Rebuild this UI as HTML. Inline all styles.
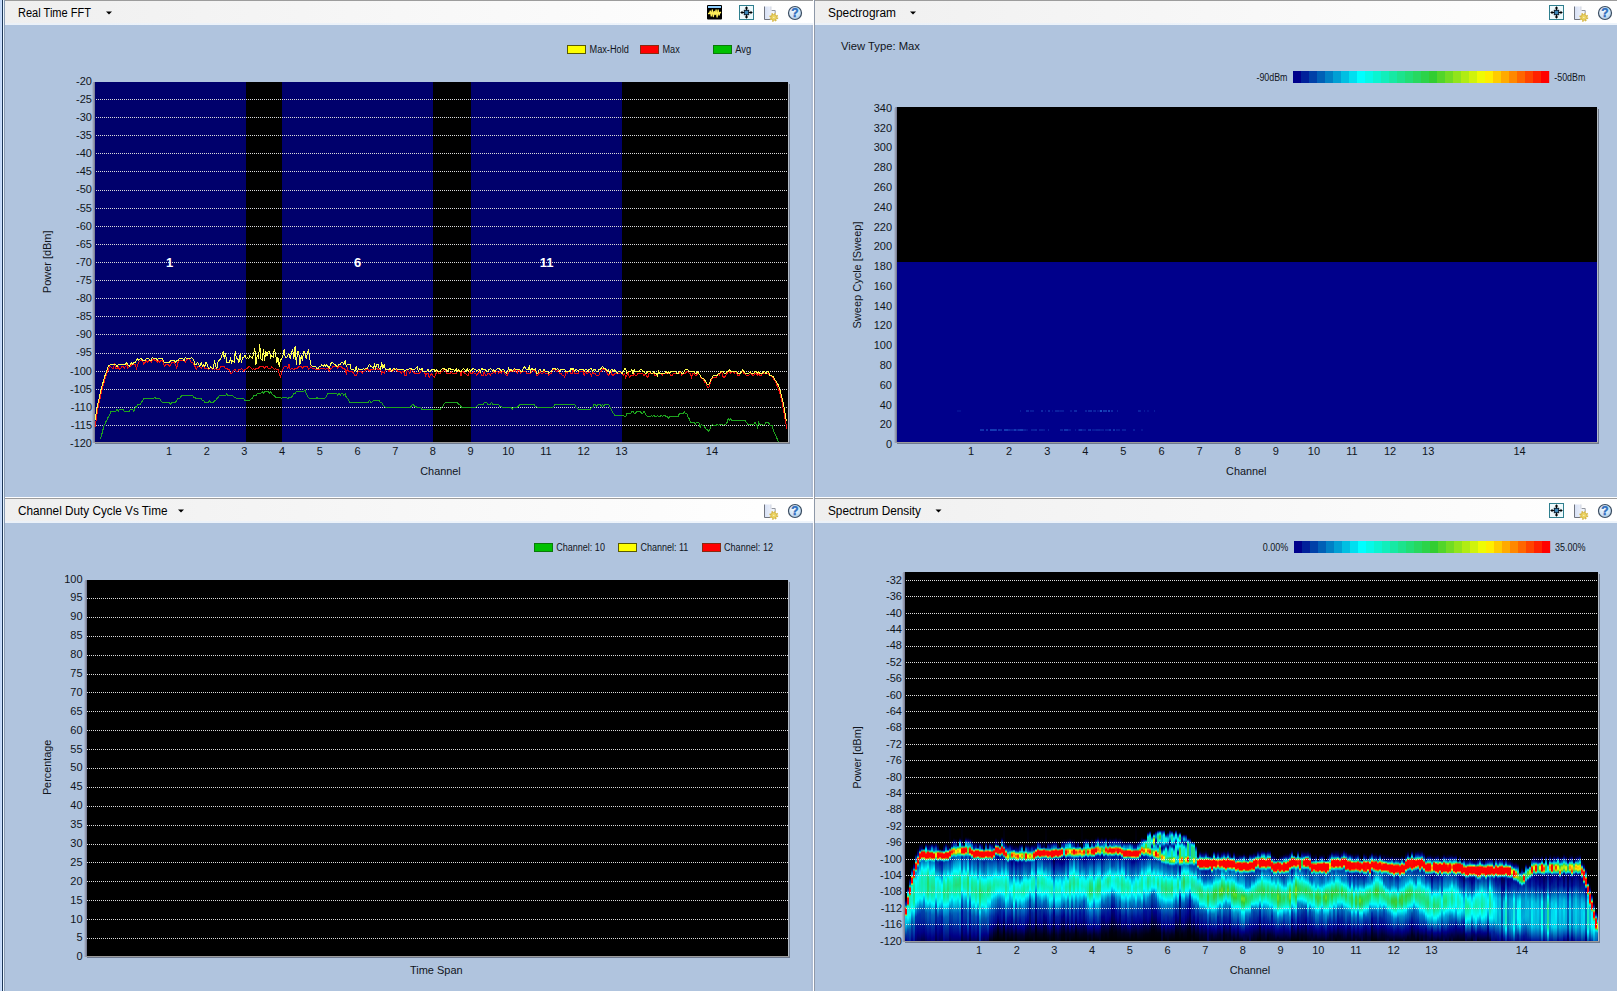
<!DOCTYPE html>
<html><head><meta charset="utf-8"><title>Spectrum</title>
<style>
html,body{margin:0;padding:0;background:#b0c4de;overflow:hidden}
body{width:1617px;height:991px;position:relative;font-family:"Liberation Sans",sans-serif}
#ov{position:absolute;left:0;top:0;z-index:5}
.pb{position:absolute;background:#000}
#dm{position:absolute;display:flex;z-index:2}
#dm i{display:block;flex:none;height:100%}
</style></head><body>
<div class="pb" style="left:95px;top:82px;width:693px;height:360px"></div><div class="pb" style="left:95px;top:82px;width:151px;height:360px;background:#00006c"></div><div class="pb" style="left:282px;top:82px;width:151px;height:360px;background:#00006c"></div><div class="pb" style="left:471px;top:82px;width:151px;height:360px;background:#00006c"></div><div class="pb" style="left:897px;top:107px;width:700px;height:335px"></div><div class="pb" style="left:897px;top:262px;width:700px;height:180px;background:#00008b"></div><div class="pb" style="left:87px;top:580px;width:701px;height:376px"></div><div class="pb" style="left:905px;top:572px;width:693px;height:369px"></div><div id="dm" style="left:905px;top:818px;width:693px;height:123px"><i style="width:2px;background:linear-gradient(#000 0px,#000 80px,#002 82px,#006 84px,#019 85px,#03a 87px,#07b 88px,#1ea 89px,#f60 90px,#f00 91px,#f00 96px,#be1 97px,#1ea 98px,#0ef 99px,#0de 100px,#0ad 108px,#039 117px,#008 123px)"></i><i style="width:2px;background:linear-gradient(#000 0px,#000 68px,#001 70px,#003 71px,#007 72px,#039 73px,#0de 75px,#0fe 76px,#0fd 77px,#1ea 78px,#ce1 79px,#f00 80px,#f00 86px,#5d2 87px,#1eb 88px,#0fe 89px,#0fe 90px,#0ff 100px,#04a 113px,#019 123px)"></i><i style="width:2px;background:linear-gradient(#000 0px,#000 59px,#001 61px,#019 64px,#05b 67px,#0cd 68px,#3c3 69px,#f00 70px,#f00 75px,#f40 76px,#5d2 77px,#1e9 78px,#1eb 79px,#1ec 90px,#0ff 97px,#05a 112px,#029 123px)"></i><i style="width:2px;background:linear-gradient(#000 0px,#000 48px,#001 50px,#005 52px,#018 53px,#06b 55px,#09c 57px,#1ed 58px,#ce1 59px,#f00 60px,#f00 65px,#ff0 66px,#2d7 67px,#1ec 68px,#0fd 69px,#1ec 82px,#0ff 91px,#08c 99px,#05a 104px,#008 123px)"></i><i style="width:2px;background:linear-gradient(#000 0px,#000 43px,#001 45px,#008 49px,#019 50px,#07b 51px,#2d6 52px,#f00 53px,#f00 58px,#f20 59px,#5d2 60px,#1eb 61px,#0fd 62px,#2d9 69px,#2d8 78px,#1e9 85px,#0ff 93px,#09c 100px,#07b 104px,#019 123px)"></i><i style="width:2px;background:linear-gradient(#000 0px,#000 35px,#002 37px,#019 39px,#06b 41px,#09c 43px,#1eb 44px,#fb0 45px,#f00 46px,#f00 51px,#6d2 52px,#0fe 53px,#09c 54px,#08c 55px,#0ff 63px,#0fd 72px,#0ff 84px,#03a 99px,#008 117px,#006 123px)"></i><i style="width:2px;background:linear-gradient(#000 0px,#000 30px,#003 33px,#008 35px,#029 37px,#05b 38px,#1eb 39px,#fa0 40px,#f00 41px,#f00 45px,#fa0 46px,#2d7 47px,#0bd 48px,#07b 49px,#06b 50px,#0ff 59px,#1ec 70px,#0ff 82px,#06b 92px,#03a 97px,#008 114px,#005 123px)"></i><i style="width:2px;background:linear-gradient(#000 0px,#000 26px,#002 28px,#008 32px,#03a 33px,#1ec 34px,#f80 35px,#f00 36px,#f00 41px,#3c3 42px,#0de 43px,#07b 44px,#06b 45px,#0ff 55px,#1ec 61px,#1eb 68px,#1ec 75px,#0ff 80px,#08c 87px,#03a 96px,#008 115px,#005 123px)"></i><i style="width:2px;background:linear-gradient(#000 0px,#000 25px,#005 30px,#008 31px,#07b 32px,#3c5 33px,#f00 34px,#f00 39px,#de1 40px,#1eb 41px,#0ad 42px,#07c 43px,#0ff 50px,#1eb 56px,#1ea 64px,#1eb 74px,#0ff 81px,#08c 88px,#04a 93px,#008 114px,#004 123px)"></i><i style="width:2px;background:linear-gradient(#000 0px,#000 30px,#004 31px,#09c 32px,#8d2 33px,#f00 34px,#f00 39px,#ef0 40px,#1eb 41px,#09c 42px,#07b 43px,#07b 44px,#0ff 52px,#1ec 58px,#1eb 66px,#1ec 73px,#0ff 77px,#08c 84px,#04a 93px,#008 113px,#004 123px)"></i><i style="width:2px;background:linear-gradient(#000 0px,#000 23px,#001 25px,#002 26px,#005 27px,#019 28px,#0ef 31px,#0fd 33px,#2d5 34px,#f60 35px,#f00 36px,#f00 40px,#fa0 41px,#2d6 42px,#0ee 43px,#09c 44px,#09c 45px,#0ff 51px,#1eb 58px,#1ea 66px,#1eb 76px,#0ff 83px,#05a 95px,#008 116px,#005 123px)"></i><i style="width:2px;background:linear-gradient(#000 0px,#000 25px,#002 27px,#008 31px,#05a 32px,#2d7 33px,#f00 34px,#f00 40px,#ae1 41px,#1ed 42px,#0bd 43px,#0ad 44px,#0fe 49px,#2d8 57px,#2d6 65px,#2d7 75px,#0ff 85px,#09c 90px,#06b 95px,#008 119px,#006 123px)"></i><i style="width:2px;background:linear-gradient(#000 0px,#000 25px,#002 27px,#007 29px,#03a 32px,#0de 33px,#7d2 34px,#f00 35px,#f00 39px,#f90 40px,#2d5 41px,#0ee 42px,#07b 43px,#06b 44px,#0ff 55px,#1eb 61px,#1e9 68px,#1eb 76px,#0ff 83px,#09c 89px,#05b 95px,#008 118px,#006 123px)"></i><i style="width:2px;background:linear-gradient(#000 0px,#000 24px,#002 26px,#005 27px,#019 28px,#08c 30px,#0bd 32px,#0fe 33px,#5d2 34px,#f00 35px,#f00 40px,#ce1 41px,#1eb 42px,#0ad 43px,#08c 44px,#08c 45px,#0ff 53px,#1ea 61px,#2d8 69px,#1ea 78px,#0ff 85px,#0ad 91px,#06b 97px,#008 120px,#007 123px)"></i><i style="width:2px;background:linear-gradient(#000 0px,#000 25px,#002 27px,#008 29px,#07b 33px,#0fd 34px,#be1 35px,#f00 36px,#f00 40px,#fc0 41px,#2d6 42px,#0de 43px,#09c 44px,#08c 45px,#0ff 51px,#1ea 61px,#2d8 70px,#1eb 78px,#0ff 86px,#09c 92px,#06b 97px,#008 119px,#007 123px)"></i><i style="width:2px;background:linear-gradient(#000 0px,#000 23px,#001 25px,#005 27px,#008 28px,#05b 30px,#07b 32px,#0de 33px,#2d7 34px,#be1 35px,#fd0 36px,#fc0 38px,#ce1 39px,#3c4 40px,#0fe 41px,#06b 42px,#029 43px,#029 44px,#05a 50px,#0ff 61px,#1ed 71px,#0ff 79px,#06b 87px,#039 95px,#008 111px,#004 123px)"></i><i style="width:2px;background:linear-gradient(#000 0px,#000 25px,#001 27px,#007 31px,#019 32px,#0bd 33px,#9e1 34px,#f00 35px,#f00 40px,#fe0 41px,#1ec 42px,#06b 43px,#039 44px,#03a 47px,#07b 53px,#0ff 60px,#1ec 65px,#1eb 72px,#1ec 79px,#0ff 87px,#06b 96px,#03a 100px,#008 117px,#006 123px)"></i><i style="width:2px;background:linear-gradient(#000 0px,#000 31px,#005 32px,#09c 33px,#3c3 34px,#f30 35px,#f00 36px,#f00 39px,#ff0 40px,#2d9 41px,#09c 42px,#039 43px,#019 45px,#05a 52px,#0ff 63px,#1eb 73px,#1ec 77px,#0ff 84px,#06b 93px,#03a 98px,#008 114px,#005 123px)"></i><i style="width:2px;background:linear-gradient(#000 0px,#000 31px,#002 32px,#04a 33px,#2d8 34px,#f40 35px,#f00 36px,#f00 40px,#8d2 41px,#0fe 42px,#04a 43px,#019 44px,#019 45px,#03a 52px,#0ff 67px,#0fd 74px,#0ff 80px,#0de 84px,#05b 93px,#029 99px,#008 112px,#005 123px)"></i><i style="width:2px;background:linear-gradient(#000 0px,#000 26px,#002 28px,#008 32px,#039 33px,#0ff 34px,#be1 35px,#f00 36px,#f00 40px,#fe0 41px,#2d9 42px,#0ad 43px,#05a 44px,#04a 45px,#07b 50px,#0fe 58px,#1e9 66px,#2d7 74px,#1e9 80px,#0ff 87px,#0bd 91px,#05b 101px,#008 123px)"></i><i style="width:2px;background:linear-gradient(#000 0px,#000 24px,#002 26px,#008 28px,#06b 30px,#09c 32px,#0ff 33px,#5d2 34px,#f00 35px,#f00 39px,#f40 40px,#4c3 41px,#0ff 42px,#06b 43px,#04a 44px,#0ff 62px,#1eb 67px,#1e9 73px,#1eb 81px,#0ff 87px,#0ad 92px,#06b 99px,#007 123px)"></i><i style="width:2px;background:linear-gradient(#000 0px,#000 25px,#001 27px,#007 31px,#029 32px,#0fe 33px,#fd0 34px,#f00 35px,#f00 40px,#5d2 41px,#0ff 42px,#07b 43px,#05b 44px,#09c 51px,#0ff 56px,#1e9 63px,#2d7 71px,#2d9 79px,#0ff 86px,#0ad 91px,#06b 99px,#007 123px)"></i><i style="width:2px;background:linear-gradient(#000 0px,#001 26px,#002 29px,#003 30px,#04a 31px,#1e9 32px,#f50 33px,#f00 34px,#f00 38px,#de1 39px,#1ec 40px,#07b 41px,#03a 42px,#03a 44px,#08c 52px,#0ff 59px,#1ea 65px,#1e9 71px,#1eb 76px,#0ff 82px,#09c 88px,#04a 96px,#008 116px,#005 123px)"></i><i style="width:2px;background:linear-gradient(#000 0px,#000 22px,#007 28px,#029 29px,#0de 30px,#4c3 31px,#f90 32px,#f20 33px,#f20 35px,#fa0 36px,#4c3 37px,#0fd 38px,#07c 39px,#04a 40px,#04a 42px,#08c 49px,#0ff 56px,#1ea 68px,#1eb 74px,#0ff 79px,#0bd 84px,#04a 98px,#008 117px,#006 123px)"></i><i style="width:2px;background:linear-gradient(#000 0px,#000 20px,#002 22px,#007 24px,#019 25px,#05a 28px,#0ce 29px,#2d5 30px,#fe0 31px,#f70 32px,#f60 33px,#f60 34px,#fb0 35px,#6d2 36px,#1eb 37px,#0ad 38px,#06b 39px,#05a 40px,#08c 45px,#0ff 53px,#1e9 61px,#2d8 68px,#1ea 75px,#0ff 82px,#06b 95px,#008 118px,#006 123px)"></i><i style="width:2px;background:linear-gradient(#000 0px,#000 21px,#003 23px,#006 24px,#019 25px,#08c 29px,#0fe 30px,#3c3 31px,#df0 32px,#fe0 33px,#fd0 34px,#fe0 35px,#8d2 36px,#2d7 37px,#0ee 38px,#07b 39px,#06b 40px,#0bd 48px,#0ff 53px,#2d9 62px,#2d7 67px,#1e9 73px,#0fe 81px,#06b 95px,#008 118px,#006 123px)"></i><i style="width:2px;background:linear-gradient(#000 0px,#000 21px,#003 27px,#019 28px,#0de 29px,#3c4 30px,#ef0 31px,#fc0 32px,#fa0 33px,#fc0 34px,#ae1 35px,#2d6 36px,#0ef 37px,#08c 38px,#06b 39px,#0ff 54px,#1e9 61px,#2d7 67px,#1ea 73px,#0fe 79px,#05b 96px,#008 118px,#006 123px)"></i><i style="width:2px;background:linear-gradient(#000 0px,#000 19px,#002 21px,#006 22px,#029 23px,#0de 25px,#0fe 26px,#0fd 28px,#1ea 29px,#4c3 30px,#de1 31px,#ff0 32px,#ff0 33px,#ff0 34px,#9e1 35px,#2d6 36px,#0fe 37px,#09c 38px,#07b 39px,#07c 40px,#0ff 51px,#2d8 61px,#2d7 66px,#1e9 75px,#0ff 83px,#07b 95px,#04a 109px,#008 119px,#006 123px)"></i><i style="width:2px;background:linear-gradient(#000 0px,#001 21px,#003 23px,#007 25px,#019 27px,#06b 28px,#2d9 29px,#f70 30px,#f00 31px,#f00 35px,#ae1 36px,#1ed 37px,#06b 38px,#029 39px,#029 40px,#07b 51px,#0ff 58px,#1ed 65px,#0ff 72px,#06b 82px,#019 93px,#008 107px,#003 123px)"></i><i style="width:2px;background:linear-gradient(#000 0px,#000 26px,#002 27px,#039 28px,#1e9 29px,#f30 30px,#f00 31px,#f00 35px,#fc0 36px,#1e9 37px,#0ad 38px,#05b 39px,#05b 40px,#0ad 48px,#0ff 53px,#1e9 65px,#1ea 69px,#0ff 76px,#0ad 83px,#04a 94px,#008 115px,#004 123px)"></i><i style="width:2px;background:linear-gradient(#000 0px,#000 19px,#003 21px,#006 22px,#029 23px,#0ad 25px,#0ce 27px,#0fd 28px,#5d2 29px,#f40 30px,#f00 31px,#f00 34px,#fc0 35px,#2d6 36px,#0ce 37px,#05a 38px,#03a 39px,#09c 51px,#0ff 56px,#1eb 61px,#1ea 66px,#1eb 71px,#0ff 76px,#08c 83px,#04a 93px,#008 113px,#004 123px)"></i><i style="width:2px;background:linear-gradient(#000 0px,#000 19px,#002 21px,#008 23px,#07b 25px,#09c 26px,#0ad 28px,#0fe 29px,#2d6 30px,#6d2 31px,#8d2 33px,#7d2 34px,#3c4 35px,#1ea 36px,#0ce 37px,#07c 38px,#06b 39px,#0ff 51px,#2d8 59px,#2d6 65px,#2d9 75px,#0ff 83px,#06b 95px,#04a 109px,#008 118px,#005 123px)"></i><i style="width:2px;background:linear-gradient(#000 0px,#000 20px,#003 22px,#007 23px,#06b 25px,#09c 27px,#0ce 28px,#2d6 29px,#f50 30px,#f00 31px,#f00 35px,#ff0 36px,#1eb 37px,#07b 38px,#029 39px,#029 43px,#07b 52px,#0ff 60px,#1ed 67px,#0ff 75px,#06b 84px,#029 96px,#008 110px,#003 123px)"></i><i style="width:2px;background:linear-gradient(#000 0px,#000 21px,#002 23px,#004 24px,#008 25px,#06b 27px,#08c 29px,#0de 30px,#2d6 31px,#fa0 32px,#f00 33px,#f00 36px,#fc0 37px,#3c5 38px,#0ef 39px,#07b 40px,#05a 41px,#07c 46px,#0ff 56px,#1e9 64px,#2d8 70px,#1ea 76px,#0ff 85px,#09c 92px,#05b 98px,#008 118px,#005 123px)"></i><i style="width:2px;background:linear-gradient(#000 0px,#000 23px,#001 25px,#008 28px,#029 30px,#05a 31px,#1ec 32px,#fb0 33px,#f00 34px,#f00 39px,#3c3 40px,#0de 41px,#05a 42px,#04a 43px,#08c 52px,#0fe 59px,#1ea 65px,#1e9 71px,#1eb 77px,#0ff 84px,#09c 90px,#05a 97px,#008 116px,#005 123px)"></i><i style="width:2px;background:linear-gradient(#000 0px,#000 23px,#002 25px,#008 27px,#04a 30px,#0ce 31px,#9e1 32px,#f00 33px,#f00 38px,#f50 39px,#2d8 40px,#09c 41px,#05a 42px,#04a 43px,#09c 51px,#0ff 58px,#1ea 65px,#2d8 72px,#1ea 80px,#0ff 88px,#09c 94px,#05b 99px,#008 118px,#005 123px)"></i><i style="width:2px;background:linear-gradient(#000 0px,#000 23px,#005 29px,#008 30px,#0bd 31px,#ae1 32px,#f00 33px,#f00 38px,#9e1 39px,#0ff 40px,#04a 41px,#029 42px,#039 47px,#07b 55px,#0ff 63px,#1ec 68px,#1eb 73px,#1ec 78px,#0ff 84px,#07b 92px,#03a 99px,#008 114px,#004 123px)"></i><i style="width:2px;background:linear-gradient(#000 0px,#000 23px,#002 25px,#008 27px,#06b 29px,#08c 31px,#0fe 32px,#ae1 33px,#f00 34px,#f00 38px,#f40 39px,#3c3 40px,#0ef 41px,#07b 42px,#05a 43px,#08c 49px,#0ff 58px,#2d8 66px,#2d5 74px,#2d8 84px,#0ef 94px,#0ad 98px,#07b 103px,#029 123px)"></i><i style="width:2px;background:linear-gradient(#000 0px,#000 24px,#002 26px,#008 29px,#019 30px,#03a 31px,#0fe 32px,#fc0 33px,#f00 34px,#f00 39px,#6d2 40px,#0ee 41px,#05a 42px,#039 43px,#08c 54px,#0ff 61px,#1ea 68px,#2d8 74px,#1e9 79px,#0fe 86px,#0ff 87px,#09c 92px,#05a 101px,#008 117px,#005 123px)"></i><i style="width:2px;background:linear-gradient(#000 0px,#000 30px,#003 31px,#06b 32px,#3c5 33px,#f00 34px,#f00 39px,#9d2 40px,#0fe 41px,#05b 42px,#039 43px,#029 44px,#07b 54px,#0ff 62px,#1ea 69px,#1e9 74px,#1ea 79px,#0fe 87px,#08c 94px,#05a 100px,#008 116px,#004 123px)"></i><i style="width:2px;background:linear-gradient(#000 0px,#000 23px,#003 25px,#019 27px,#06b 29px,#07b 30px,#0ad 31px,#2d9 32px,#fa0 33px,#f00 34px,#f00 38px,#ef0 39px,#1eb 40px,#08c 41px,#03a 42px,#039 43px,#09c 56px,#0ff 62px,#1eb 67px,#1ea 73px,#1ec 83px,#0ff 89px,#08c 96px,#05a 101px,#008 116px,#005 123px)"></i><i style="width:2px;background:linear-gradient(#000 0px,#000 25px,#005 30px,#039 31px,#1eb 32px,#f50 33px,#f00 34px,#f00 38px,#f40 39px,#2d6 40px,#0bd 41px,#05b 42px,#04a 43px,#0ff 60px,#1e9 67px,#2d7 72px,#1e9 77px,#0ff 83px,#05b 100px,#04a 109px,#008 117px,#004 123px)"></i><i style="width:2px;background:linear-gradient(#000 0px,#000 23px,#002 25px,#008 27px,#05b 29px,#09c 31px,#1eb 32px,#fd0 33px,#f00 34px,#f00 38px,#f70 39px,#2d6 40px,#0bd 41px,#04a 42px,#03a 43px,#0bd 56px,#0ff 60px,#1ea 65px,#2d8 70px,#1ea 76px,#0ff 84px,#08c 91px,#04a 98px,#008 111px,#001 123px)"></i><i style="width:2px;background:linear-gradient(#000 0px,#000 24px,#002 26px,#008 28px,#05b 31px,#0ad 32px,#3c4 33px,#f00 34px,#f00 39px,#f60 40px,#2d8 41px,#09c 42px,#04a 43px,#04a 44px,#0ad 55px,#0ff 60px,#1ea 69px,#1eb 73px,#0ff 79px,#0ad 84px,#03a 98px,#008 110px,#001 123px)"></i><i style="width:2px;background:linear-gradient(#000 0px,#000 23px,#004 29px,#008 30px,#0bd 31px,#6d2 32px,#f00 33px,#f00 37px,#fc0 38px,#2d7 39px,#0ad 40px,#04a 41px,#03a 42px,#0ad 53px,#0ff 58px,#1eb 63px,#1e9 67px,#1ea 71px,#0ef 78px,#0ad 82px,#029 99px,#008 107px,#003 115px,#000 123px)"></i><i style="width:2px;background:linear-gradient(#000 0px,#000 20px,#008 26px,#04a 27px,#1eb 28px,#fc0 29px,#f00 30px,#f00 34px,#9d2 35px,#0fd 36px,#05b 37px,#029 38px,#029 40px,#08c 49px,#0ff 57px,#1eb 64px,#1eb 67px,#0ff 76px,#09c 82px,#029 96px,#008 105px,#002 116px,#000 123px)"></i><i style="width:2px;background:linear-gradient(#000 0px,#000 21px,#004 26px,#007 27px,#0ad 28px,#7d2 29px,#f00 30px,#f10 35px,#3c3 36px,#0bd 37px,#029 38px,#008 39px,#008 40px,#07b 52px,#0ff 59px,#1eb 64px,#1ea 67px,#0ff 74px,#07b 82px,#008 99px,#001 114px,#000 123px)"></i><i style="width:2px;background:linear-gradient(#000 0px,#000 27px,#003 28px,#05b 29px,#2d7 30px,#f70 31px,#f00 32px,#f00 35px,#fa0 36px,#2d6 37px,#0bd 38px,#03a 39px,#029 40px,#07c 53px,#0ff 59px,#1ec 63px,#1eb 67px,#0ff 74px,#07c 81px,#029 93px,#008 103px,#002 116px,#000 123px)"></i><i style="width:2px;background:linear-gradient(#000 0px,#000 19px,#003 21px,#007 22px,#05b 24px,#09c 26px,#0ce 27px,#2d6 28px,#f20 29px,#f00 30px,#f00 34px,#f60 35px,#2d7 36px,#09c 37px,#03a 38px,#029 39px,#07b 48px,#0ff 56px,#1eb 65px,#1ec 69px,#0ff 75px,#09c 81px,#03a 93px,#008 106px,#002 117px,#000 123px)"></i><i style="width:2px;background:linear-gradient(#000 0px,#001 22px,#003 24px,#018 26px,#039 28px,#07b 29px,#2d8 30px,#f00 31px,#f00 36px,#f20 37px,#2d6 38px,#08c 39px,#029 40px,#018 41px,#06b 50px,#0ff 59px,#1eb 67px,#0ff 76px,#06b 86px,#019 95px,#008 99px,#001 114px,#000 123px)"></i><i style="width:2px;background:linear-gradient(#000 0px,#000 24px,#002 26px,#008 28px,#03a 31px,#09c 32px,#2d8 33px,#fd0 34px,#f10 35px,#f00 38px,#fd0 39px,#2d6 40px,#0de 41px,#06b 42px,#04a 43px,#0ff 56px,#1ea 64px,#2d9 69px,#1ea 74px,#0ff 82px,#07b 92px,#04a 99px,#008 109px,#003 116px,#001 123px)"></i><i style="width:2px;background:linear-gradient(#000 0px,#000 25px,#001 27px,#006 29px,#04a 31px,#07c 34px,#0ff 35px,#2d6 36px,#9e1 37px,#ce1 38px,#ce1 39px,#be1 40px,#5c3 41px,#1ea 42px,#0bd 43px,#05a 44px,#03a 45px,#07b 51px,#0ff 59px,#1ec 66px,#1eb 70px,#0ff 80px,#05b 91px,#019 100px,#008 105px,#002 116px,#000 123px)"></i><i style="width:2px;background:linear-gradient(#000 0px,#000 24px,#001 26px,#006 28px,#019 29px,#06b 33px,#0ee 34px,#3c4 36px,#3c3 38px,#3c4 39px,#0ef 41px,#06b 42px,#029 43px,#019 44px,#06b 56px,#0de 66px,#0ff 71px,#019 99px,#007 108px,#003 116px,#000 123px)"></i><i style="width:2px;background:linear-gradient(#000 0px,#000 25px,#002 27px,#008 31px,#019 32px,#09c 33px,#2d6 34px,#fc0 35px,#f30 36px,#f20 38px,#f90 39px,#6d2 40px,#0fd 41px,#05b 42px,#008 43px,#007 44px,#008 46px,#06b 59px,#0ff 68px,#0fe 72px,#0ff 77px,#05a 88px,#008 101px,#006 109px,#002 116px,#000 123px)"></i><i style="width:2px;background:linear-gradient(#000 0px,#000 24px,#001 27px,#005 31px,#029 32px,#0ff 33px,#4c3 34px,#fd0 35px,#f90 36px,#f90 37px,#fc0 38px,#9d2 39px,#1e9 40px,#0ad 41px,#039 42px,#019 43px,#09c 56px,#0ff 62px,#1ea 69px,#1e9 73px,#0ff 86px,#08c 94px,#039 103px,#008 110px,#003 117px,#001 123px)"></i><i style="width:2px;background:linear-gradient(#000 0px,#000 26px,#002 28px,#008 32px,#029 33px,#0ad 34px,#2d6 35px,#ff0 36px,#f70 37px,#f60 38px,#f70 39px,#ff0 40px,#3c4 41px,#0ef 42px,#04a 43px,#008 44px,#008 46px,#05b 58px,#0ff 66px,#1ec 73px,#0ff 80px,#07b 85px,#05b 87px,#018 101px,#006 109px,#002 116px,#000 123px)"></i><i style="width:2px;background:linear-gradient(#000 0px,#000 26px,#001 28px,#018 33px,#07b 34px,#1e9 35px,#ef0 36px,#f30 37px,#f20 39px,#f60 40px,#be1 41px,#1ea 42px,#09c 43px,#029 44px,#019 46px,#07b 56px,#0ff 65px,#1eb 73px,#0ff 82px,#07b 92px,#039 100px,#008 110px,#003 117px,#001 123px)"></i><i style="width:2px;background:linear-gradient(#000 0px,#000 24px,#002 27px,#007 29px,#018 30px,#029 32px,#06b 33px,#0fe 34px,#3c3 35px,#ce1 36px,#df0 37px,#ef0 38px,#be1 39px,#3c4 40px,#1ed 41px,#07b 42px,#029 43px,#008 44px,#07b 61px,#0ff 67px,#1eb 73px,#0ff 80px,#07b 88px,#019 102px,#008 109px,#003 117px,#001 123px)"></i><i style="width:2px;background:linear-gradient(#000 0px,#000 25px,#003 27px,#007 28px,#0ad 31px,#0bd 33px,#0fe 34px,#3c4 35px,#fe0 36px,#f80 37px,#f80 38px,#f90 39px,#ef0 40px,#3c4 41px,#0fe 42px,#06b 43px,#029 44px,#019 45px,#08c 60px,#0ff 65px,#1eb 70px,#1ea 73px,#0ff 82px,#08c 89px,#03a 99px,#008 110px,#003 117px,#001 123px)"></i><i style="width:2px;background:linear-gradient(#000 0px,#000 31px,#001 32px,#018 33px,#0ce 34px,#2d7 35px,#6d2 36px,#8d2 38px,#6d2 39px,#2d6 40px,#0fd 41px,#08c 42px,#03a 43px,#029 44px,#09c 56px,#0ff 62px,#1ea 68px,#1e9 72px,#1ea 75px,#0ff 81px,#0ad 86px,#03a 99px,#008 111px,#003 118px,#001 123px)"></i><i style="width:2px;background:linear-gradient(#000 0px,#000 24px,#001 26px,#005 28px,#018 29px,#07b 31px,#09c 33px,#0fd 34px,#ae1 35px,#f00 36px,#f00 40px,#f50 41px,#3c4 42px,#0cd 43px,#04a 44px,#029 45px,#07b 54px,#0ff 62px,#1eb 70px,#1ec 74px,#0ff 78px,#08c 85px,#019 101px,#008 106px,#002 116px,#000 123px)"></i><i style="width:2px;background:linear-gradient(#000 0px,#001 26px,#003 28px,#019 30px,#04a 33px,#09c 34px,#1eb 35px,#6d2 36px,#df0 37px,#ef0 38px,#ef0 39px,#ae1 40px,#2d5 41px,#0fe 42px,#06b 43px,#029 44px,#029 45px,#07b 57px,#0fe 63px,#1ea 69px,#1eb 72px,#0ff 77px,#07b 84px,#019 98px,#008 103px,#002 115px,#000 123px)"></i><i style="width:2px;background:linear-gradient(#000 0px,#000 26px,#002 28px,#008 31px,#018 32px,#029 33px,#09c 34px,#2d8 35px,#de1 36px,#f80 37px,#f80 39px,#fe0 40px,#4c3 41px,#0fd 42px,#07b 43px,#029 44px,#029 46px,#05a 54px,#0ff 62px,#0fd 67px,#0ff 72px,#04a 82px,#018 93px,#000 123px)"></i><i style="width:2px;background:linear-gradient(#000 0px,#000 25px,#002 27px,#007 29px,#029 30px,#05a 33px,#0ad 34px,#1ea 35px,#6d2 36px,#be1 37px,#ce1 39px,#7d2 40px,#2d6 41px,#0fe 42px,#08c 43px,#05b 44px,#05b 45px,#09c 50px,#0ff 55px,#1ea 66px,#1eb 70px,#0ff 76px,#09c 82px,#029 95px,#008 106px,#002 116px,#000 123px)"></i><i style="width:2px;background:linear-gradient(#000 0px,#000 25px,#002 27px,#008 30px,#008 31px,#019 32px,#08c 33px,#2d6 34px,#f60 35px,#f00 36px,#f00 39px,#f50 40px,#5c3 41px,#0fe 42px,#07c 43px,#06b 44px,#0ad 53px,#0ef 57px,#1eb 61px,#1ea 66px,#0ff 78px,#07b 87px,#039 95px,#008 107px,#002 116px,#001 123px)"></i><i style="width:2px;background:linear-gradient(#000 0px,#000 24px,#006 30px,#03a 31px,#1ec 32px,#fe0 33px,#f00 34px,#f00 37px,#f10 38px,#8d2 39px,#0fe 40px,#05a 41px,#019 42px,#018 43px,#04a 53px,#0ce 62px,#0de 66px,#04a 81px,#008 92px,#001 113px,#000 123px)"></i><i style="width:2px;background:linear-gradient(#000 0px,#000 22px,#003 24px,#019 26px,#06b 29px,#0bd 30px,#3c5 31px,#f30 32px,#f00 33px,#f00 37px,#7d2 38px,#0fe 39px,#07b 40px,#04a 41px,#08c 48px,#0ff 54px,#1eb 60px,#2d9 65px,#1ea 69px,#0ff 75px,#09c 80px,#039 93px,#008 105px,#002 115px,#000 123px)"></i><i style="width:2px;background:linear-gradient(#000 0px,#000 22px,#001 24px,#006 26px,#019 27px,#05b 30px,#0ee 31px,#8d2 32px,#f00 33px,#f00 38px,#8d2 39px,#0fe 40px,#06b 41px,#04a 42px,#07c 48px,#0ff 55px,#1eb 65px,#0ff 75px,#07c 83px,#029 93px,#008 104px,#002 116px,#000 123px)"></i><i style="width:2px;background:linear-gradient(#000 0px,#000 23px,#004 29px,#018 30px,#0de 31px,#be1 32px,#f00 33px,#f00 37px,#f70 38px,#2d6 39px,#0bd 40px,#05a 41px,#04a 42px,#0fe 55px,#1e9 65px,#0ff 77px,#06b 87px,#039 93px,#008 106px,#002 116px,#000 123px)"></i><i style="width:2px;background:linear-gradient(#000 0px,#000 23px,#006 29px,#04a 30px,#1ea 31px,#f30 32px,#f00 33px,#f00 37px,#f60 38px,#2d8 39px,#08c 40px,#029 41px,#029 43px,#06b 51px,#0ff 57px,#1eb 62px,#1ea 66px,#1eb 71px,#0ff 76px,#06b 84px,#008 98px,#001 116px,#000 123px)"></i><i style="width:2px;background:linear-gradient(#000 0px,#001 28px,#001 29px,#006 30px,#0ad 31px,#4c3 32px,#f30 33px,#f00 34px,#f10 37px,#be1 38px,#1eb 39px,#07b 40px,#029 41px,#029 43px,#05a 48px,#0ff 58px,#1eb 67px,#1ec 71px,#0ff 75px,#07b 82px,#008 100px,#002 114px,#000 123px)"></i><i style="width:2px;background:linear-gradient(#000 0px,#000 23px,#002 25px,#007 27px,#04a 30px,#08c 31px,#2d8 32px,#f30 33px,#f00 34px,#f00 38px,#fc0 39px,#1ea 40px,#07b 41px,#029 42px,#029 44px,#07b 52px,#0ff 61px,#1eb 69px,#0ff 77px,#07b 87px,#029 97px,#008 107px,#002 117px,#000 123px)"></i><i style="width:2px;background:linear-gradient(#000 0px,#000 23px,#002 25px,#008 28px,#029 30px,#08c 31px,#2d8 32px,#f90 33px,#f00 34px,#f00 37px,#f70 38px,#3c3 39px,#0ee 40px,#05a 41px,#029 42px,#07b 51px,#0ff 60px,#1eb 70px,#0ff 82px,#07b 92px,#03a 99px,#008 110px,#002 118px,#001 123px)"></i><i style="width:2px;background:linear-gradient(#000 0px,#000 22px,#001 24px,#005 26px,#018 27px,#06b 30px,#0cd 31px,#5c3 32px,#f00 33px,#f00 39px,#2d6 40px,#08c 41px,#019 42px,#008 43px,#08c 58px,#0ff 63px,#1eb 68px,#1ea 71px,#1eb 75px,#0ff 81px,#07b 89px,#029 97px,#008 106px,#002 116px,#000 123px)"></i><i style="width:2px;background:linear-gradient(#000 0px,#000 22px,#002 24px,#008 26px,#05b 28px,#08c 30px,#1ec 31px,#fb0 32px,#f00 33px,#f00 38px,#8d2 39px,#0ce 40px,#018 41px,#004 42px,#004 43px,#008 51px,#0ad 65px,#0de 72px,#0bd 78px,#029 90px,#008 95px,#001 116px,#000 123px)"></i><i style="width:2px;background:linear-gradient(#000 0px,#000 22px,#002 24px,#008 26px,#06b 29px,#09c 30px,#2d7 31px,#f30 32px,#f00 33px,#f00 37px,#fc0 38px,#1eb 39px,#05b 40px,#008 41px,#007 42px,#008 44px,#06b 56px,#0ff 63px,#1eb 72px,#0ff 82px,#06b 92px,#029 99px,#008 107px,#002 117px,#001 123px)"></i><i style="width:2px;background:linear-gradient(#000 0px,#000 23px,#001 25px,#006 29px,#018 30px,#0bd 31px,#9d2 32px,#f00 33px,#f00 38px,#4c3 39px,#0cd 40px,#029 41px,#008 42px,#008 43px,#04a 52px,#0ff 65px,#1ec 73px,#0ff 81px,#06b 92px,#029 99px,#008 109px,#003 117px,#001 123px)"></i><i style="width:2px;background:linear-gradient(#000 0px,#000 28px,#001 29px,#029 30px,#1eb 31px,#f50 32px,#f00 33px,#f00 37px,#fc0 38px,#1eb 39px,#06b 40px,#008 41px,#007 42px,#008 45px,#05b 54px,#0ff 63px,#1eb 72px,#0ff 81px,#05a 92px,#029 98px,#007 108px,#002 117px,#001 123px)"></i><i style="width:2px;background:linear-gradient(#000 0px,#000 21px,#001 23px,#008 26px,#05a 29px,#0ff 30px,#ae1 31px,#f00 32px,#f00 36px,#fc0 37px,#2d9 38px,#07b 39px,#008 40px,#006 41px,#008 46px,#04a 53px,#0ce 63px,#0ff 70px,#0de 78px,#03a 92px,#008 99px,#001 117px,#000 123px)"></i><i style="width:2px;background:linear-gradient(#000 0px,#000 21px,#002 23px,#007 25px,#019 26px,#03a 29px,#07b 30px,#0ef 31px,#1eb 32px,#1ea 33px,#1eb 35px,#0fd 36px,#0bd 37px,#04a 38px,#008 39px,#006 40px,#008 45px,#05a 54px,#0ff 64px,#1ed 70px,#0ff 77px,#05a 87px,#008 97px,#001 116px,#000 123px)"></i><i style="width:2px;background:linear-gradient(#000 0px,#000 21px,#002 23px,#005 24px,#019 25px,#09c 27px,#0bd 29px,#0ff 30px,#3c4 31px,#f80 32px,#f00 33px,#f00 36px,#fc0 37px,#2d6 38px,#0bd 39px,#03a 40px,#019 41px,#019 42px,#09c 54px,#0ff 60px,#1ea 69px,#1eb 73px,#0ff 79px,#09c 85px,#029 100px,#008 107px,#002 116px,#001 123px)"></i><i style="width:2px;background:linear-gradient(#000 0px,#000 20px,#001 22px,#004 23px,#008 24px,#0ad 27px,#0bd 29px,#1ec 30px,#6d2 31px,#fa0 32px,#f60 33px,#f60 34px,#f80 35px,#ce1 36px,#2d7 37px,#0cd 38px,#039 39px,#008 40px,#008 42px,#07c 58px,#0ff 63px,#1ec 66px,#1eb 69px,#1ec 72px,#0ff 76px,#07b 83px,#019 97px,#008 101px,#002 115px,#000 123px)"></i><i style="width:2px;background:linear-gradient(#000 0px,#000 20px,#002 22px,#005 23px,#029 24px,#0ad 26px,#0de 27px,#0ef 29px,#1ea 30px,#5d2 31px,#ef0 32px,#fe0 33px,#df0 35px,#5d2 36px,#1ea 37px,#0ad 38px,#04a 39px,#039 40px,#0ad 51px,#0ff 56px,#2d9 64px,#2d7 68px,#2d8 71px,#0fe 80px,#07b 91px,#039 99px,#008 109px,#002 116px,#001 123px)"></i><i style="width:2px;background:linear-gradient(#000 0px,#000 21px,#002 23px,#008 25px,#04a 27px,#06b 29px,#0de 30px,#2d5 31px,#fe0 32px,#f50 33px,#f50 34px,#f50 35px,#fc0 36px,#5d2 37px,#1ec 38px,#07b 39px,#03a 40px,#029 41px,#06b 47px,#0ff 55px,#1eb 61px,#1ea 66px,#0ff 76px,#06b 84px,#029 92px,#008 102px,#002 116px,#000 123px)"></i><i style="width:2px;background:linear-gradient(#000 0px,#000 21px,#002 23px,#006 25px,#018 26px,#029 28px,#05b 29px,#0fe 30px,#ae1 31px,#f00 32px,#f00 35px,#f20 36px,#ae1 37px,#1eb 38px,#09c 39px,#06b 40px,#06b 41px,#0ff 53px,#1ea 59px,#2d8 65px,#1e9 71px,#0ff 78px,#07b 89px,#03a 97px,#008 108px,#002 116px,#000 123px)"></i><i style="width:2px;background:linear-gradient(#000 0px,#000 23px,#005 28px,#008 29px,#08c 30px,#2d7 31px,#fe0 32px,#f40 33px,#f30 34px,#f20 35px,#f90 36px,#7d2 37px,#1ec 38px,#08c 39px,#039 40px,#029 41px,#07b 50px,#0ff 57px,#1ec 62px,#1eb 66px,#0ff 75px,#07b 83px,#029 94px,#008 100px,#001 114px,#000 123px)"></i><i style="width:2px;background:linear-gradient(#000 0px,#000 22px,#002 24px,#007 26px,#019 28px,#039 29px,#0ad 30px,#2d8 31px,#df0 32px,#f90 33px,#f70 35px,#fd0 36px,#5d2 37px,#1ec 38px,#08c 39px,#04a 40px,#04a 41px,#0ad 52px,#0fe 57px,#1eb 61px,#1e9 66px,#0ef 78px,#08c 85px,#03a 95px,#008 106px,#002 115px,#000 123px)"></i><i style="width:2px;background:linear-gradient(#000 0px,#000 22px,#003 28px,#019 29px,#0ef 30px,#5d2 31px,#f90 32px,#f40 33px,#f40 34px,#f70 35px,#df0 36px,#2d7 37px,#0ce 38px,#03a 39px,#019 40px,#019 41px,#06b 53px,#0ff 61px,#0fd 67px,#0ff 75px,#04a 88px,#019 95px,#008 103px,#002 117px,#000 123px)"></i><i style="width:2px;background:linear-gradient(#000 0px,#001 28px,#002 29px,#007 30px,#0bd 31px,#2d5 32px,#ff0 33px,#f90 34px,#f80 35px,#fa0 36px,#ce1 37px,#2d6 38px,#0de 39px,#04a 40px,#029 41px,#029 42px,#07b 51px,#0ff 59px,#1eb 68px,#0ff 77px,#07b 84px,#029 96px,#008 104px,#002 116px,#000 123px)"></i><i style="width:2px;background:linear-gradient(#000 0px,#000 21px,#002 23px,#007 25px,#019 26px,#05a 29px,#0de 30px,#3c4 31px,#f90 32px,#f20 33px,#f10 35px,#f80 36px,#7d2 37px,#1ed 38px,#05b 39px,#018 40px,#008 42px,#04a 49px,#0ff 61px,#1ec 69px,#0ff 75px,#05b 83px,#019 95px,#006 106px,#002 115px,#000 123px)"></i><i style="width:2px;background:linear-gradient(#000 0px,#000 20px,#002 22px,#005 23px,#019 24px,#09c 26px,#0bd 27px,#0ce 29px,#0fe 30px,#2d7 31px,#4c3 32px,#5d2 33px,#3c3 35px,#2d8 36px,#0ff 37px,#05b 38px,#018 39px,#008 41px,#08c 57px,#0fe 63px,#1eb 70px,#1ec 73px,#0ff 77px,#09c 81px,#029 99px,#008 105px,#002 115px,#000 123px)"></i><i style="width:2px;background:linear-gradient(#000 0px,#000 21px,#004 23px,#008 24px,#0ce 27px,#0ef 29px,#1ec 30px,#5d2 31px,#f90 32px,#f20 33px,#f20 34px,#f30 35px,#fb0 36px,#5d2 37px,#0fd 38px,#06b 39px,#029 40px,#019 41px,#08c 55px,#0ff 61px,#1eb 67px,#1ea 71px,#1eb 77px,#0ff 82px,#09c 88px,#03a 98px,#008 110px,#002 118px,#001 123px)"></i><i style="width:2px;background:linear-gradient(#000 0px,#000 21px,#001 24px,#005 28px,#039 29px,#0fe 30px,#6d2 31px,#fd0 32px,#fa0 33px,#f90 34px,#fd0 35px,#7d2 36px,#1ea 37px,#09c 38px,#029 39px,#019 40px,#04a 46px,#0ff 59px,#2d8 65px,#2d6 69px,#2d6 75px,#0ff 86px,#0ef 87px,#07c 94px,#03a 102px,#008 110px,#002 117px,#000 123px)"></i><i style="width:2px;background:linear-gradient(#000 0px,#000 20px,#001 22px,#007 24px,#05a 26px,#07c 28px,#0ce 29px,#2d6 30px,#f70 31px,#f00 32px,#f00 35px,#f60 36px,#3c3 37px,#0ee 38px,#04a 39px,#029 40px,#019 41px,#09c 53px,#0fe 59px,#2d8 66px,#2d6 71px,#2d8 76px,#0ff 84px,#0ad 89px,#04a 100px,#008 110px,#003 117px,#001 123px)"></i><i style="width:2px;background:linear-gradient(#000 0px,#000 21px,#001 23px,#008 27px,#019 28px,#07c 29px,#2d6 30px,#f20 31px,#f00 32px,#f00 36px,#8d2 37px,#0ff 38px,#03a 39px,#008 40px,#018 44px,#07b 56px,#0ff 64px,#1ec 72px,#0ff 79px,#07c 86px,#019 102px,#008 107px,#002 116px,#000 123px)"></i><i style="width:2px;background:linear-gradient(#000 0px,#000 19px,#001 21px,#007 23px,#029 24px,#06b 27px,#0de 28px,#3c3 29px,#f50 30px,#f00 31px,#f00 34px,#ff0 35px,#2d9 36px,#09c 37px,#029 38px,#019 40px,#0ad 55px,#0ff 60px,#1ea 67px,#2d8 71px,#0ff 83px,#08c 91px,#03a 99px,#008 110px,#003 116px,#000 123px)"></i><i style="width:2px;background:linear-gradient(#000 0px,#000 18px,#002 20px,#004 21px,#008 22px,#0bd 25px,#0de 27px,#1eb 28px,#8d2 29px,#fa0 30px,#f60 31px,#f60 32px,#f80 33px,#de1 34px,#2d6 35px,#0de 36px,#04a 37px,#019 38px,#019 39px,#0ad 52px,#0ff 57px,#1e9 63px,#2d6 68px,#2d7 73px,#0ff 83px,#0bd 87px,#04a 100px,#008 110px,#003 117px,#000 123px)"></i><i style="width:2px;background:linear-gradient(#000 0px,#000 20px,#002 22px,#008 24px,#04a 27px,#07b 28px,#1ec 29px,#7d2 30px,#fb0 31px,#f90 32px,#f80 33px,#fc0 34px,#8d2 35px,#1ea 36px,#0ad 37px,#03a 38px,#029 39px,#029 40px,#0ad 52px,#0ef 56px,#2d8 64px,#2d6 68px,#2d8 73px,#0ff 81px,#0ef 82px,#09c 87px,#039 99px,#008 109px,#003 116px,#001 123px)"></i><i style="width:2px;background:linear-gradient(#000 0px,#000 19px,#002 21px,#007 23px,#029 24px,#04a 27px,#0ad 28px,#1eb 29px,#3c4 30px,#4c3 31px,#4c3 32px,#3c3 33px,#2d7 34px,#0fe 35px,#07b 36px,#019 37px,#007 38px,#008 41px,#06b 55px,#0ff 63px,#1ed 68px,#0ff 74px,#06b 84px,#008 99px,#001 117px,#000 123px)"></i><i style="width:2px;background:linear-gradient(#000 0px,#000 20px,#002 22px,#004 23px,#008 24px,#06b 26px,#0ad 29px,#1ed 30px,#3c4 31px,#8d2 32px,#9e1 33px,#9e1 34px,#6d2 35px,#2d6 36px,#0fe 37px,#06b 38px,#019 39px,#018 40px,#07b 53px,#0ff 60px,#1ec 67px,#0ff 75px,#04a 88px,#008 99px,#002 114px,#000 123px)"></i><i style="width:2px;background:linear-gradient(#000 0px,#000 19px,#003 21px,#007 22px,#09c 25px,#0bd 27px,#1ed 28px,#6d2 29px,#f70 30px,#f10 31px,#f10 33px,#f90 34px,#6d2 35px,#0fd 36px,#06b 37px,#029 38px,#029 39px,#09c 53px,#0ff 58px,#1eb 62px,#1eb 65px,#0ff 74px,#07b 82px,#029 94px,#008 103px,#001 116px,#000 123px)"></i><i style="width:2px;background:linear-gradient(#000 0px,#000 21px,#002 23px,#007 27px,#029 28px,#0de 29px,#4c3 30px,#f70 31px,#f20 32px,#f00 34px,#f80 35px,#6d2 36px,#1ed 37px,#07b 38px,#03a 39px,#039 40px,#08c 51px,#0ff 56px,#1ea 60px,#2d8 64px,#1ea 68px,#0ff 73px,#07b 80px,#019 95px,#008 102px,#002 115px,#000 123px)"></i><i style="width:2px;background:linear-gradient(#000 0px,#000 19px,#001 21px,#007 23px,#019 24px,#06b 27px,#0de 28px,#3c3 29px,#f60 30px,#f00 31px,#f00 34px,#fe0 35px,#2d7 36px,#0bd 37px,#05a 38px,#03a 39px,#09c 49px,#0ff 54px,#1eb 59px,#1ea 63px,#0ff 73px,#08c 80px,#029 93px,#008 100px,#001 114px,#000 123px)"></i><i style="width:2px;background:linear-gradient(#000 0px,#000 20px,#002 22px,#008 24px,#04a 27px,#07b 28px,#1ec 29px,#ce1 30px,#f00 31px,#f00 34px,#f40 35px,#7d2 36px,#0fe 37px,#05b 38px,#019 39px,#019 40px,#04a 48px,#0ff 58px,#0fd 63px,#0ff 68px,#04a 79px,#008 90px,#001 112px,#000 123px)"></i><i style="width:2px;background:linear-gradient(#000 0px,#000 20px,#003 22px,#006 23px,#019 24px,#04a 25px,#06b 27px,#0ad 28px,#2d8 29px,#fc0 30px,#f00 31px,#f00 34px,#f80 35px,#3c3 36px,#0ee 37px,#04a 38px,#019 39px,#019 40px,#05a 48px,#0ff 58px,#1ed 63px,#0ff 70px,#04a 80px,#008 91px,#001 115px,#000 123px)"></i><i style="width:2px;background:linear-gradient(#000 0px,#000 19px,#002 21px,#007 23px,#019 24px,#05a 27px,#0ff 28px,#5d2 29px,#f70 30px,#f20 31px,#f10 33px,#f90 34px,#5d2 35px,#0fd 36px,#06b 37px,#029 38px,#029 39px,#08c 52px,#0fe 57px,#1eb 63px,#0ff 72px,#06b 82px,#019 92px,#008 98px,#001 114px,#000 123px)"></i><i style="width:2px;background:linear-gradient(#000 0px,#000 20px,#002 22px,#008 24px,#05a 27px,#09c 28px,#2d8 29px,#f70 30px,#f00 31px,#f00 35px,#ce1 36px,#1ec 37px,#07b 38px,#03a 39px,#03a 40px,#0ad 51px,#0ff 56px,#1eb 60px,#1ea 64px,#1eb 69px,#0ff 74px,#0ad 79px,#029 94px,#008 102px,#002 114px,#000 123px)"></i><i style="width:2px;background:linear-gradient(#000 0px,#000 20px,#003 22px,#018 24px,#05a 27px,#09c 28px,#2d8 29px,#fe0 30px,#f10 31px,#f10 34px,#ff0 35px,#2d7 36px,#0ad 37px,#029 38px,#008 39px,#05b 50px,#0ff 58px,#1eb 66px,#0ff 74px,#05a 84px,#008 97px,#002 114px,#000 123px)"></i><i style="width:2px;background:linear-gradient(#000 0px,#000 21px,#002 23px,#007 25px,#03a 28px,#06b 29px,#1ec 30px,#ae1 31px,#f30 32px,#f00 35px,#fb0 36px,#3c3 37px,#0ff 38px,#06b 39px,#03a 40px,#08c 48px,#0ff 54px,#1ea 61px,#2d8 67px,#1ea 73px,#0ff 79px,#09c 85px,#029 98px,#008 106px,#002 116px,#000 123px)"></i><i style="width:2px;background:linear-gradient(#000 0px,#000 22px,#002 24px,#004 25px,#018 26px,#08c 28px,#0bd 30px,#0ff 31px,#3c4 32px,#f20 33px,#f00 34px,#f00 38px,#8d2 39px,#0fe 40px,#06b 41px,#039 42px,#06b 48px,#0ff 56px,#1e9 67px,#1ea 72px,#0ef 80px,#08c 86px,#029 98px,#008 105px,#002 115px,#000 123px)"></i><i style="width:2px;background:linear-gradient(#000 0px,#000 22px,#001 24px,#004 25px,#007 26px,#06b 28px,#08c 30px,#0de 31px,#3c3 32px,#f00 33px,#f00 38px,#ae1 39px,#0fe 40px,#05a 41px,#019 42px,#019 43px,#07c 57px,#0ff 62px,#1eb 66px,#1ea 69px,#0ff 77px,#06b 86px,#019 97px,#008 103px,#002 116px,#000 123px)"></i><i style="width:2px;background:linear-gradient(#000 0px,#000 22px,#002 24px,#018 26px,#06b 28px,#09c 30px,#1ed 31px,#df0 32px,#f00 33px,#f10 38px,#3c3 39px,#0ce 40px,#03a 41px,#029 42px,#09c 55px,#0ff 60px,#1eb 65px,#1e9 70px,#1eb 74px,#0ff 80px,#0ad 85px,#029 100px,#008 108px,#002 116px,#000 123px)"></i><i style="width:2px;background:linear-gradient(#000 0px,#000 22px,#002 24px,#006 25px,#029 26px,#09c 28px,#0ce 30px,#1ec 31px,#df0 32px,#f00 33px,#f00 38px,#6d2 39px,#0de 40px,#03a 41px,#019 42px,#019 43px,#07b 56px,#0ff 63px,#1eb 68px,#1eb 71px,#0ff 78px,#07b 85px,#029 99px,#008 108px,#003 116px,#000 123px)"></i><i style="width:2px;background:linear-gradient(#000 0px,#000 23px,#003 25px,#006 26px,#05a 28px,#0bd 31px,#2d9 32px,#f90 33px,#f00 34px,#f00 38px,#fd0 39px,#1ea 40px,#06b 41px,#018 42px,#008 44px,#06b 56px,#0ff 68px,#0ff 74px,#05a 89px,#018 99px,#006 108px,#001 117px,#000 123px)"></i><i style="width:2px;background:linear-gradient(#000 0px,#000 23px,#001 25px,#008 28px,#029 30px,#07b 31px,#2d8 32px,#f20 33px,#f00 34px,#f00 38px,#fd0 39px,#1eb 40px,#05b 41px,#008 42px,#008 44px,#08c 58px,#0ef 64px,#1eb 71px,#0ff 77px,#08c 83px,#019 99px,#007 105px,#002 115px,#000 123px)"></i><i style="width:2px;background:linear-gradient(#000 0px,#001 24px,#003 26px,#008 28px,#029 30px,#07b 31px,#2d7 32px,#f00 33px,#f00 38px,#f80 39px,#1e9 40px,#07b 41px,#019 42px,#018 43px,#07b 54px,#0ff 61px,#1eb 66px,#1ea 70px,#0ff 80px,#06b 89px,#019 100px,#008 104px,#001 116px,#000 123px)"></i><i style="width:2px;background:linear-gradient(#000 0px,#000 22px,#002 24px,#004 25px,#008 26px,#09c 29px,#0de 30px,#1ed 31px,#3c5 32px,#f20 33px,#f00 34px,#f00 38px,#9e1 39px,#0fe 40px,#05a 41px,#019 42px,#019 43px,#06b 55px,#0ff 63px,#1ec 69px,#0ff 75px,#06b 85px,#019 98px,#007 107px,#002 117px,#000 123px)"></i><i style="width:2px;background:linear-gradient(#000 0px,#000 21px,#002 23px,#005 24px,#018 25px,#07b 27px,#09c 29px,#0ef 30px,#2d5 31px,#fb0 32px,#f10 33px,#f10 35px,#f60 36px,#ae1 37px,#1ea 38px,#08c 39px,#029 40px,#019 41px,#07b 53px,#0ff 60px,#1eb 65px,#1ea 68px,#1ec 72px,#0ff 76px,#07b 84px,#019 99px,#008 103px,#002 116px,#000 123px)"></i><i style="width:2px;background:linear-gradient(#000 0px,#000 19px,#003 21px,#006 22px,#019 23px,#07b 25px,#0ad 27px,#0fe 28px,#4c3 29px,#fa0 30px,#f40 31px,#f30 32px,#f50 33px,#fd0 34px,#3c3 35px,#0ff 36px,#05a 37px,#019 38px,#019 39px,#07c 49px,#0ff 55px,#1eb 60px,#1e9 67px,#1eb 73px,#0ff 80px,#07b 87px,#029 96px,#008 104px,#002 115px,#000 123px)"></i><i style="width:2px;background:linear-gradient(#000 0px,#000 20px,#002 21px,#019 22px,#0de 25px,#0fe 26px,#1ec 29px,#3c4 30px,#fb0 31px,#f50 32px,#f40 33px,#f50 34px,#fe0 35px,#3c4 36px,#0ff 37px,#05a 38px,#019 39px,#019 40px,#04a 46px,#0bd 54px,#0ff 60px,#0fe 65px,#0ff 71px,#04a 85px,#019 93px,#006 104px,#001 117px,#000 123px)"></i><i style="width:2px;background:linear-gradient(#000 0px,#000 19px,#001 21px,#008 22px,#0ee 24px,#2d6 26px,#5d2 27px,#5d2 30px,#ef0 31px,#fe0 32px,#fe0 33px,#df0 34px,#4c3 35px,#1eb 36px,#09c 37px,#039 38px,#019 39px,#06b 47px,#0ff 56px,#1ec 65px,#0ff 74px,#04a 88px,#019 93px,#008 100px,#001 116px,#000 123px)"></i><i style="width:2px;background:linear-gradient(#000 0px,#000 14px,#003 15px,#019 16px,#0ef 19px,#1eb 21px,#1eb 29px,#3c3 30px,#fc0 31px,#f60 32px,#f50 33px,#f60 34px,#fd0 35px,#3c3 36px,#0fd 37px,#07b 38px,#04a 39px,#03a 40px,#08c 47px,#0ff 53px,#1ea 59px,#2d8 64px,#1e9 68px,#0ef 75px,#08c 80px,#029 92px,#008 103px,#001 116px,#000 123px)"></i><i style="width:2px;background:linear-gradient(#000 0px,#000 13px,#006 14px,#03a 15px,#0ce 17px,#0fe 18px,#1eb 19px,#1eb 30px,#9e1 31px,#f60 32px,#f30 33px,#f20 34px,#f40 35px,#ff0 36px,#2d5 37px,#0ee 38px,#06b 39px,#04a 40px,#07b 45px,#0ff 52px,#1eb 59px,#1ea 63px,#1eb 67px,#0ff 72px,#07b 79px,#019 94px,#008 100px,#001 115px,#000 123px)"></i><i style="width:2px;background:linear-gradient(#000 0px,#000 17px,#004 18px,#029 19px,#0ee 22px,#0fe 23px,#0ff 24px,#0de 25px,#05a 27px,#029 28px,#029 29px,#05a 30px,#0fe 31px,#2d6 32px,#4c3 33px,#4c3 35px,#3c5 36px,#1eb 37px,#0bd 38px,#04a 39px,#029 40px,#029 41px,#06b 51px,#0ff 57px,#1ec 63px,#0ff 69px,#05a 77px,#018 89px,#001 112px,#000 123px)"></i><i style="width:2px;background:linear-gradient(#000 0px,#000 15px,#005 16px,#06b 17px,#0ef 18px,#3c4 20px,#ae1 21px,#de1 22px,#be1 24px,#9e1 25px,#4c3 26px,#2d7 27px,#1ec 28px,#0cd 29px,#0bd 30px,#0de 31px,#1eb 32px,#6d2 33px,#ff0 34px,#fd0 35px,#fd0 36px,#ff0 37px,#6d2 38px,#1ea 39px,#0bd 40px,#05a 41px,#03a 42px,#07b 49px,#0ff 55px,#1eb 60px,#1ea 63px,#1eb 66px,#0fe 69px,#0ef 70px,#07b 74px,#008 94px,#001 112px,#000 123px)"></i><i style="width:2px;background:linear-gradient(#000 0px,#000 13px,#003 14px,#008 15px,#06b 17px,#09c 19px,#019 22px,#008 24px,#0ad 28px,#0ce 31px,#1eb 32px,#ef0 33px,#f00 34px,#f00 38px,#be1 39px,#1eb 40px,#08c 41px,#03a 42px,#039 43px,#0ff 59px,#0fd 64px,#0ff 70px,#05b 81px,#008 94px,#001 114px,#000 123px)"></i><i style="width:2px;background:linear-gradient(#000 0px,#000 12px,#005 13px,#03a 14px,#0de 16px,#1ed 17px,#1e9 18px,#2d9 20px,#1e9 22px,#0ee 25px,#05a 27px,#039 28px,#04a 29px,#0de 31px,#0fd 32px,#1eb 33px,#2d6 34px,#fe0 35px,#f70 36px,#f50 37px,#f60 38px,#fd0 39px,#4c3 40px,#1ec 41px,#08c 42px,#04a 43px,#04a 44px,#08c 50px,#0ff 56px,#1ea 62px,#2d8 66px,#0ff 76px,#06b 85px,#029 93px,#008 101px,#001 115px,#000 123px)"></i><i style="width:2px;background:linear-gradient(#000 0px,#000 12px,#006 13px,#0de 15px,#1ec 16px,#4c3 18px,#5c3 19px,#3c3 20px,#2d6 21px,#0ff 23px,#09c 24px,#06b 25px,#07b 26px,#0bd 27px,#0fd 28px,#2d5 30px,#3c3 31px,#6d2 33px,#6d2 36px,#8d2 37px,#8d2 38px,#7d2 39px,#2d5 40px,#1ec 41px,#09c 42px,#04a 43px,#03a 44px,#06b 50px,#0ff 58px,#1ec 68px,#0ff 79px,#05a 89px,#019 96px,#008 101px,#001 115px,#000 123px)"></i><i style="width:2px;background:linear-gradient(#000 0px,#000 12px,#019 14px,#0bd 18px,#0bd 24px,#08c 26px,#019 29px,#007 30px,#008 31px,#09c 35px,#1eb 36px,#9e1 37px,#fa0 38px,#f70 40px,#fb0 41px,#9d2 42px,#2d9 43px,#0ce 44px,#06b 45px,#05b 46px,#09c 52px,#0ff 57px,#1e9 64px,#2d7 68px,#2d8 72px,#0ef 80px,#0ad 84px,#03a 97px,#008 109px,#004 115px,#002 123px)"></i><i style="width:2px;background:linear-gradient(#000 0px,#000 12px,#006 13px,#03a 14px,#0ff 17px,#1ed 18px,#1ed 22px,#0ef 25px,#04a 28px,#029 29px,#029 30px,#04a 31px,#0ff 34px,#0fd 36px,#1ea 37px,#8d2 38px,#ff0 39px,#fe0 41px,#ce1 42px,#3c4 43px,#1ed 44px,#08c 45px,#04a 46px,#04a 47px,#0ad 57px,#0ff 61px,#1e9 66px,#2d8 70px,#1ea 75px,#0ff 81px,#08c 87px,#039 98px,#008 106px,#002 115px,#000 123px)"></i><i style="width:2px;background:linear-gradient(#000 0px,#000 16px,#008 17px,#0de 20px,#0fd 21px,#1eb 22px,#0ee 24px,#05b 26px,#039 27px,#039 28px,#05b 29px,#0ef 31px,#0fd 32px,#1ea 35px,#1ea 38px,#1eb 39px,#2d9 40px,#2d8 42px,#1e9 43px,#1ec 44px,#0de 45px,#07b 46px,#05a 47px,#05a 48px,#08c 54px,#0ff 59px,#2d9 65px,#2d6 71px,#2d9 76px,#0ff 82px,#09c 87px,#03a 97px,#008 109px,#003 116px,#000 123px)"></i><i style="width:2px;background:linear-gradient(#000 0px,#000 14px,#001 15px,#007 16px,#029 17px,#0bd 20px,#0de 21px,#0bd 24px,#019 28px,#008 29px,#018 30px,#0bd 34px,#0ce 36px,#0de 38px,#1ea 39px,#2d6 40px,#2d5 42px,#2d7 43px,#1eb 44px,#0de 45px,#06b 46px,#04a 47px,#03a 48px,#08c 55px,#0ff 61px,#1e9 67px,#2d8 71px,#1e9 75px,#0ef 82px,#08c 87px,#029 99px,#008 107px,#003 115px,#001 123px)"></i><i style="width:2px;background:linear-gradient(#000 0px,#000 12px,#018 14px,#0ce 18px,#09c 21px,#019 24px,#008 25px,#008 26px,#08c 29px,#0cd 31px,#0de 38px,#1ea 39px,#3c3 40px,#7d2 41px,#7d2 43px,#3c3 44px,#1e9 45px,#0de 46px,#06b 47px,#04a 48px,#04a 49px,#08c 56px,#0ff 61px,#1e9 67px,#2d8 72px,#1ea 76px,#0ef 82px,#08c 87px,#039 98px,#008 108px,#002 117px,#000 123px)"></i><i style="width:2px;background:linear-gradient(#000 0px,#000 13px,#007 14px,#0ef 17px,#2d9 19px,#1ea 22px,#0fe 24px,#0ce 25px,#04a 27px,#039 28px,#05a 29px,#0ef 31px,#1e9 34px,#2d8 39px,#3c3 40px,#8d2 41px,#ae1 43px,#6d2 44px,#2d8 45px,#0ff 46px,#07c 47px,#05a 48px,#05a 49px,#09c 55px,#0ff 59px,#1e9 65px,#2d6 70px,#2d8 75px,#0ff 82px,#09c 87px,#029 100px,#008 107px,#002 116px,#000 123px)"></i><i style="width:2px;background:linear-gradient(#000 0px,#000 14px,#002 15px,#008 16px,#0de 20px,#0ef 21px,#0cd 24px,#03a 27px,#019 28px,#008 29px,#029 30px,#0bd 33px,#0de 34px,#0ef 37px,#0ef 38px,#2d8 39px,#ae1 40px,#ff0 41px,#fe0 42px,#fe0 43px,#9e1 44px,#2d7 45px,#0ef 46px,#06b 47px,#04a 48px,#03a 49px,#07b 56px,#0ff 62px,#1ec 70px,#0ff 78px,#06b 87px,#019 99px,#007 109px,#002 117px,#000 123px)"></i><i style="width:2px;background:linear-gradient(#000 0px,#000 12px,#005 13px,#029 14px,#0ff 17px,#1ed 18px,#0ef 20px,#03a 23px,#029 24px,#039 25px,#0ee 28px,#0fe 29px,#1ec 32px,#1ec 39px,#2d8 42px,#2d9 43px,#0ef 45px,#08c 46px,#04a 47px,#03a 48px,#06b 56px,#0ff 62px,#1ec 69px,#0ff 75px,#06b 83px,#008 97px,#001 114px,#000 123px)"></i><i style="width:2px;background:linear-gradient(#000 0px,#000 15px,#004 16px,#019 17px,#0ff 21px,#0ff 29px,#0bd 31px,#019 34px,#019 35px,#029 36px,#0ce 39px,#0bd 40px,#0ee 43px,#0ce 44px,#07b 46px,#05a 48px,#08c 53px,#0ff 58px,#1ea 63px,#2d8 67px,#1e9 70px,#0ff 78px,#05a 88px,#008 100px,#001 115px,#000 123px)"></i><i style="width:2px;background:linear-gradient(#000 0px,#000 14px,#005 15px,#05a 16px,#0cd 17px,#1ed 18px,#2d5 20px,#2d6 21px,#0ff 23px,#09c 24px,#06b 25px,#06b 26px,#0fe 28px,#2d6 30px,#3c3 31px,#5d2 34px,#5d2 40px,#fd0 41px,#fa0 42px,#fa0 43px,#fd0 44px,#8d2 45px,#1ea 46px,#09c 47px,#029 48px,#008 49px,#008 50px,#029 54px,#0bd 60px,#0ff 64px,#0ef 70px,#0bd 73px,#029 79px,#018 82px,#000 123px)"></i><i style="width:2px;background:linear-gradient(#000 0px,#000 17px,#006 18px,#019 19px,#039 20px,#019 23px,#039 24px,#0ee 27px,#1ed 30px,#1eb 38px,#8d2 39px,#f90 40px,#f50 41px,#f40 42px,#f60 43px,#fe0 44px,#3c3 45px,#0fd 46px,#09c 47px,#07b 48px,#08c 50px,#0ff 55px,#2d8 65px,#2d9 68px,#0ff 77px,#06b 85px,#029 94px,#008 103px,#001 116px,#000 123px)"></i><i style="width:2px;background:linear-gradient(#000 0px,#000 16px,#003 17px,#029 18px,#09c 20px,#0bd 21px,#0bd 22px,#04a 24px,#029 25px,#03a 26px,#0ff 29px,#1eb 31px,#1ea 39px,#2d7 40px,#2d6 42px,#2d6 43px,#0fe 45px,#0ad 46px,#08c 47px,#08c 48px,#0ff 53px,#2d7 60px,#3c5 64px,#2d6 68px,#0ff 78px,#06b 85px,#029 92px,#008 104px,#002 115px,#000 123px)"></i><i style="width:2px;background:linear-gradient(#000 0px,#000 16px,#002 17px,#008 18px,#05b 20px,#08c 22px,#018 25px,#008 26px,#0de 31px,#0ef 35px,#0fe 38px,#3c3 39px,#df0 40px,#ff0 41px,#fe0 42px,#ef0 43px,#7d2 44px,#2d8 45px,#0de 46px,#09c 47px,#08c 48px,#0ff 54px,#1ea 63px,#1ea 66px,#0ff 73px,#06b 81px,#029 90px,#008 99px,#002 114px,#000 123px)"></i><i style="width:2px;background:linear-gradient(#000 0px,#000 19px,#001 20px,#005 21px,#029 22px,#0ff 24px,#1ea 25px,#2d7 26px,#2d6 27px,#2d6 38px,#fc0 39px,#f10 40px,#f00 43px,#fc0 44px,#3c4 45px,#0ff 46px,#08c 47px,#07b 48px,#0ef 53px,#0fe 54px,#1ea 59px,#1e9 64px,#0ff 74px,#05b 82px,#019 90px,#008 96px,#001 114px,#000 123px)"></i><i style="width:2px;background:linear-gradient(#000 0px,#000 20px,#008 22px,#0ad 26px,#0ad 38px,#1ed 39px,#2d7 40px,#2d5 42px,#2d5 43px,#2d8 44px,#0fd 45px,#05a 47px,#04a 48px,#0ff 58px,#1ec 64px,#0ff 70px,#04a 78px,#019 83px,#008 89px,#001 113px,#000 123px)"></i><i style="width:2px;background:linear-gradient(#000 0px,#000 23px,#004 24px,#03a 25px,#0ee 27px,#2d8 29px,#2d7 30px,#2d7 39px,#2d9 40px,#2d7 43px,#1ea 44px,#0fe 45px,#09c 46px,#05b 47px,#04a 48px,#07b 52px,#0fe 57px,#1ea 62px,#2d8 67px,#1ea 72px,#0ff 77px,#06b 83px,#029 92px,#007 105px,#001 118px,#001 123px)"></i><i style="width:2px;background:linear-gradient(#000 0px,#000 24px,#019 25px,#0bd 27px,#0fe 28px,#2d8 30px,#2d8 39px,#6d2 40px,#ff0 41px,#fd0 42px,#fd0 43px,#df0 44px,#4c3 45px,#1eb 46px,#09c 47px,#04a 48px,#04a 49px,#07b 54px,#0ff 59px,#1ea 64px,#2d9 68px,#1ea 72px,#0ff 79px,#04a 88px,#008 99px,#001 115px,#000 123px)"></i><i style="width:2px;background:linear-gradient(#000 0px,#000 28px,#019 30px,#0cd 34px,#0cd 38px,#1ec 39px,#2d8 40px,#2d7 42px,#2d8 43px,#0ee 45px,#07b 46px,#04a 47px,#04a 48px,#07b 52px,#0ff 59px,#2d9 70px,#1ea 74px,#0ff 79px,#08c 85px,#029 99px,#008 106px,#002 116px,#000 123px)"></i><i style="width:2px;background:linear-gradient(#000 0px,#000 34px,#002 38px,#007 39px,#05a 40px,#0fe 41px,#ef0 42px,#f00 43px,#f00 47px,#ce1 48px,#1eb 49px,#08c 50px,#03a 51px,#05a 56px,#07b 59px,#0ef 63px,#2d9 69px,#2d8 72px,#1e9 75px,#0ff 81px,#06b 88px,#029 96px,#008 102px,#002 116px,#000 123px)"></i><i style="width:2px;background:linear-gradient(#000 0px,#000 32px,#002 34px,#008 36px,#09c 39px,#1ed 40px,#9e1 41px,#f00 42px,#f00 49px,#5d2 50px,#0ff 51px,#06b 52px,#04a 53px,#06b 56px,#0ff 63px,#2d7 71px,#2d6 75px,#2d7 78px,#0fe 85px,#0ff 86px,#06b 92px,#039 97px,#008 109px,#003 117px,#001 123px)"></i><i style="width:2px;background:linear-gradient(#000 0px,#000 33px,#002 35px,#007 37px,#019 38px,#04a 39px,#0ee 40px,#7d2 41px,#f00 42px,#f00 49px,#8d2 50px,#0fe 51px,#06b 52px,#039 53px,#029 54px,#06b 60px,#0ff 66px,#2d8 72px,#2d6 75px,#2d7 79px,#0ff 86px,#06b 92px,#039 97px,#008 106px,#002 118px,#001 123px)"></i><i style="width:2px;background:linear-gradient(#000 0px,#000 33px,#002 35px,#019 38px,#04a 39px,#0bd 40px,#2d5 41px,#f40 42px,#f00 43px,#f00 48px,#f60 49px,#3c4 50px,#0de 51px,#05a 52px,#029 53px,#029 54px,#06b 63px,#0ff 69px,#1eb 73px,#2d9 77px,#1ea 81px,#0ff 86px,#07b 92px,#04a 96px,#008 109px,#003 117px,#001 123px)"></i><i style="width:2px;background:linear-gradient(#000 0px,#000 32px,#002 34px,#004 35px,#008 36px,#09c 39px,#0fd 40px,#8d2 41px,#f00 42px,#f00 49px,#de1 50px,#1ed 51px,#06b 52px,#019 53px,#018 54px,#05b 62px,#0ff 69px,#1eb 74px,#1e9 78px,#1ea 82px,#0fe 87px,#0ff 88px,#06b 93px,#04a 96px,#008 108px,#003 116px,#001 123px)"></i><i style="width:2px;background:linear-gradient(#000 0px,#000 33px,#001 35px,#006 38px,#029 39px,#0de 40px,#9e1 41px,#f00 42px,#f00 49px,#5d2 50px,#0ff 51px,#05b 52px,#029 53px,#029 54px,#07b 62px,#0ff 68px,#2d6 75px,#3c3 79px,#3c4 82px,#0ef 92px,#07c 97px,#04a 103px,#008 112px,#007 114px,#004 123px)"></i><i style="width:2px;background:linear-gradient(#000 0px,#000 37px,#001 38px,#007 39px,#0ad 40px,#3c4 41px,#f40 42px,#f00 43px,#f00 48px,#ae1 49px,#1eb 50px,#08c 51px,#029 52px,#019 53px,#029 55px,#05b 61px,#0ef 68px,#2d8 78px,#1e9 82px,#0ff 88px,#06b 95px,#039 100px,#008 109px,#003 118px,#002 123px)"></i><i style="width:2px;background:linear-gradient(#000 0px,#000 34px,#002 37px,#006 39px,#04a 40px,#1eb 41px,#fa0 42px,#f00 43px,#f00 51px,#ef0 52px,#1ea 53px,#0ad 54px,#05a 55px,#04a 57px,#08c 64px,#0ff 68px,#2d9 74px,#2d7 78px,#2d8 82px,#0fe 89px,#0ff 90px,#07b 96px,#039 104px,#008 111px,#003 117px,#001 123px)"></i><i style="width:2px;background:linear-gradient(#000 0px,#000 31px,#001 33px,#003 34px,#008 35px,#0ff 39px,#2d8 40px,#de1 41px,#f00 42px,#f00 48px,#de1 49px,#1ea 50px,#0ad 51px,#05a 52px,#04a 54px,#07c 60px,#0ff 65px,#2d6 72px,#3c3 76px,#3c4 80px,#0ff 90px,#07b 96px,#04a 101px,#008 111px,#001 123px)"></i><i style="width:2px;background:linear-gradient(#000 0px,#000 33px,#001 35px,#006 38px,#008 39px,#06b 40px,#1ec 41px,#de1 42px,#f00 43px,#f00 48px,#f40 49px,#6d2 50px,#1ed 51px,#09c 52px,#06b 53px,#06b 54px,#09c 59px,#0fe 64px,#2d5 72px,#3c3 75px,#3c5 79px,#0ef 89px,#09c 94px,#04a 103px,#008 112px,#004 117px,#001 123px)"></i><i style="width:2px;background:linear-gradient(#000 0px,#000 32px,#002 34px,#008 36px,#08c 39px,#0ef 40px,#2d7 41px,#ce1 42px,#f60 43px,#f20 44px,#f20 46px,#f60 47px,#ff0 48px,#3c4 49px,#0fd 50px,#08c 51px,#04a 52px,#04a 54px,#07b 58px,#0ff 64px,#2d8 71px,#2d7 75px,#2d9 79px,#0ff 86px,#06b 94px,#029 99px,#008 109px,#003 117px,#001 123px)"></i><i style="width:2px;background:linear-gradient(#000 0px,#000 33px,#003 37px,#005 38px,#008 39px,#07b 40px,#2d8 41px,#fa0 42px,#f00 43px,#f00 48px,#f60 49px,#3c3 50px,#0ff 51px,#07b 52px,#04a 53px,#04a 54px,#08c 59px,#0ff 63px,#4c3 72px,#5d2 74px,#3c3 77px,#0fe 84px,#0ef 85px,#0ad 87px,#07b 90px,#039 99px,#008 109px,#003 116px,#001 123px)"></i><i style="width:2px;background:linear-gradient(#000 0px,#000 33px,#003 35px,#008 37px,#04a 39px,#0bd 40px,#2d7 41px,#fe0 42px,#f00 43px,#f00 47px,#f30 48px,#ce1 49px,#2d7 50px,#0ff 51px,#0ad 52px,#09c 53px,#0ff 58px,#3c4 68px,#5c3 70px,#6d2 73px,#3c3 76px,#0ff 86px,#0bd 90px,#04a 101px,#008 112px,#004 117px,#002 123px)"></i><i style="width:2px;background:linear-gradient(#000 0px,#000 32px,#002 34px,#008 36px,#06b 38px,#0bd 39px,#1ea 40px,#fb0 41px,#f00 42px,#f00 49px,#ce1 50px,#1ec 51px,#09c 52px,#07b 53px,#07b 54px,#0ff 60px,#2d5 68px,#3c3 71px,#3c5 75px,#0ff 83px,#08c 88px,#029 99px,#008 106px,#002 115px,#000 123px)"></i><i style="width:2px;background:linear-gradient(#000 0px,#000 33px,#002 35px,#018 38px,#03a 39px,#0bd 40px,#2d7 41px,#fc0 42px,#f00 43px,#f00 50px,#fb0 51px,#2d5 52px,#0fe 53px,#09c 54px,#07c 55px,#07b 56px,#09c 60px,#0ef 63px,#0fe 64px,#2d8 68px,#2d7 71px,#2d8 75px,#0ef 81px,#09c 85px,#029 100px,#008 108px,#002 117px,#001 123px)"></i><i style="width:2px;background:linear-gradient(#000 0px,#000 31px,#001 33px,#006 35px,#019 36px,#07b 38px,#0de 39px,#2d6 40px,#f30 41px,#f00 42px,#f00 48px,#f10 49px,#3c3 50px,#0ff 51px,#09c 52px,#07b 53px,#0ad 59px,#0ef 62px,#2d5 68px,#4c3 70px,#5d2 72px,#3c3 75px,#0ff 83px,#09c 87px,#029 101px,#008 109px,#003 116px,#001 123px)"></i><i style="width:2px;background:linear-gradient(#000 0px,#000 33px,#001 35px,#007 38px,#019 39px,#07b 40px,#1ea 41px,#f90 42px,#f00 43px,#f00 49px,#ff0 50px,#1ea 51px,#0ad 52px,#05a 53px,#04a 54px,#07b 57px,#0ff 63px,#2d7 72px,#2d8 76px,#0ef 83px,#06b 89px,#029 97px,#008 104px,#002 117px,#001 123px)"></i><i style="width:2px;background:linear-gradient(#000 0px,#000 34px,#001 38px,#003 39px,#029 40px,#0fe 41px,#fe0 42px,#f00 43px,#f00 49px,#f60 50px,#2d5 51px,#0ef 52px,#08c 53px,#07b 54px,#09c 58px,#0ef 62px,#2d5 70px,#3c3 73px,#3c4 78px,#0ff 88px,#08c 94px,#04a 101px,#008 112px,#003 119px,#002 123px)"></i><i style="width:2px;background:linear-gradient(#000 0px,#000 33px,#002 35px,#008 37px,#08c 40px,#0fe 41px,#4c3 42px,#f40 43px,#f00 44px,#f00 49px,#ff0 50px,#2d8 51px,#0de 52px,#07b 53px,#06b 54px,#0ad 60px,#0ef 63px,#0fe 64px,#2d6 69px,#3c3 72px,#5d2 76px,#3c3 80px,#0ff 90px,#09c 95px,#04a 103px,#008 111px,#004 116px,#000 123px)"></i><i style="width:2px;background:linear-gradient(#000 0px,#000 35px,#002 38px,#007 40px,#019 41px,#04a 42px,#0ce 43px,#3c4 44px,#f70 45px,#f00 46px,#f00 51px,#ff0 52px,#2d7 53px,#0de 54px,#08c 55px,#06b 56px,#0ad 62px,#0ff 66px,#3c3 75px,#5d2 77px,#3c3 80px,#0ff 89px,#09c 94px,#04a 104px,#008 112px,#001 123px)"></i><i style="width:2px;background:linear-gradient(#000 0px,#000 35px,#002 38px,#008 41px,#06b 42px,#1ea 43px,#fe0 44px,#f00 45px,#f00 50px,#f70 51px,#3c3 52px,#0ff 53px,#06b 54px,#04a 55px,#03a 56px,#07b 62px,#0ef 67px,#2d6 75px,#2d5 78px,#2d6 81px,#0ff 89px,#07b 96px,#03a 102px,#008 110px,#003 117px,#001 123px)"></i><i style="width:2px;background:linear-gradient(#000 0px,#000 35px,#001 37px,#007 39px,#08c 42px,#0fe 43px,#8d2 44px,#f00 45px,#f00 52px,#ae1 53px,#1ec 54px,#09c 55px,#06b 56px,#06b 57px,#0ad 64px,#0ff 68px,#2d8 74px,#2d5 78px,#2d7 83px,#0ff 90px,#0ad 94px,#008 113px,#001 123px)"></i><i style="width:2px;background:linear-gradient(#000 0px,#000 35px,#001 37px,#003 38px,#007 39px,#08c 42px,#0ef 43px,#2d5 44px,#f50 45px,#f00 46px,#f00 52px,#ae1 53px,#1eb 54px,#09c 55px,#06b 56px,#06b 57px,#0bd 65px,#0ff 68px,#1eb 72px,#3c4 77px,#5d2 79px,#7d2 81px,#3c3 84px,#0ff 94px,#0bd 98px,#008 114px,#001 123px)"></i><i style="width:2px;background:linear-gradient(#000 0px,#000 34px,#001 36px,#003 37px,#007 38px,#0ff 42px,#1e9 43px,#ae1 44px,#f00 45px,#f00 51px,#fd0 52px,#2d7 53px,#0ce 54px,#06b 55px,#04a 56px,#0de 68px,#0ff 70px,#3c3 78px,#6d2 80px,#6d2 82px,#3c3 85px,#0ff 94px,#008 114px,#005 117px,#003 123px)"></i><i style="width:2px;background:linear-gradient(#000 0px,#000 36px,#002 38px,#019 41px,#03a 42px,#0bd 43px,#3c4 44px,#f10 45px,#f00 46px,#f00 51px,#f10 52px,#4c3 53px,#0ff 54px,#06b 55px,#039 56px,#039 57px,#07c 68px,#0ad 70px,#0ff 72px,#2d6 77px,#3c4 81px,#2d5 84px,#0ff 91px,#09c 95px,#06b 98px,#008 112px,#004 118px,#003 123px)"></i><i style="width:2px;background:linear-gradient(#000 0px,#000 36px,#002 39px,#018 42px,#06b 43px,#1eb 44px,#fe0 45px,#f00 46px,#f00 52px,#8d2 53px,#1ed 54px,#07b 55px,#03a 56px,#039 57px,#08c 68px,#0ad 70px,#0ff 72px,#2d8 77px,#2d6 80px,#2d7 84px,#0ff 91px,#09c 95px,#06b 99px,#008 112px,#001 123px)"></i><i style="width:2px;background:linear-gradient(#000 0px,#000 34px,#001 36px,#003 37px,#007 38px,#029 39px,#0ef 42px,#2d7 43px,#fb0 44px,#f00 45px,#f00 51px,#f70 52px,#2d6 53px,#0bd 54px,#04a 55px,#039 56px,#039 57px,#06b 67px,#09c 69px,#0ef 71px,#2d9 75px,#2d6 79px,#2d7 82px,#0ff 91px,#07b 96px,#03a 101px,#008 111px,#006 114px,#004 123px)"></i><i style="width:2px;background:linear-gradient(#000 0px,#000 34px,#001 36px,#005 38px,#018 39px,#06b 41px,#0ad 42px,#1eb 43px,#9e1 44px,#f00 45px,#f00 50px,#f60 51px,#5d2 52px,#0fd 53px,#07c 54px,#03a 55px,#039 56px,#06b 62px,#0ff 69px,#2d6 76px,#2d5 78px,#2d7 81px,#0ff 86px,#08c 89px,#06b 92px,#008 110px,#001 123px)"></i><i style="width:2px;background:linear-gradient(#000 0px,#000 33px,#001 35px,#008 38px,#029 39px,#06b 40px,#1ed 41px,#ef0 42px,#f00 43px,#f00 51px,#ce1 52px,#1ea 53px,#0ad 54px,#04a 55px,#039 57px,#06b 63px,#0ff 68px,#1e9 73px,#2d8 77px,#1e9 81px,#0ff 86px,#07b 90px,#04a 94px,#008 109px,#003 117px,#001 123px)"></i><i style="width:2px;background:linear-gradient(#000 0px,#000 33px,#003 37px,#006 38px,#06b 39px,#1ea 40px,#f90 41px,#f00 42px,#f00 48px,#7d2 49px,#0fd 50px,#07b 51px,#03a 52px,#029 53px,#06b 60px,#0ff 66px,#2d8 72px,#2d7 75px,#2d8 79px,#0ff 85px,#07b 90px,#04a 95px,#008 109px,#004 115px,#001 123px)"></i><i style="width:2px;background:linear-gradient(#000 0px,#000 31px,#001 33px,#007 35px,#07c 38px,#0bd 39px,#1eb 40px,#6d2 41px,#fa0 42px,#f20 43px,#f20 45px,#f30 46px,#fa0 47px,#8d2 48px,#1e9 49px,#0bd 50px,#05b 51px,#03a 52px,#03a 53px,#07b 59px,#0ff 64px,#2d9 69px,#2d6 73px,#2d7 77px,#0fe 85px,#0ef 86px,#06b 92px,#029 100px,#008 108px,#003 116px,#000 123px)"></i><i style="width:2px;background:linear-gradient(#000 0px,#000 32px,#003 35px,#008 37px,#029 38px,#07b 39px,#1e9 40px,#f50 41px,#f00 42px,#f00 48px,#f00 49px,#3c4 50px,#0ce 51px,#04a 52px,#029 53px,#039 54px,#06b 58px,#0ef 63px,#0fe 64px,#2d8 69px,#2d6 72px,#2d6 75px,#0ff 82px,#0ee 83px,#06b 88px,#029 94px,#008 101px,#002 116px,#000 123px)"></i><i style="width:2px;background:linear-gradient(#000 0px,#000 30px,#001 32px,#004 34px,#008 35px,#0bd 38px,#1ed 39px,#7d2 40px,#f00 41px,#f00 48px,#fb0 49px,#2d8 50px,#0ce 51px,#08c 52px,#07b 53px,#0ff 59px,#0fe 60px,#2d7 68px,#3c5 72px,#2d6 77px,#0ff 87px,#08c 92px,#03a 101px,#008 110px,#003 117px,#001 123px)"></i><i style="width:2px;background:linear-gradient(#000 0px,#000 31px,#001 33px,#004 34px,#008 35px,#0de 38px,#0fd 39px,#2d7 40px,#fe0 41px,#f00 42px,#f00 48px,#fe0 49px,#2d8 50px,#0cd 51px,#06b 52px,#05a 53px,#08c 57px,#0ff 63px,#2d5 71px,#3c4 74px,#2d6 77px,#0ff 84px,#07c 90px,#029 100px,#008 108px,#003 116px,#001 123px)"></i><i style="width:2px;background:linear-gradient(#000 0px,#000 32px,#001 34px,#007 36px,#07b 39px,#0ce 40px,#2d7 41px,#fc0 42px,#f00 43px,#f00 48px,#f40 49px,#6d2 50px,#1ed 51px,#09c 52px,#06b 53px,#06b 54px,#08c 58px,#0ff 63px,#1ea 69px,#2d8 73px,#1e9 77px,#0ff 84px,#07b 92px,#03a 99px,#008 110px,#001 123px)"></i><i style="width:2px;background:linear-gradient(#000 0px,#000 31px,#002 33px,#004 34px,#008 35px,#09c 38px,#0ff 39px,#3c4 40px,#f40 41px,#f00 42px,#f00 47px,#f30 48px,#5d2 49px,#0fd 50px,#08c 51px,#06b 52px,#05b 53px,#0ad 60px,#0fe 64px,#2d8 69px,#2d5 74px,#2d7 78px,#0ff 85px,#09c 90px,#029 103px,#008 109px,#002 117px,#000 123px)"></i><i style="width:2px;background:linear-gradient(#000 0px,#000 31px,#001 33px,#007 35px,#029 36px,#07b 38px,#0ff 39px,#5c3 40px,#f00 41px,#f00 48px,#9e1 49px,#1ed 50px,#08c 51px,#04a 52px,#04a 53px,#08c 58px,#0ff 64px,#1ea 70px,#2d8 75px,#1e9 80px,#0ff 87px,#09c 92px,#029 105px,#008 110px,#003 116px,#001 123px)"></i><i style="width:2px;background:linear-gradient(#000 0px,#000 35px,#001 37px,#007 40px,#019 41px,#08c 42px,#2d8 43px,#fa0 44px,#f00 45px,#f00 50px,#f40 51px,#4c3 52px,#0fe 53px,#07b 54px,#04a 55px,#03a 56px,#07b 61px,#0ff 66px,#2d6 72px,#3c4 75px,#2d5 79px,#0ef 87px,#06b 93px,#029 98px,#008 109px,#003 117px,#001 123px)"></i><i style="width:2px;background:linear-gradient(#000 0px,#000 36px,#001 38px,#006 40px,#018 41px,#06b 43px,#0de 44px,#3c4 45px,#f40 46px,#f00 47px,#f00 52px,#f20 53px,#6d2 54px,#0fd 55px,#09c 56px,#07b 57px,#07b 58px,#09c 61px,#0ff 65px,#2d8 72px,#2d5 76px,#2d7 81px,#0ff 90px,#08c 95px,#03a 103px,#008 111px,#003 118px,#001 123px)"></i><i style="width:2px;background:linear-gradient(#000 0px,#000 36px,#001 39px,#007 42px,#029 43px,#0ce 44px,#7d2 45px,#f00 46px,#f00 53px,#fd0 54px,#1ea 55px,#0bd 56px,#07b 57px,#06b 58px,#0ac 64px,#0ff 68px,#2d8 73px,#2d5 77px,#2d7 82px,#0ff 90px,#09c 95px,#04a 103px,#008 113px,#001 123px)"></i><i style="width:2px;background:linear-gradient(#000 0px,#000 40px,#001 41px,#006 42px,#09c 43px,#3c3 44px,#f00 45px,#f00 51px,#f60 52px,#3c5 53px,#0ee 54px,#06b 55px,#05a 56px,#07b 59px,#0fe 65px,#3c3 75px,#6d2 78px,#6d2 81px,#4c3 84px,#0ff 95px,#07b 101px,#008 113px,#002 120px,#002 123px)"></i><i style="width:2px;background:linear-gradient(#000 0px,#000 37px,#002 39px,#007 41px,#019 42px,#06b 43px,#1eb 44px,#f70 45px,#f00 46px,#f00 53px,#ce1 54px,#1ed 55px,#08c 56px,#05a 57px,#04a 58px,#09c 63px,#0ff 67px,#3c5 76px,#3c3 79px,#3c4 83px,#0ff 93px,#07c 99px,#04a 104px,#008 112px,#001 123px)"></i><i style="width:2px;background:linear-gradient(#000 0px,#000 37px,#003 39px,#019 41px,#05b 43px,#0bd 44px,#1e9 45px,#de1 46px,#f10 47px,#f00 51px,#f30 52px,#ce1 53px,#2d8 54px,#0bd 55px,#05a 56px,#03a 57px,#03a 58px,#07b 63px,#0ff 69px,#2d7 77px,#2d6 81px,#2d7 84px,#0ff 93px,#07b 100px,#039 105px,#008 112px,#001 123px)"></i><i style="width:2px;background:linear-gradient(#000 0px,#000 35px,#001 37px,#006 39px,#029 40px,#08c 42px,#0ee 43px,#2d5 44px,#f00 45px,#f00 53px,#6d2 54px,#0ef 55px,#05b 56px,#039 57px,#039 58px,#06b 65px,#09c 67px,#0ef 70px,#2d7 76px,#3c5 80px,#2d6 83px,#0fe 90px,#0ef 91px,#06b 97px,#03a 102px,#008 110px,#001 123px)"></i><i style="width:2px;background:linear-gradient(#000 0px,#000 35px,#002 37px,#004 38px,#008 39px,#0de 42px,#0fd 43px,#2d6 44px,#fe0 45px,#f00 46px,#f00 52px,#ce1 53px,#1ea 54px,#0ad 55px,#05b 56px,#04a 57px,#09c 66px,#0bd 68px,#0ff 70px,#1e9 75px,#2d8 79px,#1ea 85px,#0ff 91px,#07c 97px,#04a 104px,#008 112px,#003 119px,#002 123px)"></i><i style="width:2px;background:linear-gradient(#000 0px,#000 35px,#002 37px,#007 39px,#04a 41px,#09c 42px,#1e9 43px,#f70 44px,#f00 45px,#f00 52px,#7d2 53px,#0fe 54px,#07b 55px,#05a 56px,#07b 60px,#0ff 66px,#3c5 78px,#2d6 82px,#0ff 90px,#08c 95px,#008 112px,#001 123px)"></i><i style="width:2px;background:linear-gradient(#000 0px,#000 33px,#001 35px,#006 37px,#008 38px,#029 39px,#06b 40px,#0fd 41px,#ae1 42px,#f00 43px,#f00 49px,#ef0 50px,#2d9 51px,#0cd 52px,#07b 53px,#06b 54px,#0ad 61px,#0fe 65px,#3c4 72px,#8d2 76px,#8d2 78px,#7d2 80px,#3c3 83px,#0ff 93px,#08c 99px,#008 114px,#001 123px)"></i><i style="width:2px;background:linear-gradient(#000 0px,#000 31px,#002 33px,#004 34px,#008 35px,#0ad 38px,#0fe 39px,#6d2 40px,#f00 41px,#f00 48px,#ae1 49px,#0fd 50px,#06b 51px,#029 52px,#019 53px,#04a 59px,#0ef 66px,#0fe 67px,#1ea 72px,#1e9 76px,#1ea 79px,#0ff 85px,#04a 94px,#008 102px,#000 123px)"></i><i style="width:2px;background:linear-gradient(#000 0px,#000 36px,#001 37px,#008 38px,#0ce 39px,#7d2 40px,#f00 41px,#f00 47px,#fb0 48px,#2d7 49px,#0ce 50px,#06b 51px,#04a 53px,#09c 59px,#0ff 63px,#2d8 69px,#2d5 73px,#2d6 77px,#0ff 87px,#0ef 88px,#05b 96px,#029 102px,#008 109px,#003 116px,#000 123px)"></i><i style="width:2px;background:linear-gradient(#000 0px,#000 37px,#001 38px,#008 39px,#0bd 40px,#3c4 41px,#f70 42px,#f00 43px,#f00 47px,#f30 48px,#ae1 49px,#1ea 50px,#0de 51px,#09c 52px,#09c 53px,#0fe 58px,#3c3 67px,#6d2 70px,#7d2 73px,#6d2 76px,#3c3 79px,#0ff 90px,#08c 96px,#04a 102px,#008 111px,#003 117px,#000 123px)"></i><i style="width:2px;background:linear-gradient(#000 0px,#000 31px,#001 33px,#007 35px,#08c 38px,#0ce 39px,#1ea 40px,#8d2 41px,#f80 42px,#f10 43px,#f20 44px,#f00 46px,#f70 47px,#be1 48px,#2d8 49px,#0de 50px,#07b 51px,#05b 52px,#05b 53px,#08c 56px,#0ff 60px,#2d7 67px,#3c4 71px,#2d6 76px,#0fe 81px,#08c 85px,#019 100px,#008 105px,#002 116px,#000 123px)"></i><i style="width:2px;background:linear-gradient(#000 0px,#000 37px,#001 38px,#008 39px,#0bd 40px,#3c3 41px,#f40 42px,#f00 43px,#f00 50px,#df0 51px,#2d8 52px,#0de 53px,#09c 54px,#07c 55px,#09c 59px,#0fe 63px,#2d7 68px,#2d5 72px,#2d7 75px,#0ff 81px,#09c 85px,#029 100px,#008 109px,#003 116px,#001 123px)"></i><i style="width:2px;background:linear-gradient(#000 0px,#000 32px,#002 34px,#006 36px,#019 37px,#04a 39px,#08c 40px,#0ff 41px,#2d9 42px,#3c4 43px,#3c3 44px,#4c3 46px,#3c3 47px,#2d7 48px,#1ec 49px,#0cd 50px,#07b 51px,#05a 52px,#05a 53px,#08c 56px,#0ff 61px,#2d7 69px,#2d6 72px,#2d8 75px,#0ff 81px,#07b 87px,#029 97px,#007 108px,#002 117px,#000 123px)"></i><i style="width:2px;background:linear-gradient(#000 0px,#000 32px,#001 34px,#008 37px,#019 38px,#05b 39px,#0ff 40px,#3c3 41px,#fa0 42px,#f00 43px,#f00 46px,#f20 47px,#fe0 48px,#2d5 49px,#0ff 50px,#07b 51px,#04a 52px,#04a 53px,#06b 57px,#0ff 63px,#2d8 69px,#2d6 72px,#2d7 75px,#0ff 82px,#07b 88px,#039 94px,#018 101px,#007 109px,#002 118px,#001 123px)"></i><i style="width:2px;background:linear-gradient(#000 0px,#000 32px,#001 34px,#007 37px,#029 38px,#0ce 39px,#6d2 40px,#f00 41px,#f00 48px,#5d2 49px,#0ff 50px,#05b 51px,#039 52px,#029 53px,#06b 59px,#0ff 64px,#2d5 71px,#3c4 74px,#2d7 77px,#0ff 83px,#06b 88px,#03a 92px,#008 102px,#000 123px)"></i><i style="width:2px;background:linear-gradient(#000 0px,#000 32px,#002 34px,#006 36px,#018 37px,#03a 38px,#0ce 39px,#3c3 40px,#f00 41px,#f00 47px,#f60 48px,#3c4 49px,#0ff 50px,#07b 51px,#05a 52px,#05a 53px,#09c 61px,#0ff 65px,#2d8 70px,#2d6 75px,#0ff 88px,#07b 95px,#03a 100px,#008 111px,#003 118px,#001 123px)"></i><i style="width:2px;background:linear-gradient(#000 0px,#000 33px,#001 35px,#006 37px,#039 39px,#07b 40px,#1ed 41px,#ce1 42px,#f00 43px,#f00 49px,#f80 50px,#2d6 51px,#0cd 52px,#05a 53px,#03a 54px,#039 55px,#06b 62px,#0fe 67px,#2d7 72px,#3c5 76px,#2d7 79px,#0ff 85px,#07b 90px,#04a 94px,#008 108px,#001 123px)"></i><i style="width:2px;background:linear-gradient(#000 0px,#000 37px,#002 39px,#008 42px,#029 43px,#0ad 44px,#2d5 45px,#f20 46px,#f00 47px,#f00 53px,#6d2 54px,#0fe 55px,#08c 56px,#04a 57px,#04a 58px,#06b 64px,#09c 66px,#0fe 69px,#2d7 74px,#2d5 77px,#2d7 80px,#0ff 87px,#06b 94px,#039 100px,#008 109px,#003 117px,#002 123px)"></i><i style="width:2px;background:linear-gradient(#000 0px,#000 36px,#002 39px,#007 42px,#03a 43px,#0ee 44px,#3c3 45px,#f70 46px,#f00 47px,#f00 51px,#fa0 52px,#3c3 53px,#0fd 54px,#08c 55px,#05a 56px,#05a 57px,#07c 62px,#0ff 68px,#1eb 74px,#1ea 78px,#0ff 87px,#07b 94px,#03a 102px,#008 111px,#001 123px)"></i><i style="width:2px;background:linear-gradient(#000 0px,#000 35px,#001 37px,#004 39px,#008 40px,#0ad 43px,#0ff 44px,#2d5 45px,#fa0 46px,#f00 47px,#f00 52px,#f80 53px,#3c3 54px,#0fe 55px,#09c 56px,#07b 57px,#06b 58px,#0bd 69px,#0ff 71px,#2d6 75px,#3c4 78px,#3c4 80px,#0ff 90px,#0ef 91px,#09c 96px,#008 112px,#003 118px,#001 123px)"></i><i style="width:2px;background:linear-gradient(#000 0px,#000 41px,#002 42px,#029 43px,#0fd 44px,#fa0 45px,#f00 46px,#f00 52px,#f10 53px,#3c4 54px,#0ee 55px,#07b 56px,#05b 57px,#09c 65px,#0fe 69px,#2d5 75px,#4c3 79px,#3c4 83px,#0ff 92px,#08c 97px,#05a 103px,#008 113px,#001 123px)"></i><i style="width:2px;background:linear-gradient(#000 0px,#000 36px,#002 38px,#008 40px,#04a 42px,#08c 43px,#1ec 44px,#ae1 45px,#f00 46px,#f00 52px,#be1 53px,#1eb 54px,#0ad 55px,#05a 56px,#04a 58px,#08c 66px,#0ad 68px,#0ef 70px,#2d6 76px,#3c4 80px,#2d7 84px,#0ff 90px,#09c 94px,#05b 99px,#008 112px,#001 123px)"></i><i style="width:2px;background:linear-gradient(#000 0px,#000 35px,#001 37px,#002 38px,#006 39px,#029 40px,#0ef 43px,#1ea 44px,#de1 45px,#f00 46px,#f00 53px,#ef0 54px,#1eb 55px,#08c 56px,#04a 57px,#04a 59px,#07b 65px,#0ff 71px,#0fe 72px,#1e9 77px,#2d8 80px,#1e9 82px,#0fe 87px,#0ef 88px,#08c 92px,#06b 96px,#008 110px,#001 123px)"></i><i style="width:2px;background:linear-gradient(#000 0px,#000 36px,#003 39px,#007 41px,#019 42px,#07c 43px,#2d8 44px,#f20 45px,#f00 46px,#f00 52px,#f50 53px,#2d6 54px,#0bd 55px,#05a 56px,#04a 57px,#08c 65px,#0ef 69px,#2d6 76px,#3c3 79px,#3c5 83px,#0ef 92px,#08c 97px,#008 112px,#001 123px)"></i><i style="width:2px;background:linear-gradient(#000 0px,#000 40px,#002 42px,#019 43px,#0fe 44px,#ff0 45px,#f00 46px,#f00 54px,#ae1 55px,#1ea 56px,#0ce 57px,#08c 58px,#07c 59px,#0ad 64px,#0fe 68px,#3c4 75px,#5d2 78px,#6d2 80px,#3c3 83px,#0ff 92px,#0ad 96px,#008 114px,#002 123px)"></i><i style="width:2px;background:linear-gradient(#000 0px,#000 36px,#003 39px,#007 41px,#019 42px,#06b 43px,#1ed 44px,#df0 45px,#f00 46px,#f00 52px,#fb0 53px,#2d8 54px,#0bd 55px,#05a 56px,#04a 58px,#07b 62px,#0ff 67px,#2d8 72px,#3c4 77px,#2d5 82px,#0ff 92px,#07b 98px,#039 103px,#008 111px,#001 123px)"></i><i style="width:2px;background:linear-gradient(#000 0px,#000 34px,#001 36px,#006 38px,#019 39px,#0ad 42px,#0ff 43px,#2d7 44px,#9e1 45px,#fe0 46px,#fb0 47px,#fb0 49px,#ff0 50px,#7d2 51px,#2d8 52px,#0ee 53px,#07b 54px,#05a 55px,#04a 56px,#08c 61px,#0ef 66px,#0fe 67px,#2d7 74px,#2d6 77px,#2d7 80px,#0ff 88px,#07b 95px,#03a 101px,#008 110px,#003 117px,#001 123px)"></i><i style="width:2px;background:linear-gradient(#000 0px,#000 32px,#001 34px,#007 36px,#07b 39px,#0de 40px,#2d6 41px,#f90 42px,#f00 43px,#f00 48px,#f90 49px,#3c4 50px,#0ff 51px,#07b 52px,#05a 53px,#0ad 61px,#0ff 65px,#3c4 73px,#3c3 78px,#2d6 82px,#0ff 89px,#0ad 93px,#03a 104px,#008 112px,#004 116px,#002 123px)"></i><i style="width:2px;background:linear-gradient(#000 0px,#000 32px,#002 35px,#007 37px,#04a 39px,#0ce 40px,#3c3 41px,#f00 42px,#f00 49px,#9e1 50px,#1ed 51px,#08c 52px,#04a 53px,#04a 54px,#07b 61px,#0fe 66px,#2d6 72px,#3c4 75px,#2d6 78px,#0ff 86px,#06b 92px,#039 100px,#008 109px,#002 118px,#001 123px)"></i><i style="width:2px;background:linear-gradient(#000 0px,#000 32px,#003 35px,#008 37px,#05a 39px,#0de 40px,#3c3 41px,#f40 42px,#f00 43px,#f00 48px,#fe0 49px,#2d7 50px,#0de 51px,#08c 52px,#06b 53px,#0ad 59px,#0ff 63px,#2d7 69px,#3c4 73px,#2d5 77px,#0ef 88px,#09c 93px,#03a 103px,#008 111px,#003 117px,#000 123px)"></i><i style="width:2px;background:linear-gradient(#000 0px,#000 32px,#003 35px,#007 37px,#019 38px,#06b 39px,#1ec 40px,#fd0 41px,#f00 42px,#f00 48px,#f50 49px,#2d5 50px,#0de 51px,#06b 52px,#04a 53px,#06b 56px,#0ff 63px,#3c5 73px,#2d6 77px,#0ff 84px,#06b 91px,#029 98px,#008 107px,#002 117px,#001 123px)"></i><i style="width:2px;background:linear-gradient(#000 0px,#000 33px,#002 36px,#005 38px,#008 39px,#05a 40px,#1ed 41px,#9d2 42px,#f30 43px,#f00 44px,#f00 47px,#f20 48px,#df0 49px,#2d7 50px,#0de 51px,#07b 52px,#05a 53px,#04a 54px,#08c 59px,#0ef 64px,#1e9 71px,#2d8 74px,#1e9 78px,#0fe 84px,#08c 90px,#029 101px,#008 109px,#002 118px,#001 123px)"></i><i style="width:2px;background:linear-gradient(#000 0px,#000 32px,#002 35px,#007 37px,#019 38px,#07b 39px,#2d8 40px,#f00 41px,#f00 49px,#3c4 50px,#0de 51px,#05b 52px,#04a 53px,#04a 54px,#07b 61px,#09c 63px,#0fe 66px,#2d5 71px,#3c3 74px,#3c5 77px,#0ff 84px,#07b 89px,#029 100px,#008 109px,#003 117px,#001 123px)"></i><i style="width:2px;background:linear-gradient(#000 0px,#000 31px,#002 33px,#007 35px,#07b 38px,#0ff 39px,#4c3 40px,#f40 41px,#f00 42px,#f00 47px,#df0 48px,#1e9 49px,#0bd 50px,#05a 51px,#04a 53px,#08c 63px,#0ff 67px,#1e9 71px,#2d7 74px,#2d7 77px,#0ff 86px,#06b 93px,#039 101px,#008 110px,#001 123px)"></i><i style="width:2px;background:linear-gradient(#000 0px,#000 32px,#001 34px,#019 37px,#03a 38px,#08c 39px,#1e9 40px,#f10 41px,#f00 42px,#f00 51px,#3c3 52px,#0ff 53px,#07c 54px,#05b 55px,#08c 62px,#0fe 68px,#2d5 75px,#3c4 78px,#2d6 81px,#0ff 87px,#09c 91px,#04a 103px,#008 112px,#001 123px)"></i><i style="width:2px;background:linear-gradient(#000 0px,#000 34px,#002 36px,#008 38px,#05a 40px,#09c 41px,#1e9 42px,#f90 43px,#f00 44px,#f00 50px,#f50 51px,#2d6 52px,#0bd 53px,#04a 54px,#029 55px,#029 56px,#06b 63px,#0ff 70px,#1ea 75px,#2d9 79px,#1ea 83px,#0ff 88px,#07b 94px,#04a 99px,#008 109px,#003 117px,#001 123px)"></i><i style="width:2px;background:linear-gradient(#000 0px,#000 33px,#000 35px,#004 37px,#018 38px,#0ef 41px,#1eb 42px,#5d2 43px,#f00 44px,#f00 52px,#3c4 53px,#0bd 54px,#03a 55px,#019 56px,#019 57px,#05b 67px,#08c 69px,#0ff 72px,#2d9 76px,#2d6 80px,#2d8 83px,#0fe 89px,#06b 95px,#04a 98px,#008 109px,#004 115px,#001 123px)"></i><i style="width:2px;background:linear-gradient(#000 0px,#000 35px,#002 37px,#018 39px,#06b 41px,#0ad 42px,#1eb 43px,#ef0 44px,#f00 45px,#f00 51px,#f80 52px,#2d6 53px,#0ce 54px,#05a 55px,#03a 56px,#03a 57px,#07c 63px,#0ef 68px,#0fe 69px,#2d6 76px,#3c4 80px,#2d5 85px,#0ef 94px,#0ad 97px,#07b 100px,#008 113px,#002 123px)"></i><i style="width:2px;background:linear-gradient(#000 0px,#000 35px,#002 38px,#007 40px,#019 41px,#04a 42px,#0ee 43px,#5d2 44px,#f00 45px,#f00 51px,#f70 52px,#2d6 53px,#0bd 54px,#03a 55px,#018 56px,#018 57px,#06b 68px,#0ff 75px,#1ea 82px,#1eb 85px,#0ff 90px,#08c 96px,#04a 102px,#008 111px,#003 117px,#001 123px)"></i><i style="width:2px;background:linear-gradient(#000 0px,#000 35px,#002 37px,#007 39px,#04a 41px,#08c 42px,#0fd 43px,#7d2 44px,#f10 45px,#f00 50px,#f40 51px,#7d2 52px,#1ed 53px,#07c 54px,#03a 55px,#029 57px,#07c 66px,#0ff 71px,#3c4 79px,#4c3 83px,#3c4 86px,#0ff 94px,#0ad 97px,#07b 100px,#008 113px,#003 119px,#003 123px)"></i><i style="width:2px;background:linear-gradient(#000 0px,#000 34px,#001 36px,#006 38px,#029 39px,#08c 41px,#0de 42px,#2d6 43px,#f40 44px,#f00 45px,#f00 51px,#f70 52px,#2d7 53px,#09c 54px,#029 55px,#018 56px,#018 57px,#06b 67px,#0ef 73px,#2d8 79px,#2d6 82px,#2d8 86px,#0ef 91px,#08c 94px,#05b 97px,#008 111px,#004 117px,#001 123px)"></i><i style="width:2px;background:linear-gradient(#000 0px,#000 36px,#002 39px,#019 42px,#07b 43px,#2d8 44px,#f30 45px,#f00 46px,#f00 52px,#fb0 53px,#1e9 54px,#09c 55px,#03a 56px,#029 58px,#07b 66px,#0ff 71px,#3c4 79px,#5d2 81px,#6d2 83px,#3c3 86px,#0ff 95px,#09c 99px,#05b 103px,#008 113px,#001 123px)"></i><i style="width:2px;background:linear-gradient(#000 0px,#000 40px,#000 41px,#003 42px,#039 43px,#0fe 44px,#8d2 45px,#f30 46px,#f00 47px,#f00 49px,#f00 50px,#f30 51px,#ce1 52px,#2d9 53px,#0bd 54px,#04a 55px,#019 56px,#019 57px,#07b 66px,#0ff 72px,#2d5 79px,#3c3 83px,#3c5 86px,#0ff 95px,#06b 102px,#008 112px,#005 116px,#003 123px)"></i><i style="width:2px;background:linear-gradient(#000 0px,#000 35px,#003 37px,#018 39px,#06b 41px,#0cd 42px,#2d7 43px,#f70 44px,#f00 45px,#f00 52px,#f60 53px,#3c3 54px,#0ff 55px,#05b 56px,#029 57px,#019 58px,#05a 66px,#09c 69px,#0ff 72px,#2d7 78px,#2d5 82px,#2d8 86px,#0fe 91px,#0ff 92px,#06b 97px,#04a 101px,#008 110px,#004 116px,#001 123px)"></i><i style="width:2px;background:linear-gradient(#000 0px,#000 35px,#001 37px,#008 40px,#019 41px,#06b 42px,#1ec 43px,#ce1 44px,#f00 45px,#f10 53px,#8d2 54px,#1ed 55px,#08c 56px,#03a 57px,#029 58px,#03a 60px,#06b 64px,#0fe 70px,#2d7 76px,#2d5 80px,#2d7 83px,#0ff 91px,#05b 99px,#029 104px,#008 109px,#003 116px,#001 123px)"></i><i style="width:2px;background:linear-gradient(#000 0px,#000 37px,#002 40px,#005 41px,#05b 42px,#2d9 43px,#f40 44px,#f00 45px,#f00 51px,#ff0 52px,#1ea 53px,#09c 54px,#04a 55px,#04a 57px,#07c 64px,#0ff 69px,#2d7 75px,#3c5 78px,#2d6 82px,#0ff 90px,#07b 96px,#03a 102px,#008 111px,#003 119px,#002 123px)"></i><i style="width:2px;background:linear-gradient(#000 0px,#000 35px,#001 37px,#004 38px,#007 39px,#09c 42px,#0de 43px,#2d8 44px,#ff0 45px,#f00 46px,#f00 54px,#df0 55px,#1e9 56px,#0ce 57px,#08c 58px,#07b 60px,#09c 65px,#0ef 68px,#0fe 69px,#2d8 73px,#2d5 77px,#2d7 81px,#0ef 86px,#09c 89px,#039 104px,#008 112px,#003 119px,#002 123px)"></i><i style="width:2px;background:linear-gradient(#000 0px,#000 33px,#001 35px,#004 36px,#007 37px,#08c 40px,#0de 41px,#2d8 42px,#fe0 43px,#f00 44px,#f00 49px,#fc0 50px,#2d6 51px,#0ce 52px,#04a 53px,#019 54px,#008 55px,#03a 60px,#0ff 68px,#1ea 74px,#1e9 77px,#0ff 86px,#03a 95px,#008 101px,#002 115px,#000 123px)"></i><i style="width:2px;background:linear-gradient(#000 0px,#000 35px,#002 37px,#018 40px,#03a 41px,#0bd 42px,#2d5 43px,#f50 44px,#f00 45px,#f00 50px,#f60 51px,#3c4 52px,#0ff 53px,#07b 54px,#05a 55px,#06b 58px,#0ff 65px,#2d7 72px,#2d5 76px,#0ff 86px,#06b 93px,#029 100px,#008 108px,#003 116px,#000 123px)"></i><i style="width:2px;background:linear-gradient(#000 0px,#000 34px,#002 37px,#008 39px,#05a 41px,#0ce 42px,#3c4 43px,#f00 44px,#f00 51px,#f80 52px,#2d7 53px,#0ce 54px,#08c 55px,#07b 56px,#0ff 62px,#3c3 72px,#4c3 74px,#3c3 76px,#0ff 86px,#0ef 87px,#06b 93px,#029 100px,#008 109px,#003 116px,#000 123px)"></i><i style="width:2px;background:linear-gradient(#000 0px,#000 36px,#002 38px,#008 41px,#039 42px,#0ad 43px,#2d7 44px,#f80 45px,#f00 46px,#f00 51px,#f30 52px,#5d2 53px,#1ec 54px,#09c 56px,#0ad 58px,#0ff 62px,#3c5 71px,#3c3 74px,#2d5 78px,#0ff 88px,#07c 95px,#04a 101px,#008 111px,#001 123px)"></i><i style="width:2px;background:linear-gradient(#000 0px,#000 34px,#001 36px,#003 37px,#007 38px,#09c 41px,#0ef 42px,#2d7 43px,#fb0 44px,#f00 45px,#f00 51px,#be1 52px,#1eb 53px,#0ad 54px,#06b 55px,#05b 56px,#08c 59px,#0ff 64px,#1e9 71px,#2d8 75px,#1ea 79px,#0ff 85px,#07b 92px,#029 100px,#008 109px,#004 116px,#001 123px)"></i><i style="width:2px;background:linear-gradient(#000 0px,#000 35px,#002 39px,#003 40px,#006 41px,#04a 42px,#0fe 43px,#4c3 44px,#fb0 45px,#f40 46px,#f00 48px,#f00 52px,#fb0 53px,#3c4 54px,#0ff 55px,#08c 56px,#05b 57px,#07b 60px,#0ff 65px,#2d7 73px,#2d7 77px,#0ff 87px,#06b 94px,#029 101px,#008 108px,#003 116px,#001 123px)"></i><i style="width:2px;background:linear-gradient(#000 0px,#000 36px,#002 38px,#006 40px,#029 42px,#07b 43px,#1ec 44px,#ef0 45px,#f00 46px,#f00 52px,#be1 53px,#1eb 54px,#09c 55px,#04a 56px,#03a 57px,#05a 63px,#08c 66px,#0ef 69px,#2d7 74px,#2d6 77px,#2d7 80px,#0ff 86px,#06b 91px,#04a 95px,#008 109px,#003 117px,#001 123px)"></i><i style="width:2px;background:linear-gradient(#000 0px,#000 36px,#002 39px,#007 42px,#039 43px,#0ee 44px,#6d2 45px,#f00 46px,#f00 52px,#be1 53px,#1eb 54px,#09c 55px,#04a 56px,#039 57px,#07b 67px,#0ff 72px,#1e9 76px,#2d7 79px,#2d8 82px,#0ff 87px,#08c 92px,#05b 96px,#008 110px,#003 118px,#002 123px)"></i><i style="width:2px;background:linear-gradient(#000 0px,#000 36px,#002 39px,#007 41px,#039 43px,#07c 44px,#1ec 45px,#ae1 46px,#f00 47px,#f00 52px,#fa0 53px,#3c4 54px,#0ff 55px,#07b 56px,#04a 57px,#03a 58px,#07c 68px,#09c 70px,#0ee 72px,#0fe 73px,#2d8 77px,#2d6 81px,#2d8 85px,#0fe 90px,#09c 94px,#06b 97px,#008 112px,#003 119px,#003 123px)"></i><i style="width:2px;background:linear-gradient(#000 0px,#000 37px,#001 39px,#006 41px,#019 42px,#07b 44px,#0ff 45px,#5d2 46px,#f00 47px,#f00 53px,#f20 54px,#3c3 55px,#0ef 56px,#05b 57px,#039 58px,#029 59px,#07b 69px,#09c 71px,#0ef 74px,#0fe 75px,#1e9 79px,#2d7 82px,#2d8 85px,#0ff 91px,#09c 95px,#06b 98px,#008 112px,#001 123px)"></i><i style="width:2px;background:linear-gradient(#000 0px,#000 37px,#002 39px,#008 41px,#0bd 44px,#1ea 45px,#fd0 46px,#f00 47px,#f00 54px,#be1 55px,#0fd 56px,#06b 57px,#039 58px,#029 59px,#07b 67px,#0ff 73px,#3c4 81px,#3c3 83px,#3c4 85px,#0ff 93px,#07c 99px,#008 112px,#001 123px)"></i><i style="width:2px;background:linear-gradient(#000 0px,#000 38px,#002 40px,#018 43px,#03a 44px,#0ad 45px,#2d7 46px,#f80 47px,#f00 48px,#f00 55px,#fc0 56px,#2d6 57px,#0ef 58px,#07b 59px,#05a 60px,#08c 67px,#0ef 72px,#3c4 81px,#3c3 84px,#2d5 87px,#0ff 95px,#08c 101px,#008 114px,#004 119px,#003 123px)"></i><i style="width:2px;background:linear-gradient(#000 0px,#000 37px,#001 39px,#006 41px,#029 42px,#07b 44px,#0de 45px,#2d6 46px,#f50 47px,#f00 48px,#f00 54px,#be1 55px,#1ec 56px,#07b 57px,#039 58px,#029 60px,#07c 68px,#0ff 73px,#3c5 80px,#3c3 82px,#4c3 84px,#3c4 87px,#0fe 95px,#0ef 96px,#07c 101px,#008 113px,#004 118px,#001 123px)"></i><i style="width:2px;background:linear-gradient(#000 0px,#000 38px,#003 40px,#008 42px,#05a 44px,#0ce 45px,#2d5 46px,#f40 47px,#f00 48px,#f00 53px,#f30 54px,#3c3 55px,#0ef 56px,#05a 57px,#029 58px,#019 59px,#07b 70px,#0fe 76px,#2d9 81px,#2d7 84px,#1e9 87px,#0ff 93px,#06b 100px,#008 112px,#001 123px)"></i><i style="width:2px;background:linear-gradient(#000 0px,#000 38px,#002 40px,#006 42px,#039 44px,#06b 45px,#0fe 46px,#5d2 47px,#f40 48px,#f00 49px,#f00 55px,#f40 56px,#8d2 57px,#1eb 58px,#0ad 59px,#06b 60px,#05b 62px,#0ad 69px,#0ef 72px,#2d5 79px,#3c3 82px,#3c5 85px,#0ff 93px,#09c 98px,#008 113px,#001 123px)"></i><i style="width:2px;background:linear-gradient(#000 0px,#000 37px,#002 39px,#018 41px,#0bd 44px,#1eb 45px,#df0 46px,#f00 47px,#f00 54px,#ff0 55px,#1eb 56px,#09c 57px,#05b 58px,#05a 59px,#0ad 68px,#0ee 71px,#0fe 72px,#2d8 75px,#3c4 78px,#4c3 82px,#3c4 86px,#0fe 93px,#09c 98px,#008 114px,#001 123px)"></i><i style="width:2px;background:linear-gradient(#000 0px,#000 38px,#001 40px,#007 43px,#019 44px,#07b 45px,#1e9 46px,#f70 47px,#f00 48px,#f00 54px,#fb0 55px,#2d7 56px,#0ce 57px,#07b 58px,#06b 59px,#0ad 67px,#0ef 70px,#0fe 71px,#2d8 77px,#2d6 80px,#2d7 83px,#0ff 92px,#08c 99px,#008 113px,#003 120px,#003 123px)"></i><i style="width:2px;background:linear-gradient(#000 0px,#000 34px,#002 37px,#006 39px,#018 40px,#03a 41px,#0de 42px,#7d2 43px,#f00 44px,#f00 51px,#fe0 52px,#1eb 53px,#09c 54px,#05a 55px,#04a 56px,#09c 63px,#0ef 67px,#0fe 68px,#2d6 74px,#3c3 78px,#2d5 83px,#0ff 92px,#08c 97px,#04a 103px,#008 112px,#001 123px)"></i><i style="width:2px;background:linear-gradient(#000 0px,#000 32px,#001 34px,#005 36px,#008 37px,#06b 39px,#0ee 40px,#6d2 41px,#f00 42px,#f00 50px,#2d5 51px,#0ce 52px,#05b 53px,#04a 54px,#09c 62px,#0ef 66px,#2d6 73px,#3c4 77px,#2d7 82px,#0fe 88px,#09c 93px,#03a 104px,#008 112px,#002 119px,#001 123px)"></i><i style="width:2px;background:linear-gradient(#000 0px,#000 36px,#002 38px,#006 39px,#08c 40px,#2d5 41px,#f10 42px,#f00 48px,#f20 49px,#3c3 50px,#0ff 51px,#06b 52px,#04a 53px,#07b 59px,#0ef 64px,#2d6 72px,#3c4 77px,#2d7 82px,#0fe 87px,#0ef 88px,#08c 92px,#029 104px,#008 110px,#003 118px,#001 123px)"></i><i style="width:2px;background:linear-gradient(#000 0px,#000 31px,#001 33px,#003 34px,#007 35px,#029 36px,#0ad 38px,#0ff 39px,#2d5 40px,#f10 41px,#f00 50px,#fa0 51px,#2d7 52px,#0bd 53px,#05b 54px,#04a 55px,#06b 59px,#0ff 65px,#2d7 72px,#2d5 75px,#2d7 78px,#0ff 87px,#05a 95px,#029 100px,#008 105px,#002 116px,#001 123px)"></i><i style="width:2px;background:linear-gradient(#000 0px,#000 34px,#003 37px,#005 38px,#008 39px,#08c 40px,#3c4 41px,#f00 42px,#f00 49px,#f90 50px,#2d9 51px,#09c 52px,#04a 53px,#039 54px,#07b 62px,#0ff 68px,#1ea 76px,#1eb 79px,#0ff 84px,#06b 91px,#039 100px,#008 109px,#002 118px,#001 123px)"></i><i style="width:2px;background:linear-gradient(#000 0px,#000 32px,#001 34px,#006 36px,#019 37px,#06b 39px,#0de 40px,#2d6 41px,#fa0 42px,#f00 43px,#f00 48px,#fd0 49px,#2d7 50px,#0ce 51px,#05a 52px,#039 53px,#039 54px,#07b 65px,#0ad 67px,#0ef 69px,#2d9 73px,#2d6 76px,#2d7 80px,#0ff 87px,#08c 91px,#06b 94px,#008 110px,#001 123px)"></i><i style="width:2px;background:linear-gradient(#000 0px,#000 32px,#002 34px,#007 36px,#04a 38px,#08c 39px,#1ec 40px,#8d2 41px,#f10 42px,#f00 43px,#f00 47px,#fa0 48px,#3c4 49px,#0ff 50px,#06b 51px,#029 52px,#029 53px,#06b 58px,#0ff 65px,#2d7 77px,#2d9 82px,#0ff 88px,#08c 93px,#03a 102px,#008 110px,#003 116px,#000 123px)"></i><i style="width:2px;background:linear-gradient(#000 0px,#000 32px,#003 35px,#008 37px,#06b 39px,#0ff 40px,#7d2 41px,#f00 42px,#f00 50px,#fc0 51px,#2d7 52px,#0de 53px,#06b 54px,#04a 55px,#06b 58px,#0ff 65px,#2d8 75px,#2d7 79px,#2d9 84px,#0ff 91px,#08c 97px,#008 112px,#004 117px,#002 123px)"></i><i style="width:2px;background:linear-gradient(#000 0px,#000 32px,#002 34px,#019 37px,#04a 38px,#0ad 39px,#2d7 40px,#f30 41px,#f00 42px,#f00 48px,#fb0 49px,#1e9 50px,#09c 51px,#039 52px,#029 54px,#08c 63px,#0ef 68px,#1e9 75px,#2d7 80px,#1ea 86px,#0ff 91px,#08c 97px,#008 112px,#003 118px,#001 123px)"></i><i style="width:2px;background:linear-gradient(#000 0px,#000 34px,#002 36px,#007 38px,#04a 40px,#07b 41px,#0fe 42px,#6d2 43px,#f10 44px,#f00 45px,#f00 50px,#be1 51px,#1ea 52px,#0ad 53px,#05a 54px,#03a 55px,#09c 65px,#0ff 69px,#1e9 74px,#2d7 80px,#1e9 86px,#0ff 93px,#08c 98px,#04a 104px,#008 113px,#004 118px,#003 123px)"></i><i style="width:2px;background:linear-gradient(#000 0px,#000 37px,#002 39px,#019 42px,#04a 43px,#0ad 44px,#2d7 45px,#f90 46px,#f00 47px,#f00 52px,#f70 53px,#3c4 54px,#0de 55px,#04a 56px,#019 57px,#019 58px,#06b 65px,#0ef 71px,#2d9 78px,#2d7 83px,#2d8 87px,#0ff 96px,#05b 104px,#008 111px,#003 118px,#002 123px)"></i><i style="width:2px;background:linear-gradient(#000 0px,#000 36px,#002 38px,#008 40px,#0ad 43px,#0fd 44px,#6d2 45px,#f00 46px,#f00 52px,#f30 53px,#3c3 54px,#0ee 55px,#05a 56px,#029 57px,#029 58px,#05b 63px,#0ef 70px,#0fe 71px,#2d8 79px,#2d6 85px,#2d9 91px,#0ff 98px,#08c 104px,#008 114px,#004 119px,#003 123px)"></i><i style="width:2px;background:linear-gradient(#000 0px,#000 36px,#002 38px,#008 40px,#0ad 43px,#0fd 44px,#6d2 45px,#f00 46px,#f00 52px,#f60 53px,#3c5 54px,#0ce 55px,#04a 56px,#019 57px,#019 58px,#05a 64px,#0ff 73px,#1ec 79px,#1ea 85px,#1eb 90px,#0fe 98px,#008 114px,#002 123px)"></i><i style="width:2px;background:linear-gradient(#000 0px,#000 36px,#001 38px,#005 40px,#018 41px,#08c 44px,#0ee 45px,#2d8 46px,#9e1 47px,#fc0 48px,#f80 49px,#f80 50px,#f90 51px,#fd0 52px,#8d2 53px,#2d9 54px,#0bd 55px,#03a 56px,#008 57px,#006 58px,#008 62px,#03a 69px,#0ff 79px,#1eb 87px,#0ff 97px,#008 112px,#004 117px,#001 123px)"></i><i style="width:2px;background:linear-gradient(#000 0px,#000 37px,#003 40px,#019 42px,#0ad 43px,#3c4 44px,#f00 45px,#f00 52px,#4c3 53px,#0ef 54px,#04a 55px,#019 56px,#008 57px,#08c 71px,#0ff 76px,#1e9 81px,#2d6 87px,#2d8 93px,#0ff 100px,#09c 105px,#008 115px,#004 120px,#003 123px)"></i><i style="width:2px;background:linear-gradient(#000 0px,#000 36px,#001 38px,#006 40px,#019 41px,#07c 43px,#0fd 44px,#de1 45px,#f00 46px,#f00 53px,#de1 54px,#1ed 55px,#05b 56px,#019 57px,#018 58px,#07c 70px,#0ff 76px,#1eb 81px,#2d8 87px,#1ea 93px,#0ff 100px,#09c 105px,#008 115px,#002 123px)"></i><i style="width:2px;background:linear-gradient(#000 0px,#000 36px,#002 38px,#007 40px,#07b 43px,#0ee 44px,#2d5 45px,#fa0 46px,#f00 47px,#f00 53px,#f20 54px,#ae1 55px,#1ea 56px,#09c 57px,#03a 58px,#019 59px,#019 60px,#07b 71px,#0ef 76px,#1e9 82px,#2d7 88px,#1ea 93px,#0ff 98px,#08c 103px,#008 114px,#001 123px)"></i><i style="width:2px;background:linear-gradient(#000 0px,#000 37px,#003 41px,#005 42px,#04a 43px,#1ed 44px,#ef0 45px,#f00 46px,#f00 52px,#8d2 53px,#1ed 54px,#07b 55px,#029 56px,#019 57px,#07b 67px,#0ff 74px,#1eb 80px,#1ea 86px,#1eb 91px,#0ff 96px,#0ad 100px,#06b 109px,#008 115px,#002 123px)"></i><i style="width:2px;background:linear-gradient(#000 0px,#000 37px,#002 39px,#008 42px,#029 43px,#09c 44px,#2d8 45px,#fe0 46px,#f00 47px,#f00 54px,#fe0 55px,#2d7 56px,#0bd 57px,#03a 58px,#019 59px,#019 60px,#06b 73px,#0de 79px,#0ff 83px,#0ee 91px,#05a 103px,#008 112px,#004 118px,#002 123px)"></i><i style="width:2px;background:linear-gradient(#000 0px,#000 35px,#001 37px,#006 39px,#029 40px,#05a 41px,#08c 42px,#0ee 43px,#2d6 44px,#f20 45px,#f00 46px,#f00 53px,#6d2 54px,#0ff 55px,#06b 56px,#03a 57px,#09c 68px,#0fe 73px,#1e9 78px,#2d7 84px,#1ea 90px,#0ff 95px,#0ad 99px,#008 114px,#005 118px,#004 123px)"></i><i style="width:2px;background:linear-gradient(#000 0px,#000 36px,#001 38px,#003 39px,#007 40px,#08c 43px,#0ee 44px,#2d6 45px,#f70 46px,#f00 47px,#f00 53px,#be1 54px,#1eb 55px,#09c 56px,#04a 57px,#04a 58px,#0ad 69px,#0ef 72px,#1e9 78px,#2d7 83px,#1e9 88px,#0ff 93px,#0ad 97px,#04a 109px,#008 114px,#002 123px)"></i><i style="width:2px;background:linear-gradient(#000 0px,#000 36px,#003 39px,#008 41px,#04a 43px,#0bd 44px,#2d7 45px,#ef0 46px,#f30 47px,#f00 50px,#f00 53px,#f20 54px,#be1 55px,#1e9 56px,#0cd 57px,#06b 58px,#05a 60px,#09c 68px,#0ef 72px,#1eb 77px,#1ea 81px,#1eb 87px,#0ff 92px,#09c 98px,#008 113px,#005 117px,#003 123px)"></i><i style="width:2px;background:linear-gradient(#000 0px,#000 36px,#002 38px,#004 39px,#008 40px,#0ad 43px,#0fe 44px,#3c4 45px,#f30 46px,#f00 47px,#f00 53px,#ce1 54px,#1eb 55px,#09c 56px,#05a 57px,#04a 59px,#08c 65px,#0ff 71px,#1eb 80px,#0ff 91px,#07b 98px,#04a 104px,#008 112px,#001 123px)"></i><i style="width:2px;background:linear-gradient(#000 0px,#000 36px,#002 38px,#019 41px,#06b 43px,#0bd 44px,#1e9 45px,#9d2 46px,#fa0 47px,#f50 48px,#f40 50px,#f80 51px,#ef0 52px,#3c4 53px,#0fe 54px,#08c 55px,#04a 56px,#03a 57px,#07b 62px,#0ff 68px,#1ea 75px,#2d8 80px,#1e9 85px,#0ff 92px,#08c 97px,#04a 103px,#008 112px,#004 117px,#003 123px)"></i><i style="width:2px;background:linear-gradient(#000 0px,#000 36px,#001 38px,#003 39px,#007 40px,#029 41px,#0ef 44px,#2d8 45px,#fd0 46px,#f00 47px,#f00 53px,#fe0 54px,#1e9 55px,#09c 56px,#04a 57px,#039 58px,#07b 65px,#0ff 72px,#1ec 77px,#1eb 82px,#0ff 93px,#06b 101px,#008 111px,#001 123px)"></i><i style="width:2px;background:linear-gradient(#000 0px,#000 36px,#002 38px,#008 40px,#09c 43px,#0fd 44px,#6d2 45px,#f30 46px,#f00 47px,#f00 54px,#ff0 55px,#2d8 56px,#0bd 57px,#05a 58px,#03a 59px,#0bd 68px,#0ff 74px,#0fe 81px,#0ff 88px,#019 106px,#008 109px,#001 123px)"></i><i style="width:2px;background:linear-gradient(#000 0px,#000 40px,#001 42px,#005 43px,#06b 44px,#2d6 45px,#f00 46px,#f00 53px,#ce1 54px,#1ed 55px,#06b 56px,#019 57px,#019 58px,#06b 67px,#0ff 74px,#1ec 78px,#1eb 83px,#1ec 89px,#0ff 95px,#05a 104px,#008 111px,#003 118px,#001 123px)"></i><i style="width:2px;background:linear-gradient(#000 0px,#000 37px,#002 39px,#008 41px,#04a 43px,#0bd 44px,#2d6 45px,#f10 46px,#f00 47px,#f00 53px,#fd0 54px,#1ea 55px,#07b 56px,#019 57px,#008 59px,#05a 69px,#0ff 77px,#1ec 84px,#0ff 94px,#008 111px,#004 117px,#001 123px)"></i><i style="width:2px;background:linear-gradient(#000 0px,#000 39px,#002 42px,#006 44px,#05b 45px,#2d8 46px,#f00 47px,#f00 55px,#2d5 56px,#0ad 57px,#029 58px,#008 59px,#008 60px,#04a 69px,#0ff 80px,#0fe 85px,#0ff 92px,#04a 103px,#008 112px,#004 117px,#001 123px)"></i><i style="width:2px;background:linear-gradient(#000 0px,#000 39px,#003 41px,#006 42px,#029 43px,#0ce 46px,#1ec 47px,#5d2 48px,#f70 49px,#f00 50px,#f00 54px,#fa0 55px,#3c3 56px,#0ff 57px,#04a 58px,#007 59px,#005 60px,#005 61px,#019 68px,#0ad 80px,#0de 88px,#0bd 95px,#04a 102px,#029 105px,#008 110px,#004 116px,#001 123px)"></i><i style="width:2px;background:linear-gradient(#000 0px,#000 40px,#002 42px,#019 45px,#03a 46px,#08c 47px,#1ea 48px,#fb0 49px,#f00 50px,#f00 56px,#fa0 57px,#2d8 58px,#0ad 59px,#04a 60px,#029 62px,#09c 72px,#0ff 77px,#1ea 83px,#1e9 89px,#1eb 96px,#0ff 103px,#008 116px,#005 119px,#004 123px)"></i><i style="width:2px;background:linear-gradient(#000 0px,#000 39px,#002 42px,#007 44px,#04a 46px,#0de 47px,#9d2 48px,#f00 49px,#f00 57px,#2d6 58px,#09c 59px,#029 60px,#019 61px,#09c 77px,#0ff 81px,#1ea 86px,#1e9 90px,#1eb 95px,#0ff 101px,#09c 106px,#018 115px,#002 123px)"></i><i style="width:2px;background:linear-gradient(#000 0px,#000 39px,#002 41px,#008 43px,#04a 45px,#09c 46px,#1ea 47px,#fd0 48px,#f00 49px,#f00 55px,#fe0 56px,#1ea 57px,#08c 58px,#029 59px,#008 61px,#05a 70px,#0ff 80px,#1eb 91px,#0ff 101px,#018 115px,#002 123px)"></i><i style="width:2px;background:linear-gradient(#000 0px,#000 39px,#002 42px,#007 44px,#019 45px,#05a 46px,#0fe 47px,#be1 48px,#f00 49px,#f00 55px,#f60 56px,#2d6 57px,#0ad 58px,#029 59px,#007 60px,#008 65px,#04a 73px,#0ce 81px,#0ff 85px,#0fe 91px,#0ff 96px,#05a 105px,#008 113px,#001 123px)"></i><i style="width:2px;background:linear-gradient(#000 0px,#000 40px,#004 44px,#006 45px,#03a 46px,#0fe 47px,#ff0 48px,#f00 49px,#f00 55px,#fa0 56px,#2d9 57px,#08c 58px,#019 59px,#007 60px,#008 62px,#04a 71px,#0ff 80px,#1eb 89px,#0ff 99px,#008 114px,#005 117px,#004 123px)"></i><i style="width:2px;background:linear-gradient(#000 0px,#000 40px,#001 42px,#007 45px,#019 46px,#09c 47px,#2d6 48px,#f20 49px,#f00 50px,#f00 56px,#ce1 57px,#1eb 58px,#08c 59px,#04a 60px,#03a 61px,#08c 69px,#0ff 77px,#1eb 83px,#1ea 88px,#0ff 101px,#0ce 105px,#008 116px,#006 118px,#005 123px)"></i><i style="width:2px;background:linear-gradient(#000 0px,#000 39px,#003 42px,#008 44px,#05a 46px,#0ee 47px,#5d2 48px,#f00 49px,#f00 57px,#f50 58px,#3c4 59px,#0ee 60px,#06b 61px,#03a 62px,#039 63px,#08c 71px,#0ff 76px,#1ec 81px,#1eb 87px,#1ec 93px,#0ff 98px,#08c 104px,#008 114px,#001 123px)"></i><i style="width:2px;background:linear-gradient(#000 0px,#000 38px,#001 40px,#003 41px,#007 42px,#0ad 45px,#0ff 46px,#2d7 47px,#fa0 48px,#f00 49px,#f00 57px,#fe0 58px,#2d9 59px,#0bd 60px,#06b 61px,#04a 63px,#0ff 75px,#1ec 85px,#0ff 96px,#08c 103px,#008 114px,#002 123px)"></i><i style="width:2px;background:linear-gradient(#000 0px,#000 39px,#002 42px,#008 45px,#04a 46px,#0ee 47px,#6d2 48px,#f00 49px,#f00 55px,#fc0 56px,#2d8 57px,#0bd 58px,#05b 59px,#04a 61px,#07b 66px,#0fe 73px,#1eb 79px,#1e9 87px,#1ea 93px,#0ff 100px,#019 113px,#007 116px,#002 123px)"></i><i style="width:2px;background:linear-gradient(#000 0px,#000 41px,#004 45px,#008 46px,#08c 47px,#2d7 48px,#f70 49px,#f00 50px,#f00 55px,#f70 56px,#3c5 57px,#0de 58px,#05b 59px,#039 60px,#039 61px,#07b 68px,#0ff 76px,#1ec 81px,#1eb 87px,#0ff 99px,#008 115px,#002 123px)"></i><i style="width:2px;background:linear-gradient(#000 0px,#000 39px,#003 42px,#008 44px,#04a 46px,#0cd 47px,#2d6 48px,#fa0 49px,#f00 50px,#f00 57px,#df0 58px,#2d8 59px,#0de 60px,#07b 61px,#05a 62px,#05a 63px,#09c 70px,#0ef 76px,#1ed 86px,#0ff 97px,#008 115px,#004 120px,#003 123px)"></i><i style="width:2px;background:linear-gradient(#000 0px,#000 39px,#002 41px,#019 44px,#03a 45px,#08c 46px,#1ea 47px,#f80 48px,#f00 49px,#f00 56px,#4c3 57px,#0de 58px,#04a 59px,#019 60px,#019 61px,#04a 68px,#0bd 76px,#0ff 82px,#0ef 90px,#05a 103px,#008 111px,#003 120px,#002 123px)"></i><i style="width:2px;background:linear-gradient(#000 0px,#000 39px,#002 41px,#008 43px,#05b 45px,#09c 46px,#1ec 47px,#ce1 48px,#f00 49px,#f00 56px,#7d2 57px,#0fd 58px,#08c 59px,#06b 60px,#06b 61px,#0ff 70px,#1ea 78px,#2d9 86px,#1eb 94px,#0ff 100px,#019 115px,#002 123px)"></i><i style="width:2px;background:linear-gradient(#000 0px,#000 39px,#002 41px,#008 43px,#05a 45px,#09c 46px,#1ea 47px,#fc0 48px,#f00 49px,#f00 55px,#f70 56px,#2d6 57px,#0bd 58px,#04a 59px,#039 60px,#039 61px,#06b 66px,#0ff 75px,#1ec 87px,#0ff 100px,#03a 113px,#007 123px)"></i><i style="width:2px;background:linear-gradient(#000 0px,#000 41px,#001 43px,#007 46px,#019 47px,#08c 48px,#2d8 49px,#fb0 50px,#f00 51px,#f00 56px,#fb0 57px,#2d6 58px,#0ce 59px,#04a 60px,#029 61px,#029 62px,#05a 68px,#0de 80px,#0ff 85px,#0ff 92px,#0de 100px,#029 114px,#007 123px)"></i><i style="width:2px;background:linear-gradient(#000 0px,#000 38px,#001 40px,#007 42px,#08c 45px,#0ee 46px,#2d6 47px,#f70 48px,#f00 49px,#f00 55px,#8d2 56px,#0fd 57px,#06b 58px,#019 59px,#008 61px,#03a 68px,#0ce 80px,#0ee 93px,#0cd 103px,#029 116px,#006 123px)"></i><i style="width:2px;background:linear-gradient(#000 0px,#000 40px,#002 42px,#007 44px,#04a 46px,#08c 47px,#1ea 48px,#fd0 49px,#f00 50px,#f00 56px,#fc0 57px,#1e9 58px,#09c 59px,#029 60px,#018 61px,#029 67px,#0ad 81px,#0bd 93px,#09c 106px,#019 118px,#007 123px)"></i><i style="width:2px;background:linear-gradient(#000 0px,#000 39px,#002 41px,#008 43px,#0fd 47px,#6d2 48px,#f00 49px,#f00 56px,#7d2 57px,#0fe 58px,#05b 59px,#019 60px,#008 61px,#029 66px,#0bd 81px,#0cd 97px,#0ad 107px,#039 117px,#008 123px)"></i><i style="width:2px;background:linear-gradient(#000 0px,#000 39px,#002 41px,#008 43px,#05b 45px,#0ad 46px,#1e9 47px,#f80 48px,#f00 49px,#f00 56px,#4c3 57px,#0ce 58px,#029 59px,#005 60px,#005 63px,#008 70px,#05a 81px,#06b 91px,#05a 109px,#008 118px,#005 123px)"></i><i style="width:2px;background:linear-gradient(#000 0px,#000 40px,#002 43px,#007 45px,#019 46px,#05a 47px,#0fd 48px,#ae1 49px,#f00 50px,#f00 56px,#8d2 57px,#0fd 58px,#05a 59px,#008 60px,#006 61px,#005 62px,#008 71px,#039 75px,#0bd 84px,#0ce 91px,#0bd 108px,#019 120px,#007 123px)"></i><i style="width:2px;background:linear-gradient(#000 0px,#000 39px,#002 41px,#008 43px,#08c 46px,#0ff 47px,#2d5 48px,#fb0 49px,#f00 50px,#f00 54px,#f10 55px,#ce1 56px,#1e9 57px,#0ad 58px,#04a 59px,#029 60px,#019 61px,#06b 71px,#0ff 80px,#1ec 86px,#1eb 100px,#1ec 107px,#0ff 111px,#06b 118px,#029 123px)"></i><i style="width:2px;background:linear-gradient(#000 0px,#000 40px,#002 43px,#018 46px,#05b 47px,#1eb 48px,#f90 49px,#f00 50px,#f00 57px,#3c4 58px,#0bd 59px,#029 60px,#007 61px,#008 67px,#07b 81px,#08c 90px,#07b 108px,#019 119px,#007 123px)"></i><i style="width:2px;background:linear-gradient(#000 0px,#000 40px,#002 43px,#007 45px,#019 46px,#05a 47px,#0fe 48px,#ef0 49px,#f00 50px,#f00 57px,#6d2 58px,#0ee 59px,#03a 60px,#008 61px,#008 62px,#019 68px,#09c 81px,#0ad 90px,#09c 109px,#008 123px)"></i><i style="width:2px;background:linear-gradient(#000 0px,#000 41px,#002 44px,#008 47px,#039 48px,#0ac 49px,#1eb 50px,#4c3 51px,#ce1 52px,#ef0 54px,#df0 55px,#9e1 56px,#3c5 57px,#1ec 58px,#09c 59px,#03a 60px,#019 61px,#008 62px,#03a 70px,#0ad 83px,#0bd 105px,#0ad 109px,#018 123px)"></i><i style="width:2px;background:linear-gradient(#000 0px,#000 43px,#001 45px,#007 48px,#019 49px,#07b 50px,#1eb 51px,#df0 52px,#f00 53px,#f00 58px,#f80 59px,#3c3 60px,#0ff 61px,#05b 62px,#029 63px,#019 64px,#04a 71px,#0ff 81px,#0ff 82px,#1ed 88px,#1ed 99px,#0ff 111px,#029 123px)"></i><i style="width:2px;background:linear-gradient(#000 0px,#000 43px,#003 46px,#008 48px,#04a 50px,#08c 51px,#1ed 52px,#4c3 53px,#fd0 54px,#f60 55px,#f40 57px,#f60 58px,#fe0 59px,#5c3 60px,#1ec 61px,#09c 62px,#039 63px,#019 64px,#019 65px,#09c 82px,#0ad 99px,#08c 109px,#039 117px,#008 123px)"></i><i style="width:2px;background:linear-gradient(#000 0px,#000 44px,#001 46px,#005 48px,#018 49px,#04a 50px,#0cd 53px,#0fd 54px,#2d7 55px,#5c3 56px,#8d2 57px,#8d2 59px,#6d2 60px,#3c4 61px,#1ea 62px,#0ce 63px,#05b 64px,#029 65px,#019 67px,#03a 72px,#0de 83px,#0ff 92px,#0ff 101px,#0de 106px,#0bd 109px,#029 117px,#007 123px)"></i><i style="width:2px;background:linear-gradient(#000 0px,#000 52px,#002 54px,#008 55px,#08c 56px,#1ed 57px,#2d6 58px,#3c3 59px,#5c3 61px,#4c3 62px,#2d5 63px,#1ea 64px,#0de 65px,#06b 66px,#03a 67px,#029 68px,#06b 74px,#0de 81px,#0ff 84px,#0fe 98px,#0ff 108px,#04a 118px,#018 123px)"></i><i style="width:2px;background:linear-gradient(#000 0px,#000 47px,#001 50px,#005 52px,#008 53px,#07b 56px,#0bd 57px,#1ec 58px,#2d7 59px,#3c3 60px,#3c3 63px,#2d5 64px,#0ff 66px,#08c 67px,#04a 68px,#03a 69px,#09c 82px,#0ad 103px,#08c 109px,#029 118px,#008 123px)"></i><i style="width:2px;background:linear-gradient(#000 0px,#000 51px,#001 53px,#006 54px,#08c 55px,#2d8 56px,#ff0 57px,#f10 58px,#f00 62px,#fc0 63px,#3c3 64px,#0fe 65px,#07b 66px,#039 67px,#029 68px,#09c 82px,#0ad 99px,#08c 107px,#019 118px,#007 123px)"></i><i style="width:2px;background:linear-gradient(#000 0px,#000 44px,#001 46px,#003 47px,#007 48px,#05b 50px,#0ce 53px,#0fe 54px,#2d8 56px,#2d7 59px,#2d8 60px,#0de 62px,#07c 63px,#04a 64px,#039 65px,#0ad 80px,#0bd 97px,#0ad 103px,#029 116px,#008 123px)"></i><i style="width:2px;background:linear-gradient(#000 0px,#000 45px,#002 49px,#006 50px,#06b 51px,#0fe 52px,#2d7 53px,#4c3 54px,#6d2 56px,#5d2 57px,#3c4 58px,#0ff 60px,#07b 61px,#039 62px,#019 63px,#029 68px,#0bd 84px,#0bd 98px,#09c 108px,#039 117px,#008 123px)"></i><i style="width:2px;background:linear-gradient(#000 0px,#000 45px,#001 47px,#004 48px,#04a 49px,#0ff 50px,#2d6 51px,#7d2 52px,#be1 53px,#be1 54px,#be1 55px,#8d2 56px,#3c4 57px,#1ec 58px,#0ad 59px,#03a 60px,#018 61px,#008 62px,#019 68px,#09c 81px,#0ad 91px,#09c 109px,#008 123px)"></i><i style="width:2px;background:linear-gradient(#000 0px,#000 39px,#002 41px,#018 43px,#09c 46px,#1ed 47px,#7d2 48px,#f40 49px,#f00 50px,#f00 54px,#f70 55px,#5c3 56px,#0fe 57px,#06b 58px,#029 59px,#019 61px,#03a 68px,#0de 84px,#0ee 102px,#0ce 109px,#019 123px)"></i><i style="width:2px;background:linear-gradient(#000 0px,#000 37px,#003 40px,#008 42px,#03a 44px,#08c 45px,#1ec 46px,#3c4 47px,#ae1 48px,#df0 49px,#df0 50px,#df0 51px,#ae1 52px,#3c3 53px,#1eb 54px,#0ad 55px,#04a 56px,#018 57px,#008 58px,#029 68px,#0bd 83px,#0ce 91px,#0bd 109px,#019 123px)"></i><i style="width:2px;background:linear-gradient(#000 0px,#000 38px,#002 40px,#007 43px,#029 44px,#09c 45px,#2d8 46px,#fc0 47px,#f00 48px,#f00 52px,#f10 53px,#be1 54px,#1ea 55px,#08c 56px,#029 57px,#007 58px,#008 63px,#029 71px,#0bd 86px,#0bd 105px,#0ad 109px,#019 123px)"></i><i style="width:2px;background:linear-gradient(#000 0px,#000 37px,#002 40px,#007 43px,#018 44px,#04a 45px,#0ad 46px,#1ec 47px,#2d7 48px,#2d5 49px,#3c5 51px,#2d6 52px,#1e9 53px,#0fe 54px,#039 56px,#008 57px,#007 59px,#019 66px,#0bd 83px,#0ce 93px,#0bd 109px,#019 123px)"></i><i style="width:2px;background:linear-gradient(#000 0px,#000 38px,#003 42px,#004 43px,#007 44px,#05b 45px,#0fe 46px,#3c4 47px,#be1 48px,#ef0 49px,#ef0 50px,#ef0 51px,#ae1 52px,#3c3 53px,#1eb 54px,#0ad 55px,#039 56px,#007 57px,#006 59px,#008 67px,#08c 83px,#0ad 93px,#09c 109px,#018 123px)"></i><i style="width:2px;background:linear-gradient(#000 0px,#000 37px,#002 39px,#008 41px,#04a 43px,#08c 44px,#0fd 45px,#7d2 46px,#f00 47px,#f00 53px,#ae1 54px,#1ec 55px,#07b 56px,#019 57px,#007 58px,#008 64px,#029 70px,#0ff 84px,#0fd 94px,#0fe 107px,#0ff 111px,#03a 123px)"></i><i style="width:2px;background:linear-gradient(#000 0px,#000 43px,#001 44px,#007 45px,#09c 46px,#2d8 47px,#ce1 48px,#f70 49px,#f40 50px,#f40 51px,#f50 52px,#fb0 53px,#7d2 54px,#1ea 55px,#09c 56px,#029 57px,#006 58px,#005 60px,#008 70px,#07b 84px,#08c 93px,#08c 109px,#008 123px)"></i><i style="width:2px;background:linear-gradient(#000 0px,#000 36px,#001 38px,#003 39px,#006 40px,#029 41px,#09c 43px,#0de 45px,#0fd 46px,#2d5 48px,#3c4 49px,#2d6 52px,#1e9 53px,#0ff 54px,#029 56px,#008 57px,#006 59px,#018 68px,#09c 85px,#0ad 94px,#0ad 109px,#019 123px)"></i><i style="width:2px;background:linear-gradient(#000 0px,#000 39px,#001 42px,#005 45px,#018 46px,#0bd 48px,#0ff 49px,#0fe 50px,#0fe 53px,#0de 54px,#05a 56px,#019 58px,#05a 70px,#08c 74px,#0ff 79px,#0fe 80px,#1e9 88px,#2d9 103px,#1e9 109px,#0fe 115px,#05a 123px)"></i><i style="width:2px;background:linear-gradient(#000 0px,#000 36px,#003 39px,#019 41px,#05a 43px,#09c 44px,#0fd 45px,#3c4 46px,#ef0 47px,#f90 48px,#f80 50px,#fa0 51px,#de1 52px,#3c4 53px,#0fd 54px,#07b 55px,#019 56px,#006 57px,#006 59px,#008 66px,#029 72px,#09c 86px,#0ad 107px,#08c 111px,#019 123px)"></i><i style="width:2px;background:linear-gradient(#000 0px,#000 37px,#002 40px,#008 43px,#03a 44px,#0de 45px,#4c3 46px,#f10 47px,#f00 48px,#f00 53px,#ae1 54px,#1ec 55px,#07b 56px,#019 57px,#007 58px,#008 63px,#039 71px,#0ce 85px,#0de 104px,#0ce 109px,#05a 117px,#019 123px)"></i><i style="width:2px;background:linear-gradient(#000 0px,#000 36px,#001 38px,#006 40px,#019 41px,#0de 45px,#1eb 46px,#3c4 47px,#8d2 48px,#ae1 49px,#ae1 51px,#7d2 52px,#3c4 53px,#1eb 54px,#0bd 55px,#04a 56px,#018 57px,#008 58px,#029 69px,#0bd 83px,#0de 92px,#0de 109px,#029 123px)"></i><i style="width:2px;background:linear-gradient(#000 0px,#000 37px,#002 39px,#007 41px,#03a 43px,#07b 44px,#0ff 45px,#2d5 46px,#ff0 47px,#f50 48px,#f30 49px,#f30 50px,#f40 51px,#fa0 52px,#9d2 53px,#1e9 54px,#0bd 55px,#04a 56px,#018 57px,#008 58px,#039 69px,#0de 86px,#0ef 93px,#0de 109px,#029 123px)"></i><i style="width:2px;background:linear-gradient(#000 0px,#000 36px,#001 38px,#004 39px,#008 40px,#0ef 43px,#1eb 45px,#2d7 46px,#6d2 47px,#ce1 48px,#ef0 49px,#df0 51px,#ae1 52px,#3c3 53px,#1ea 54px,#0bd 55px,#03a 56px,#008 57px,#006 59px,#008 67px,#08c 83px,#0ad 93px,#09c 109px,#008 123px)"></i><i style="width:2px;background:linear-gradient(#000 0px,#000 37px,#001 39px,#008 42px,#04a 44px,#07b 45px,#0ef 46px,#3c4 48px,#8d2 51px,#ce1 52px,#fa0 53px,#f30 54px,#f50 55px,#ce1 56px,#2d9 57px,#0ad 58px,#03a 59px,#018 60px,#008 61px,#029 68px,#0ad 81px,#0ce 92px,#0bd 109px,#019 123px)"></i><i style="width:2px;background:linear-gradient(#000 0px,#000 37px,#001 39px,#007 41px,#029 42px,#06b 44px,#09c 45px,#0fe 46px,#2d7 47px,#6d2 48px,#ae1 49px,#be1 50px,#be1 51px,#9e1 52px,#4c3 53px,#0de 55px,#05b 56px,#019 57px,#008 58px,#029 67px,#0ad 83px,#0bd 91px,#0ad 109px,#019 123px)"></i><i style="width:2px;background:linear-gradient(#000 0px,#000 35px,#001 37px,#005 39px,#018 40px,#0ce 44px,#1ec 45px,#2d5 46px,#7d2 47px,#ae1 48px,#ae1 50px,#7d2 51px,#3c4 52px,#1eb 53px,#0ad 54px,#039 55px,#007 56px,#005 57px,#004 58px,#008 68px,#0bd 82px,#0de 92px,#0bd 108px,#019 120px,#007 123px)"></i><i style="width:2px;background:linear-gradient(#000 0px,#000 37px,#002 39px,#008 41px,#0ce 45px,#1ec 46px,#3c5 47px,#9e1 48px,#de1 49px,#de1 51px,#be1 52px,#5d2 53px,#0de 55px,#05b 56px,#019 57px,#008 58px,#029 68px,#0ad 83px,#0bd 94px,#0ad 109px,#03a 118px,#008 123px)"></i><i style="width:2px;background:linear-gradient(#000 0px,#000 38px,#002 41px,#006 44px,#029 45px,#09c 46px,#1ec 47px,#2d7 48px,#3c5 49px,#3c4 51px,#2d6 52px,#1e9 53px,#0ff 54px,#07b 55px,#019 56px,#006 57px,#004 58px,#004 60px,#008 73px,#05b 84px,#06b 92px,#05a 110px,#008 118px,#005 123px)"></i><i style="width:2px;background:linear-gradient(#000 0px,#000 36px,#002 39px,#007 41px,#03a 43px,#07b 44px,#0ff 45px,#2d5 46px,#df0 47px,#f90 48px,#f80 50px,#f90 51px,#ef0 52px,#3c3 53px,#1ec 54px,#08c 55px,#029 56px,#008 57px,#008 60px,#029 68px,#0ad 79px,#0ce 84px,#0ce 105px,#0cd 109px,#019 123px)"></i><i style="width:2px;background:linear-gradient(#000 0px,#000 36px,#001 38px,#006 40px,#019 41px,#09c 44px,#0fe 45px,#2d6 46px,#9e1 47px,#fe0 48px,#fa0 51px,#f30 53px,#f40 54px,#fe0 55px,#2d5 56px,#0de 57px,#04a 58px,#008 59px,#006 60px,#006 61px,#008 68px,#06b 81px,#08c 91px,#07b 109px,#008 120px,#007 123px)"></i><i style="width:2px;background:linear-gradient(#000 0px,#000 38px,#003 42px,#006 44px,#039 45px,#0cd 46px,#1e9 47px,#4c3 48px,#8d2 49px,#9d2 51px,#7d2 52px,#3c4 53px,#1eb 54px,#0bd 55px,#04a 56px,#008 57px,#007 58px,#019 67px,#09c 81px,#0bd 91px,#0ad 109px,#008 123px)"></i><i style="width:2px;background:linear-gradient(#000 0px,#000 37px,#002 39px,#008 42px,#029 43px,#08c 44px,#1ec 45px,#5c3 46px,#ff0 47px,#fb0 48px,#fb0 50px,#ff0 51px,#7d2 52px,#2d9 53px,#0ce 54px,#04a 55px,#018 56px,#008 57px,#029 67px,#0bd 81px,#0ce 90px,#0cd 109px,#029 123px)"></i><i style="width:2px;background:linear-gradient(#000 0px,#000 36px,#001 38px,#005 40px,#008 41px,#08c 44px,#0de 45px,#1ea 46px,#6d2 47px,#ff0 48px,#fc0 49px,#fc0 51px,#ef0 52px,#6d2 53px,#1e9 54px,#0ce 55px,#04a 56px,#008 57px,#007 58px,#029 68px,#09c 82px,#0bd 92px,#0ad 109px,#019 123px)"></i><i style="width:2px;background:linear-gradient(#000 0px,#000 36px,#002 38px,#004 39px,#008 40px,#0ee 44px,#1ec 45px,#2d5 46px,#ae1 47px,#fd0 48px,#fc0 49px,#fe0 51px,#be1 52px,#3c4 53px,#1ec 54px,#08c 55px,#029 56px,#007 57px,#006 59px,#018 68px,#08c 83px,#0ad 94px,#09c 109px,#019 123px)"></i><i style="width:2px;background:linear-gradient(#000 0px,#000 41px,#003 45px,#008 47px,#06b 48px,#1ed 49px,#7d2 50px,#f80 51px,#f20 52px,#f10 54px,#f20 55px,#fb0 56px,#5d2 57px,#1ec 58px,#08c 59px,#029 60px,#008 61px,#008 63px,#039 72px,#0ad 82px,#0ce 87px,#0ce 107px,#0ad 113px,#039 123px)"></i><i style="width:2px;background:linear-gradient(#000 0px,#000 44px,#001 46px,#007 49px,#019 50px,#07c 51px,#1e9 52px,#fa0 53px,#f00 54px,#f00 61px,#f10 62px,#5d2 63px,#0fe 64px,#06b 65px,#029 66px,#019 67px,#03a 73px,#0bd 85px,#0de 95px,#0ce 109px,#029 123px)"></i><i style="width:2px;background:linear-gradient(#000 0px,#000 49px,#001 51px,#005 53px,#018 54px,#0fe 58px,#2d5 59px,#fb0 60px,#f00 61px,#f00 66px,#fc0 67px,#2d6 68px,#0ce 69px,#03a 70px,#008 71px,#008 72px,#06b 85px,#07b 94px,#07b 109px,#008 120px,#007 123px)"></i><i style="width:2px;background:linear-gradient(#000 0px,#000 63px,#002 65px,#029 66px,#0ff 67px,#7d2 68px,#f30 69px,#f00 70px,#f00 74px,#f70 75px,#5d2 76px,#1eb 77px,#0de 78px,#0bd 79px,#0ff 83px,#1ec 90px,#1eb 102px,#1ec 109px,#0ff 114px,#05a 123px)"></i><i style="width:2px;background:linear-gradient(#000 0px,#000 66px,#002 69px,#008 72px,#029 73px,#0ad 74px,#2d5 75px,#f30 76px,#f00 77px,#f00 84px,#f30 85px,#7d2 86px,#1ea 87px,#0ef 88px,#0bd 89px,#0bd 90px,#0bd 109px,#029 123px)"></i><i style="width:2px;background:linear-gradient(#000 0px,#000 73px,#001 76px,#006 78px,#019 79px,#06b 81px,#0bd 82px,#2d9 83px,#ef0 84px,#f00 85px,#f00 91px,#be1 92px,#2d7 93px,#1ed 94px,#0ff 95px,#0ff 109px,#0bd 115px,#03a 123px)"></i><i style="width:2px;background:linear-gradient(#000 0px,#000 83px,#003 86px,#018 88px,#05a 90px,#0ad 91px,#1ea 92px,#ae1 93px,#f40 94px,#f00 95px,#f00 99px,#f40 100px,#9e1 101px,#2d7 102px,#1ec 103px,#0fe 104px,#0ff 112px,#07c 123px)"></i><i style="width:2px;background:linear-gradient(#000 0px,#000 91px,#003 94px,#008 96px,#05a 98px,#0de 99px,#3c4 100px,#f10 101px,#f00 102px,#f00 109px,#f30 110px,#6d2 111px,#1eb 112px,#0de 113px,#0ad 114px,#09c 115px,#06b 123px)"></i><i style="width:1px;background:linear-gradient(#000 0px,#000 94px,#001 96px,#006 98px,#019 99px,#09c 102px,#0ef 103px,#1e9 104px,#5c3 105px,#ce1 106px,#ff0 108px,#fd0 109px,#ff0 110px,#8d2 111px,#2d6 112px,#0fd 113px,#08c 115px,#04a 123px)"></i></div><svg id="ov" width="1617" height="991" viewBox="0 0 1617 991" font-family="Liberation Sans, sans-serif" font-size="11" fill="#10151c">
<defs><linearGradient id="hg" x1="0" y1="0" x2="1" y2="0"><stop offset="0" stop-color="#efefef"/><stop offset=".55" stop-color="#f8f8f8"/><stop offset="1" stop-color="#ffffff"/></linearGradient><radialGradient id="hq" cx=".4" cy=".3" r=".8"><stop offset="0" stop-color="#f4fbff"/><stop offset=".6" stop-color="#cfe4f6"/><stop offset="1" stop-color="#9fc0e0"/></radialGradient><linearGradient id="pgf" x1="0" y1="0" x2="1" y2="0"><stop offset="0" stop-color="#c9d6f2"/><stop offset="1" stop-color="#f4f6fc"/></linearGradient></defs>
<rect x="0" y="0" width="1" height="991" fill="#c3d8f8"/><rect x="1" y="0" width="1" height="991" fill="#cce0fd"/><rect x="2" y="0" width="1" height="991" fill="#1b3556"/><rect x="3" y="0" width="1" height="991" fill="#e8f5ff"/><rect x="4" y="0" width="1" height="991" fill="#8c9db5"/><rect x="811" y="25" width="2" height="472" fill="#acbcd4"/><rect x="811" y="523" width="2" height="468" fill="#acbcd4"/><rect x="813" y="0" width="1" height="991" fill="#ffffff"/><rect x="814" y="0" width="1" height="991" fill="#8e98a8"/><rect x="5" y="497" width="808" height="1" fill="#ffffff"/><rect x="815" y="497" width="802" height="1" fill="#ffffff"/><rect x="5" y="0" width="808" height="1" fill="#9c9c9c"/><rect x="5" y="1" width="808" height="24" fill="url(#hg)"/><rect x="5" y="23" width="808" height="2" fill="#eaf1fa" opacity=".8"/><rect x="5" y="498" width="808" height="1" fill="#9c9c9c"/><rect x="5" y="499" width="808" height="24" fill="url(#hg)"/><rect x="5" y="521" width="808" height="2" fill="#eaf1fa" opacity=".8"/><rect x="815" y="0" width="802" height="1" fill="#9c9c9c"/><rect x="815" y="1" width="802" height="24" fill="url(#hg)"/><rect x="815" y="23" width="802" height="2" fill="#eaf1fa" opacity=".8"/><rect x="815" y="498" width="802" height="1" fill="#9c9c9c"/><rect x="815" y="499" width="802" height="24" fill="url(#hg)"/><rect x="815" y="521" width="802" height="2" fill="#eaf1fa" opacity=".8"/>
<text x="18.0" y="17.2" textLength="73.0" lengthAdjust="spacingAndGlyphs" fill="#000" font-size="12.5">Real Time FFT</text><path d="M106.0 11.5h6l-3 3z" fill="#000"/>
<text x="828.0" y="17.2" textLength="68.0" lengthAdjust="spacingAndGlyphs" fill="#000" font-size="12.5">Spectrogram</text><path d="M910.0 11.5h6l-3 3z" fill="#000"/>
<text x="18.0" y="515.2" textLength="149.5" lengthAdjust="spacingAndGlyphs" fill="#000" font-size="12.5">Channel Duty Cycle Vs Time</text><path d="M178.0 509.5h6l-3 3z" fill="#000"/>
<text x="828.0" y="515.2" textLength="93.0" lengthAdjust="spacingAndGlyphs" fill="#000" font-size="12.5">Spectrum Density</text><path d="M935.5 509.5h6l-3 3z" fill="#000"/>
<g transform="translate(707 5)"><rect x="0" y="0" width="15" height="14.5" rx="1" fill="#000"/><rect x="1" y="1" width="13" height="2" fill="#8fd0ff"/><path d="M1 8.5h1.5l.8-2.5l1 5l1-6l1 6.5l1-5l.9 3l.9-4.5l1 7l1-7l1 5l.8-2.5h1.2" fill="none" stroke="#ffef5a" stroke-width="1.3" stroke-linejoin="round"/></g>
<g transform="translate(739 5)"><rect x=".5" y=".5" width="14" height="14" fill="#eefafd" stroke="#2f7f8e" stroke-width="1"/><path d="M7.5 2v11M2 7.5h11" stroke="#000" stroke-width="1.2"/><path d="M7.5 1.2l1.8 2.3h-3.6zM7.5 13.8l1.8-2.3h-3.6zM1.2 7.5l2.3-1.8v3.6zM13.8 7.5l-2.3-1.8v3.6z" fill="#000"/><rect x="5.3" y="5.3" width="4.4" height="4.4" fill="#3d86b8" stroke="#0a1c2c" stroke-width="1"/></g>
<g transform="translate(1549 5)"><rect x=".5" y=".5" width="14" height="14" fill="#eefafd" stroke="#2f7f8e" stroke-width="1"/><path d="M7.5 2v11M2 7.5h11" stroke="#000" stroke-width="1.2"/><path d="M7.5 1.2l1.8 2.3h-3.6zM7.5 13.8l1.8-2.3h-3.6zM1.2 7.5l2.3-1.8v3.6zM13.8 7.5l-2.3-1.8v3.6z" fill="#000"/><rect x="5.3" y="5.3" width="4.4" height="4.4" fill="#3d86b8" stroke="#0a1c2c" stroke-width="1"/></g>
<g transform="translate(1549 503)"><rect x=".5" y=".5" width="14" height="14" fill="#eefafd" stroke="#2f7f8e" stroke-width="1"/><path d="M7.5 2v11M2 7.5h11" stroke="#000" stroke-width="1.2"/><path d="M7.5 1.2l1.8 2.3h-3.6zM7.5 13.8l1.8-2.3h-3.6zM1.2 7.5l2.3-1.8v3.6zM13.8 7.5l-2.3-1.8v3.6z" fill="#000"/><rect x="5.3" y="5.3" width="4.4" height="4.4" fill="#3d86b8" stroke="#0a1c2c" stroke-width="1"/></g>
<g transform="translate(764 6)"><path d="M.5 .5h6.5l4 4v9h-10.5z" fill="url(#pgf)" opacity=".75"/><path d="M7 .5v4h4" fill="#fff" stroke="#b8bcc8" stroke-width=".6"/><path d="M.5 .5v13h6" fill="none" stroke="#70747e" stroke-width="1"/><path d="M8 4.5h3.2v3" fill="none" stroke="#8a8e98" stroke-width=".9"/><g transform="translate(9.8 11.4)"><circle r="3.6" fill="none" stroke="#d9b94a" stroke-width="1.7" stroke-dasharray="1.5 1.33"/><circle r="2.9" fill="#f0d860" stroke="#c9a93a" stroke-width=".7"/><circle r="1.1" fill="#fff6b8" stroke="#d8b848" stroke-width=".5"/></g></g>
<g transform="translate(1574 6)"><path d="M.5 .5h6.5l4 4v9h-10.5z" fill="url(#pgf)" opacity=".75"/><path d="M7 .5v4h4" fill="#fff" stroke="#b8bcc8" stroke-width=".6"/><path d="M.5 .5v13h6" fill="none" stroke="#70747e" stroke-width="1"/><path d="M8 4.5h3.2v3" fill="none" stroke="#8a8e98" stroke-width=".9"/><g transform="translate(9.8 11.4)"><circle r="3.6" fill="none" stroke="#d9b94a" stroke-width="1.7" stroke-dasharray="1.5 1.33"/><circle r="2.9" fill="#f0d860" stroke="#c9a93a" stroke-width=".7"/><circle r="1.1" fill="#fff6b8" stroke="#d8b848" stroke-width=".5"/></g></g>
<g transform="translate(764 504)"><path d="M.5 .5h6.5l4 4v9h-10.5z" fill="url(#pgf)" opacity=".75"/><path d="M7 .5v4h4" fill="#fff" stroke="#b8bcc8" stroke-width=".6"/><path d="M.5 .5v13h6" fill="none" stroke="#70747e" stroke-width="1"/><path d="M8 4.5h3.2v3" fill="none" stroke="#8a8e98" stroke-width=".9"/><g transform="translate(9.8 11.4)"><circle r="3.6" fill="none" stroke="#d9b94a" stroke-width="1.7" stroke-dasharray="1.5 1.33"/><circle r="2.9" fill="#f0d860" stroke="#c9a93a" stroke-width=".7"/><circle r="1.1" fill="#fff6b8" stroke="#d8b848" stroke-width=".5"/></g></g>
<g transform="translate(1574 504)"><path d="M.5 .5h6.5l4 4v9h-10.5z" fill="url(#pgf)" opacity=".75"/><path d="M7 .5v4h4" fill="#fff" stroke="#b8bcc8" stroke-width=".6"/><path d="M.5 .5v13h6" fill="none" stroke="#70747e" stroke-width="1"/><path d="M8 4.5h3.2v3" fill="none" stroke="#8a8e98" stroke-width=".9"/><g transform="translate(9.8 11.4)"><circle r="3.6" fill="none" stroke="#d9b94a" stroke-width="1.7" stroke-dasharray="1.5 1.33"/><circle r="2.9" fill="#f0d860" stroke="#c9a93a" stroke-width=".7"/><circle r="1.1" fill="#fff6b8" stroke="#d8b848" stroke-width=".5"/></g></g>
<g transform="translate(795.0 13.0)"><circle r="6.5" fill="url(#hq)" stroke="#3c4e62" stroke-width="1.2"/><text x="0" y="4.2" text-anchor="middle" font-size="12" font-weight="bold" fill="#2f6fc0" stroke="#2f6fc0" stroke-width=".4">?</text></g>
<g transform="translate(1605.0 13.0)"><circle r="6.5" fill="url(#hq)" stroke="#3c4e62" stroke-width="1.2"/><text x="0" y="4.2" text-anchor="middle" font-size="12" font-weight="bold" fill="#2f6fc0" stroke="#2f6fc0" stroke-width=".4">?</text></g>
<g transform="translate(795.0 511.0)"><circle r="6.5" fill="url(#hq)" stroke="#3c4e62" stroke-width="1.2"/><text x="0" y="4.2" text-anchor="middle" font-size="12" font-weight="bold" fill="#2f6fc0" stroke="#2f6fc0" stroke-width=".4">?</text></g>
<g transform="translate(1605.0 511.0)"><circle r="6.5" fill="url(#hq)" stroke="#3c4e62" stroke-width="1.2"/><text x="0" y="4.2" text-anchor="middle" font-size="12" font-weight="bold" fill="#2f6fc0" stroke="#2f6fc0" stroke-width=".4">?</text></g>
<path d="M96 425.5H788M96 407.5H788M96 389.5H788M96 371.5H788M96 353.5H788M96 334.5H788M96 316.5H788M96 298.5H788M96 280.5H788M96 262.5H788M96 244.5H788M96 226.5H788M96 208.5H788M96 190.5H788M96 171.5H788M96 153.5H788M96 135.5H788M96 117.5H788M96 99.5H788" stroke="#dcdcdc" stroke-width="1" stroke-dasharray="1 1" fill="none" shape-rendering="crispEdges"/>
<text x="169.5" y="267.1" text-anchor="middle" font-weight="bold" fill="#fff" font-size="13">1</text>
<text x="357.5" y="267.1" text-anchor="middle" font-weight="bold" fill="#fff" font-size="13">6</text>
<text x="546.5" y="267.1" text-anchor="middle" font-weight="bold" fill="#fff" font-size="13">11</text>
<rect x="92" y="83" width="1" height="360" fill="#a6b4cc"/><rect x="93" y="82" width="1" height="361" fill="#969cb0"/><rect x="94" y="82" width="1" height="361" fill="#7c8298"/><rect x="788" y="83" width="1" height="361" fill="#b4bcc6"/><rect x="789" y="84" width="1" height="360" fill="#707c90"/><rect x="94" y="442" width="695" height="1" fill="#9c9c9c"/><rect x="95" y="443" width="695" height="1" fill="#6e7a90"/>
<text x="92.0" y="446.9" text-anchor="end">-120</text>
<text x="92.0" y="428.8" text-anchor="end">-115</text>
<text x="92.0" y="410.7" text-anchor="end">-110</text>
<text x="92.0" y="392.6" text-anchor="end">-105</text>
<text x="92.0" y="374.5" text-anchor="end">-100</text>
<text x="92.0" y="356.4" text-anchor="end">-95</text>
<text x="92.0" y="338.3" text-anchor="end">-90</text>
<text x="92.0" y="320.2" text-anchor="end">-85</text>
<text x="92.0" y="302.1" text-anchor="end">-80</text>
<text x="92.0" y="283.9" text-anchor="end">-75</text>
<text x="92.0" y="265.8" text-anchor="end">-70</text>
<text x="92.0" y="247.7" text-anchor="end">-65</text>
<text x="92.0" y="229.6" text-anchor="end">-60</text>
<text x="92.0" y="211.5" text-anchor="end">-55</text>
<text x="92.0" y="193.4" text-anchor="end">-50</text>
<text x="92.0" y="175.3" text-anchor="end">-45</text>
<text x="92.0" y="157.2" text-anchor="end">-40</text>
<text x="92.0" y="139.1" text-anchor="end">-35</text>
<text x="92.0" y="121.0" text-anchor="end">-30</text>
<text x="92.0" y="102.8" text-anchor="end">-25</text>
<text x="92.0" y="84.7" text-anchor="end">-20</text>
<text x="169.0" y="454.9" text-anchor="middle">1</text>
<text x="206.7" y="454.9" text-anchor="middle">2</text>
<text x="244.4" y="454.9" text-anchor="middle">3</text>
<text x="282.1" y="454.9" text-anchor="middle">4</text>
<text x="319.8" y="454.9" text-anchor="middle">5</text>
<text x="357.5" y="454.9" text-anchor="middle">6</text>
<text x="395.2" y="454.9" text-anchor="middle">7</text>
<text x="432.9" y="454.9" text-anchor="middle">8</text>
<text x="470.6" y="454.9" text-anchor="middle">9</text>
<text x="508.3" y="454.9" text-anchor="middle">10</text>
<text x="546.0" y="454.9" text-anchor="middle">11</text>
<text x="583.7" y="454.9" text-anchor="middle">12</text>
<text x="621.4" y="454.9" text-anchor="middle">13</text>
<text x="711.9" y="454.9" text-anchor="middle">14</text>
<text x="440.5" y="474.7" text-anchor="middle" textLength="40.5" lengthAdjust="spacingAndGlyphs">Channel</text>
<text x="47.3" y="265.7" text-anchor="middle" textLength="62.7" lengthAdjust="spacingAndGlyphs" transform="rotate(-90 47.3 261.8)">Power [dBm]</text>
<rect x="567.5" y="45.5" width="18" height="8" fill="#ffff00" stroke="#5a5a00" stroke-width="1"/><text x="589.5" y="53.2" textLength="39.3" lengthAdjust="spacingAndGlyphs" font-size="10">Max-Hold</text>
<rect x="640.5" y="45.5" width="18" height="8" fill="#ff0000" stroke="#8a2a10" stroke-width="1"/><text x="662.5" y="53.2" textLength="17.2" lengthAdjust="spacingAndGlyphs" font-size="10">Max</text>
<rect x="713.5" y="45.5" width="18" height="8" fill="#00c000" stroke="#0a7a0a" stroke-width="1"/><text x="735.2" y="53.2" textLength="16.0" lengthAdjust="spacingAndGlyphs" font-size="10">Avg</text>
<polyline points="99.9,439.5 101.1,436.5 102.3,432.5 103.5,427.5 104.8,424.5 106.0,421.5 107.2,419.5 108.4,416.5 109.6,415.5 110.9,411.5 112.1,411.5 113.3,411.5 114.5,411.5 115.7,411.5 117.0,409.5 118.2,411.5 119.4,409.5 120.6,409.5 121.8,409.5 123.1,409.5 124.3,411.5 125.5,411.5 126.7,411.5 127.9,411.5 129.2,411.5 130.4,409.5 131.6,409.5 132.8,409.5 134.0,411.5 135.3,406.5 136.5,407.5 137.7,404.5 138.9,404.5 140.1,404.5 141.4,402.5 142.6,400.5 143.8,398.5 145.0,398.5 146.2,398.5 147.5,398.5 148.7,398.5 149.9,398.5 151.1,398.5 152.3,398.5 153.6,398.5 154.8,397.5 156.0,398.5 157.2,398.5 158.4,398.5 159.7,398.5 160.9,400.5 162.1,402.5 163.3,402.5 164.5,402.5 165.8,402.5 167.0,402.5 168.2,402.5 169.4,402.5 170.6,404.5 171.9,402.5 173.1,402.5 174.3,402.5 175.5,402.5 176.7,400.5 178.0,398.5 179.2,398.5 180.4,397.5 181.6,395.5 182.8,395.5 184.1,395.5 185.3,395.5 186.5,395.5 187.7,395.5 188.9,395.5 190.2,395.5 191.4,395.5 192.6,395.5 193.8,397.5 195.0,397.5 196.3,398.5 197.5,398.5 198.7,398.5 199.9,398.5 201.1,398.5 202.4,400.5 203.6,400.5 204.8,402.5 206.0,402.5 207.2,402.5 208.5,402.5 209.7,400.5 210.9,402.5 212.1,402.5 213.3,402.5 214.6,400.5 215.8,400.5 217.0,398.5 218.2,397.5 219.4,395.5 220.7,395.5 221.9,395.5 223.1,395.5 224.3,395.5 225.5,395.5 226.8,393.5 228.0,395.5 229.2,395.5 230.4,395.5 231.6,395.5 232.9,395.5 234.1,397.5 235.3,397.5 236.5,398.5 237.7,398.5 239.0,398.5 240.2,398.5 241.4,398.5 242.6,398.5 243.8,398.5 245.1,400.5 246.3,400.5 247.5,400.5 248.7,400.5 249.9,400.5 251.2,398.5 252.4,398.5 253.6,395.5 254.8,395.5 256.0,395.5 257.3,393.5 258.5,393.5 259.7,393.5 260.9,393.5 262.1,391.5 263.4,393.5 264.6,391.5 265.8,391.5 267.0,391.5 268.2,391.5 269.5,393.5 270.7,391.5 271.9,393.5 273.1,395.5 274.3,395.5 275.6,397.5 276.8,397.5 278.0,397.5 279.2,397.5 280.4,397.5 281.7,398.5 282.9,397.5 284.1,397.5 285.3,397.5 286.5,397.5 287.8,398.5 289.0,397.5 290.2,397.5 291.4,397.5 292.6,395.5 293.9,393.5 295.1,393.5 296.3,391.5 297.5,391.5 298.7,391.5 300.0,391.5 301.2,391.5 302.4,391.5 303.6,391.5 304.8,389.5 306.1,393.5 307.3,395.5 308.5,397.5 309.7,398.5 310.9,398.5 312.2,398.5 313.4,398.5 314.6,398.5 315.8,398.5 317.0,397.5 318.3,398.5 319.5,398.5 320.7,398.5 321.9,398.5 323.1,398.5 324.4,398.5 325.6,397.5 326.8,395.5 328.0,393.5 329.2,393.5 330.5,393.5 331.7,393.5 332.9,393.5 334.1,393.5 335.3,393.5 336.6,393.5 337.8,395.5 339.0,393.5 340.2,395.5 341.4,393.5 342.7,393.5 343.9,395.5 345.1,393.5 346.3,397.5 347.5,398.5 348.8,400.5 350.0,402.5 351.2,402.5 352.4,402.5 353.6,402.5 354.9,402.5 356.1,402.5 357.3,402.5 358.5,402.5 359.7,402.5 361.0,402.5 362.2,402.5 363.4,402.5 364.6,402.5 365.8,402.5 367.1,402.5 368.3,402.5 369.5,400.5 370.7,402.5 371.9,402.5 373.2,400.5 374.4,400.5 375.6,400.5 376.8,400.5 378.0,400.5 379.3,400.5 380.5,402.5 381.7,402.5 382.9,404.5 384.1,406.5 385.4,407.5 386.6,407.5 387.8,407.5 389.0,407.5 390.2,407.5 391.5,407.5 392.7,407.5 393.9,407.5 395.1,407.5 396.3,407.5 397.6,407.5 398.8,407.5 400.0,407.5 401.2,407.5 402.4,407.5 403.7,407.5 404.9,407.5 406.1,407.5 407.3,407.5 408.5,407.5 409.8,407.5 411.0,406.5 412.2,404.5 413.4,404.5 414.6,406.5 415.9,406.5 417.1,407.5 418.3,407.5 419.5,407.5 420.7,407.5 422.0,409.5 423.2,409.5 424.4,409.5 425.6,409.5 426.8,409.5 428.1,409.5 429.3,409.5 430.5,409.5 431.7,409.5 432.9,409.5 434.2,409.5 435.4,409.5 436.6,409.5 437.8,409.5 439.0,409.5 440.3,409.5 441.5,407.5 442.7,406.5 443.9,404.5 445.1,402.5 446.4,402.5 447.6,402.5 448.8,402.5 450.0,402.5 451.2,402.5 452.5,402.5 453.7,402.5 454.9,402.5 456.1,402.5 457.3,402.5 458.6,404.5 459.8,404.5 461.0,406.5 462.2,407.5 463.4,407.5 464.7,407.5 465.9,407.5 467.1,407.5 468.3,407.5 469.5,407.5 470.8,407.5 472.0,407.5 473.2,407.5 474.4,407.5 475.6,407.5 476.9,406.5 478.1,404.5 479.3,404.5 480.5,404.5 481.7,404.5 483.0,404.5 484.2,402.5 485.4,402.5 486.6,402.5 487.8,404.5 489.1,404.5 490.3,404.5 491.5,402.5 492.7,404.5 493.9,404.5 495.2,404.5 496.4,404.5 497.6,404.5 498.8,404.5 500.0,406.5 501.3,406.5 502.5,407.5 503.7,407.5 504.9,407.5 506.1,407.5 507.4,407.5 508.6,407.5 509.8,407.5 511.0,407.5 512.2,409.5 513.5,407.5 514.7,407.5 515.9,407.5 517.1,407.5 518.3,406.5 519.6,404.5 520.8,404.5 522.0,404.5 523.2,404.5 524.4,404.5 525.7,404.5 526.9,404.5 528.1,404.5 529.3,404.5 530.5,404.5 531.8,404.5 533.0,404.5 534.2,404.5 535.4,406.5 536.6,406.5 537.9,407.5 539.1,407.5 540.3,407.5 541.5,407.5 542.7,407.5 544.0,407.5 545.2,407.5 546.4,407.5 547.6,407.5 548.8,407.5 550.1,407.5 551.3,407.5 552.5,407.5 553.7,406.5 554.9,404.5 556.2,404.5 557.4,404.5 558.6,404.5 559.8,404.5 561.0,404.5 562.3,404.5 563.5,404.5 564.7,404.5 565.9,404.5 567.1,404.5 568.4,404.5 569.6,404.5 570.8,404.5 572.0,404.5 573.2,404.5 574.5,404.5 575.7,406.5 576.9,407.5 578.1,409.5 579.3,409.5 580.6,409.5 581.8,409.5 583.0,409.5 584.2,409.5 585.4,409.5 586.7,409.5 587.9,409.5 589.1,409.5 590.3,409.5 591.5,407.5 592.8,407.5 594.0,404.5 595.2,404.5 596.4,406.5 597.6,404.5 598.9,404.5 600.1,404.5 601.3,406.5 602.5,404.5 603.7,406.5 605.0,404.5 606.2,404.5 607.4,404.5 608.6,404.5 609.8,406.5 611.1,409.5 612.3,411.5 613.5,413.5 614.7,415.5 615.9,415.5 617.2,415.5 618.4,415.5 619.6,415.5 620.8,415.5 622.0,415.5 623.3,415.5 624.5,416.5 625.7,416.5 626.9,413.5 628.1,413.5 629.4,413.5 630.6,413.5 631.8,411.5 633.0,411.5 634.2,413.5 635.5,413.5 636.7,411.5 637.9,411.5 639.1,411.5 640.3,411.5 641.6,413.5 642.8,413.5 644.0,411.5 645.2,413.5 646.4,415.5 647.7,416.5 648.9,416.5 650.1,416.5 651.3,415.5 652.5,416.5 653.8,415.5 655.0,416.5 656.2,416.5 657.4,415.5 658.6,416.5 659.9,416.5 661.1,415.5 662.3,416.5 663.5,415.5 664.7,415.5 666.0,416.5 667.2,416.5 668.4,418.5 669.6,416.5 670.8,416.5 672.1,416.5 673.3,416.5 674.5,416.5 675.7,416.5 676.9,416.5 678.2,416.5 679.4,413.5 680.6,413.5 681.8,413.5 683.0,413.5 684.3,411.5 685.5,413.5 686.7,413.5 687.9,416.5 689.1,418.5 690.4,422.5 691.6,422.5 692.8,422.5 694.0,422.5 695.2,424.5 696.5,422.5 697.7,422.5 698.9,422.5 700.1,427.5 701.3,424.5 702.6,425.5 703.8,425.5 705.0,427.5 706.2,429.5 707.4,429.5 708.7,431.5 709.9,429.5 711.1,425.5 712.3,424.5 713.5,425.5 714.8,425.5 716.0,425.5 717.2,424.5 718.4,425.5 719.6,424.5 720.9,424.5 722.1,424.5 723.3,425.5 724.5,424.5 725.7,424.5 727.0,422.5 728.2,418.5 729.4,420.5 730.6,418.5 731.8,420.5 733.1,420.5 734.3,420.5 735.5,420.5 736.7,420.5 737.9,420.5 739.2,420.5 740.4,420.5 741.6,420.5 742.8,420.5 744.0,420.5 745.3,420.5 746.5,422.5 747.7,424.5 748.9,424.5 750.1,424.5 751.4,424.5 752.6,424.5 753.8,424.5 755.0,422.5 756.2,424.5 757.5,427.5 758.7,422.5 759.9,424.5 761.1,424.5 762.3,424.5 763.6,425.5 764.8,424.5 766.0,422.5 767.2,422.5 768.4,422.5 769.7,424.5 770.9,425.5 772.1,425.5 773.3,430.5 774.5,433.5 775.8,435.5 777.0,438.5 778.2,441.5 779.4,442.5" fill="none" stroke="#1ea31e" stroke-width="1" shape-rendering="crispEdges"/><polyline points="95.0,427.5 96.2,419.5 97.4,411.5 98.7,404.5 99.9,399.5 101.1,393.5 102.3,388.5 103.5,384.5 104.8,379.5 106.0,375.5 107.2,372.5 108.4,369.5 109.6,366.5 110.9,366.5 112.1,368.5 113.3,368.5 114.5,364.5 115.7,368.5 117.0,368.5 118.2,366.5 119.4,369.5 120.6,368.5 121.8,366.5 123.1,366.5 124.3,368.5 125.5,366.5 126.7,364.5 127.9,368.5 129.2,366.5 130.4,366.5 131.6,364.5 132.8,364.5 134.0,364.5 135.3,364.5 136.5,368.5 137.7,364.5 138.9,362.5 140.1,360.5 141.4,360.5 142.6,360.5 143.8,364.5 145.0,362.5 146.2,360.5 147.5,362.5 148.7,360.5 149.9,360.5 151.1,362.5 152.3,360.5 153.6,358.5 154.8,360.5 156.0,360.5 157.2,362.5 158.4,360.5 159.7,362.5 160.9,360.5 162.1,360.5 163.3,362.5 164.5,366.5 165.8,364.5 167.0,364.5 168.2,364.5 169.4,366.5 170.6,364.5 171.9,362.5 173.1,362.5 174.3,362.5 175.5,364.5 176.7,368.5 178.0,362.5 179.2,360.5 180.4,360.5 181.6,360.5 182.8,360.5 184.1,360.5 185.3,362.5 186.5,360.5 187.7,358.5 188.9,358.5 190.2,360.5 191.4,362.5 192.6,362.5 193.8,364.5 195.0,366.5 196.3,369.5 197.5,366.5 198.7,366.5 199.9,366.5 201.1,368.5 202.4,366.5 203.6,366.5 204.8,368.5 206.0,368.5 207.2,368.5 208.5,369.5 209.7,368.5 210.9,366.5 212.1,369.5 213.3,368.5 214.6,369.5 215.8,368.5 217.0,369.5 218.2,369.5 219.4,369.5 220.7,366.5 221.9,366.5 223.1,366.5 224.3,366.5 225.5,368.5 226.8,368.5 228.0,369.5 229.2,369.5 230.4,373.5 231.6,373.5 232.9,371.5 234.1,369.5 235.3,369.5 236.5,371.5 237.7,371.5 239.0,369.5 240.2,369.5 241.4,368.5 242.6,369.5 243.8,371.5 245.1,369.5 246.3,368.5 247.5,368.5 248.7,366.5 249.9,366.5 251.2,368.5 252.4,369.5 253.6,368.5 254.8,369.5 256.0,368.5 257.3,368.5 258.5,368.5 259.7,366.5 260.9,366.5 262.1,366.5 263.4,366.5 264.6,368.5 265.8,366.5 267.0,366.5 268.2,368.5 269.5,368.5 270.7,368.5 271.9,366.5 273.1,368.5 274.3,369.5 275.6,368.5 276.8,369.5 278.0,369.5 279.2,373.5 280.4,377.5 281.7,371.5 282.9,369.5 284.1,366.5 285.3,366.5 286.5,366.5 287.8,368.5 289.0,364.5 290.2,369.5 291.4,368.5 292.6,368.5 293.9,369.5 295.1,368.5 296.3,368.5 297.5,368.5 298.7,366.5 300.0,366.5 301.2,366.5 302.4,368.5 303.6,366.5 304.8,366.5 306.1,366.5 307.3,366.5 308.5,369.5 309.7,368.5 310.9,366.5 312.2,368.5 313.4,368.5 314.6,368.5 315.8,369.5 317.0,369.5 318.3,369.5 319.5,369.5 320.7,368.5 321.9,368.5 323.1,368.5 324.4,368.5 325.6,369.5 326.8,368.5 328.0,368.5 329.2,371.5 330.5,368.5 331.7,368.5 332.9,366.5 334.1,366.5 335.3,366.5 336.6,366.5 337.8,368.5 339.0,366.5 340.2,366.5 341.4,366.5 342.7,368.5 343.9,368.5 345.1,369.5 346.3,373.5 347.5,368.5 348.8,371.5 350.0,371.5 351.2,371.5 352.4,371.5 353.6,373.5 354.9,375.5 356.1,375.5 357.3,373.5 358.5,371.5 359.7,371.5 361.0,371.5 362.2,373.5 363.4,371.5 364.6,371.5 365.8,369.5 367.1,369.5 368.3,369.5 369.5,371.5 370.7,369.5 371.9,369.5 373.2,369.5 374.4,369.5 375.6,368.5 376.8,368.5 378.0,369.5 379.3,369.5 380.5,369.5 381.7,373.5 382.9,371.5 384.1,373.5 385.4,369.5 386.6,369.5 387.8,369.5 389.0,371.5 390.2,369.5 391.5,371.5 392.7,371.5 393.9,369.5 395.1,369.5 396.3,369.5 397.6,371.5 398.8,371.5 400.0,371.5 401.2,373.5 402.4,371.5 403.7,371.5 404.9,375.5 406.1,375.5 407.3,369.5 408.5,371.5 409.8,373.5 411.0,369.5 412.2,369.5 413.4,371.5 414.6,373.5 415.9,373.5 417.1,373.5 418.3,373.5 419.5,373.5 420.7,371.5 422.0,369.5 423.2,371.5 424.4,371.5 425.6,375.5 426.8,373.5 428.1,373.5 429.3,377.5 430.5,375.5 431.7,373.5 432.9,375.5 434.2,377.5 435.4,375.5 436.6,371.5 437.8,371.5 439.0,373.5 440.3,373.5 441.5,371.5 442.7,371.5 443.9,369.5 445.1,369.5 446.4,373.5 447.6,373.5 448.8,373.5 450.0,373.5 451.2,371.5 452.5,373.5 453.7,373.5 454.9,373.5 456.1,373.5 457.3,371.5 458.6,371.5 459.8,371.5 461.0,375.5 462.2,371.5 463.4,371.5 464.7,373.5 465.9,373.5 467.1,375.5 468.3,375.5 469.5,371.5 470.8,373.5 472.0,373.5 473.2,371.5 474.4,373.5 475.6,373.5 476.9,375.5 478.1,373.5 479.3,371.5 480.5,373.5 481.7,375.5 483.0,375.5 484.2,371.5 485.4,375.5 486.6,375.5 487.8,373.5 489.1,373.5 490.3,375.5 491.5,373.5 492.7,373.5 493.9,371.5 495.2,373.5 496.4,371.5 497.6,371.5 498.8,373.5 500.0,371.5 501.3,373.5 502.5,371.5 503.7,371.5 504.9,373.5 506.1,375.5 507.4,375.5 508.6,371.5 509.8,371.5 511.0,371.5 512.2,371.5 513.5,371.5 514.7,369.5 515.9,371.5 517.1,373.5 518.3,369.5 519.6,371.5 520.8,373.5 522.0,371.5 523.2,371.5 524.4,371.5 525.7,371.5 526.9,373.5 528.1,373.5 529.3,373.5 530.5,373.5 531.8,371.5 533.0,369.5 534.2,371.5 535.4,369.5 536.6,375.5 537.9,375.5 539.1,373.5 540.3,371.5 541.5,373.5 542.7,373.5 544.0,371.5 545.2,373.5 546.4,373.5 547.6,373.5 548.8,375.5 550.1,373.5 551.3,373.5 552.5,368.5 553.7,369.5 554.9,369.5 556.2,371.5 557.4,371.5 558.6,369.5 559.8,373.5 561.0,373.5 562.3,375.5 563.5,375.5 564.7,377.5 565.9,371.5 567.1,373.5 568.4,371.5 569.6,371.5 570.8,373.5 572.0,373.5 573.2,369.5 574.5,373.5 575.7,373.5 576.9,373.5 578.1,373.5 579.3,371.5 580.6,371.5 581.8,371.5 583.0,371.5 584.2,375.5 585.4,371.5 586.7,373.5 587.9,373.5 589.1,371.5 590.3,373.5 591.5,375.5 592.8,371.5 594.0,373.5 595.2,373.5 596.4,375.5 597.6,375.5 598.9,375.5 600.1,371.5 601.3,371.5 602.5,368.5 603.7,369.5 605.0,369.5 606.2,371.5 607.4,373.5 608.6,375.5 609.8,373.5 611.1,371.5 612.3,375.5 613.5,375.5 614.7,373.5 615.9,373.5 617.2,373.5 618.4,373.5 619.6,373.5 620.8,371.5 622.0,373.5 623.3,375.5 624.5,373.5 625.7,377.5 626.9,375.5 628.1,371.5 629.4,377.5 630.6,375.5 631.8,375.5 633.0,375.5 634.2,373.5 635.5,375.5 636.7,375.5 637.9,373.5 639.1,373.5 640.3,373.5 641.6,373.5 642.8,373.5 644.0,375.5 645.2,373.5 646.4,375.5 647.7,377.5 648.9,373.5 650.1,373.5 651.3,373.5 652.5,373.5 653.8,373.5 655.0,375.5 656.2,375.5 657.4,375.5 658.6,371.5 659.9,373.5 661.1,373.5 662.3,375.5 663.5,373.5 664.7,373.5 666.0,373.5 667.2,373.5 668.4,373.5 669.6,373.5 670.8,375.5 672.1,375.5 673.3,373.5 674.5,373.5 675.7,373.5 676.9,373.5 678.2,373.5 679.4,373.5 680.6,371.5 681.8,375.5 683.0,373.5 684.3,373.5 685.5,373.5 686.7,371.5 687.9,371.5 689.1,373.5 690.4,373.5 691.6,377.5 692.8,373.5 694.0,373.5 695.2,375.5 696.5,375.5 697.7,373.5 698.9,373.5 700.1,375.5 701.3,378.5 702.6,378.5 703.8,380.5 705.0,382.5 706.2,382.5 707.4,387.5 708.7,387.5 709.9,384.5 711.1,380.5 712.3,378.5 713.5,377.5 714.8,377.5 716.0,377.5 717.2,375.5 718.4,373.5 719.6,375.5 720.9,371.5 722.1,373.5 723.3,377.5 724.5,377.5 725.7,375.5 727.0,373.5 728.2,371.5 729.4,371.5 730.6,373.5 731.8,371.5 733.1,371.5 734.3,373.5 735.5,371.5 736.7,373.5 737.9,375.5 739.2,375.5 740.4,373.5 741.6,371.5 742.8,371.5 744.0,373.5 745.3,373.5 746.5,375.5 747.7,375.5 748.9,375.5 750.1,373.5 751.4,373.5 752.6,375.5 753.8,375.5 755.0,373.5 756.2,373.5 757.5,375.5 758.7,373.5 759.9,375.5 761.1,375.5 762.3,373.5 763.6,373.5 764.8,373.5 766.0,373.5 767.2,373.5 768.4,373.5 769.7,375.5 770.9,375.5 772.1,377.5 773.3,378.5 774.5,380.5 775.8,382.5 777.0,385.5 778.2,388.5 779.4,391.5 780.6,396.5 781.9,401.5 783.1,408.5 784.3,414.5 785.5,421.5 786.7,428.5" fill="none" stroke="#ee1010" stroke-width="1" shape-rendering="crispEdges"/><polyline points="95.2,419.5 96.4,411.5 97.7,404.5 98.9,399.5 100.1,393.5 101.3,388.5 102.5,384.5 103.8,379.5 105.0,375.5 106.2,372.5 107.4,368.5 108.6,365.5 110.9,364.5 112.1,364.5 113.3,364.5 114.5,364.5 115.7,364.5 117.0,366.5 118.2,364.5 119.4,364.5 120.6,364.5 121.8,364.5 123.1,364.5 124.3,364.5 125.5,364.5 126.7,362.5 127.9,364.5 129.2,366.5 130.4,364.5 131.6,362.5 132.8,364.5 134.0,362.5 135.3,362.5 136.5,360.5 137.7,358.5 138.9,360.5 140.1,358.5 141.4,358.5 142.6,360.5 143.8,360.5 145.0,360.5 146.2,358.5 147.5,358.5 148.7,358.5 149.9,360.5 151.1,360.5 152.3,357.5 153.6,358.5 154.8,358.5 156.0,358.5 157.2,360.5 158.4,358.5 159.7,358.5 160.9,358.5 162.1,358.5 163.3,360.5 164.5,362.5 165.8,362.5 167.0,362.5 168.2,362.5 169.4,362.5 170.6,360.5 171.9,360.5 173.1,360.5 174.3,360.5 175.5,362.5 176.7,360.5 178.0,360.5 179.2,358.5 180.4,358.5 181.6,358.5 182.8,358.5 184.1,360.5 185.3,357.5 186.5,358.5 187.7,358.5 188.9,358.5 190.2,358.5 191.4,357.5 192.6,358.5 193.8,360.5 195.0,364.5 196.3,364.5 197.5,362.5 198.7,364.5 199.9,366.5 201.1,362.5 202.4,366.5 203.6,364.5 204.8,366.5 206.0,362.5 207.2,364.5 208.5,368.5 209.7,368.5 210.9,366.5 212.1,368.5 213.3,368.5 214.6,360.5 215.8,366.5 217.0,368.5 218.2,360.5 219.4,360.5 220.7,358.5 221.9,355.5 223.1,351.5 224.3,358.5 225.5,353.5 226.8,362.5 228.0,362.5 229.2,362.5 230.4,358.5 231.6,362.5 232.9,360.5 234.1,362.5 235.3,351.5 236.5,358.5 237.7,358.5 239.0,362.5 240.2,353.5 241.4,362.5 242.6,357.5 243.8,357.5 245.1,355.5 246.3,358.5 247.5,357.5 248.7,358.5 249.9,355.5 251.2,357.5 252.4,358.5 253.6,353.5 254.8,348.5 256.0,364.5 257.3,355.5 258.5,358.5 259.7,344.5 260.9,358.5 262.1,360.5 263.4,349.5 264.6,360.5 265.8,351.5 267.0,355.5 268.2,351.5 269.5,351.5 270.7,357.5 271.9,355.5 273.1,357.5 274.3,349.5 275.6,353.5 276.8,362.5 278.0,357.5 279.2,366.5 280.4,360.5 281.7,358.5 282.9,355.5 284.1,349.5 285.3,357.5 286.5,357.5 287.8,355.5 289.0,353.5 290.2,358.5 291.4,353.5 292.6,349.5 293.9,358.5 295.1,346.5 296.3,364.5 297.5,351.5 298.7,351.5 300.0,364.5 301.2,355.5 302.4,360.5 303.6,351.5 304.8,351.5 306.1,358.5 307.3,353.5 308.5,349.5 309.7,358.5 310.9,364.5 312.2,366.5 313.4,366.5 314.6,366.5 315.8,366.5 317.0,368.5 318.3,368.5 319.5,366.5 320.7,366.5 321.9,364.5 323.1,366.5 324.4,364.5 325.6,366.5 326.8,364.5 328.0,366.5 329.2,368.5 330.5,364.5 331.7,362.5 332.9,362.5 334.1,364.5 335.3,364.5 336.6,366.5 337.8,366.5 339.0,364.5 340.2,364.5 341.4,362.5 342.7,362.5 343.9,364.5 345.1,360.5 346.3,366.5 347.5,364.5 348.8,364.5 350.0,364.5 351.2,369.5 352.4,369.5 353.6,369.5 354.9,371.5 356.1,366.5 357.3,371.5 358.5,368.5 359.7,369.5 361.0,369.5 362.2,369.5 363.4,368.5 364.6,369.5 365.8,368.5 367.1,368.5 368.3,366.5 369.5,364.5 370.7,366.5 371.9,366.5 373.2,368.5 374.4,364.5 375.6,368.5 376.8,364.5 378.0,364.5 379.3,368.5 380.5,369.5 381.7,362.5 382.9,368.5 384.1,364.5 385.4,369.5 386.6,369.5 387.8,369.5 389.0,369.5 390.2,368.5 391.5,371.5 392.7,369.5 393.9,368.5 395.1,369.5 396.3,368.5 397.6,369.5 398.8,369.5 400.0,369.5 401.2,369.5 402.4,369.5 403.7,369.5 404.9,371.5 406.1,369.5 407.3,369.5 408.5,369.5 409.8,368.5 411.0,368.5 412.2,369.5 413.4,369.5 414.6,369.5 415.9,368.5 417.1,366.5 418.3,371.5 419.5,368.5 420.7,369.5 422.0,368.5 423.2,371.5 424.4,371.5 425.6,371.5 426.8,371.5 428.1,369.5 429.3,371.5 430.5,371.5 431.7,369.5 432.9,369.5 434.2,369.5 435.4,371.5 436.6,369.5 437.8,371.5 439.0,371.5 440.3,371.5 441.5,369.5 442.7,368.5 443.9,368.5 445.1,369.5 446.4,369.5 447.6,371.5 448.8,368.5 450.0,368.5 451.2,369.5 452.5,369.5 453.7,369.5 454.9,371.5 456.1,368.5 457.3,371.5 458.6,369.5 459.8,371.5 461.0,371.5 462.2,369.5 463.4,368.5 464.7,369.5 465.9,371.5 467.1,368.5 468.3,371.5 469.5,369.5 470.8,371.5 472.0,369.5 473.2,368.5 474.4,369.5 475.6,369.5 476.9,371.5 478.1,369.5 479.3,369.5 480.5,371.5 481.7,368.5 483.0,369.5 484.2,369.5 485.4,369.5 486.6,371.5 487.8,371.5 489.1,369.5 490.3,368.5 491.5,369.5 492.7,371.5 493.9,369.5 495.2,371.5 496.4,369.5 497.6,368.5 498.8,368.5 500.0,369.5 501.3,371.5 502.5,369.5 503.7,369.5 504.9,371.5 506.1,373.5 507.4,371.5 508.6,368.5 509.8,371.5 511.0,369.5 512.2,371.5 513.5,369.5 514.7,368.5 515.9,369.5 517.1,369.5 518.3,369.5 519.6,369.5 520.8,371.5 522.0,371.5 523.2,368.5 524.4,366.5 525.7,368.5 526.9,369.5 528.1,369.5 529.3,366.5 530.5,371.5 531.8,368.5 533.0,369.5 534.2,369.5 535.4,368.5 536.6,373.5 537.9,373.5 539.1,369.5 540.3,369.5 541.5,371.5 542.7,371.5 544.0,369.5 545.2,371.5 546.4,371.5 547.6,371.5 548.8,373.5 550.1,371.5 551.3,371.5 552.5,368.5 553.7,368.5 554.9,368.5 556.2,369.5 557.4,368.5 558.6,369.5 559.8,371.5 561.0,369.5 562.3,369.5 563.5,369.5 564.7,369.5 565.9,371.5 567.1,371.5 568.4,371.5 569.6,371.5 570.8,368.5 572.0,369.5 573.2,368.5 574.5,371.5 575.7,369.5 576.9,369.5 578.1,371.5 579.3,369.5 580.6,369.5 581.8,369.5 583.0,369.5 584.2,371.5 585.4,369.5 586.7,369.5 587.9,371.5 589.1,369.5 590.3,368.5 591.5,368.5 592.8,371.5 594.0,369.5 595.2,369.5 596.4,371.5 597.6,371.5 598.9,369.5 600.1,369.5 601.3,368.5 602.5,366.5 603.7,368.5 605.0,368.5 606.2,369.5 607.4,371.5 608.6,369.5 609.8,373.5 611.1,369.5 612.3,369.5 613.5,371.5 614.7,369.5 615.9,371.5 617.2,373.5 618.4,371.5 619.6,371.5 620.8,371.5 622.0,373.5 623.3,371.5 624.5,368.5 625.7,368.5 626.9,373.5 628.1,371.5 629.4,371.5 630.6,371.5 631.8,369.5 633.0,373.5 634.2,369.5 635.5,371.5 636.7,371.5 637.9,371.5 639.1,371.5 640.3,369.5 641.6,369.5 642.8,371.5 644.0,371.5 645.2,373.5 646.4,373.5 647.7,371.5 648.9,371.5 650.1,371.5 651.3,373.5 652.5,373.5 653.8,371.5 655.0,373.5 656.2,373.5 657.4,375.5 658.6,371.5 659.9,373.5 661.1,373.5 662.3,373.5 663.5,373.5 664.7,373.5 666.0,371.5 667.2,373.5 668.4,371.5 669.6,373.5 670.8,371.5 672.1,371.5 673.3,371.5 674.5,371.5 675.7,371.5 676.9,373.5 678.2,373.5 679.4,371.5 680.6,371.5 681.8,373.5 683.0,373.5 684.3,371.5 685.5,369.5 686.7,369.5 687.9,369.5 689.1,371.5 690.4,371.5 691.6,371.5 692.8,371.5 694.0,371.5 695.2,373.5 696.5,373.5 697.7,371.5 698.9,373.5 700.1,375.5 701.3,377.5 702.6,378.5 703.8,378.5 705.0,380.5 706.2,382.5 707.4,384.5 708.7,384.5 709.9,382.5 711.1,378.5 712.3,377.5 713.5,375.5 714.8,375.5 716.0,375.5 717.2,375.5 718.4,373.5 719.6,373.5 720.9,371.5 722.1,371.5 723.3,371.5 724.5,373.5 725.7,373.5 727.0,371.5 728.2,371.5 729.4,369.5 730.6,371.5 731.8,371.5 733.1,371.5 734.3,371.5 735.5,371.5 736.7,371.5 737.9,373.5 739.2,373.5 740.4,373.5 741.6,371.5 742.8,369.5 744.0,371.5 745.3,373.5 746.5,373.5 747.7,373.5 748.9,373.5 750.1,371.5 751.4,373.5 752.6,373.5 753.8,373.5 755.0,371.5 756.2,371.5 757.5,373.5 758.7,371.5 759.9,373.5 761.1,373.5 762.3,373.5 763.6,371.5 764.8,371.5 766.0,373.5 767.2,371.5 768.4,371.5 769.7,375.5 770.9,375.5 773.1,376.5 774.3,378.5 775.5,380.5 776.8,382.5 778.0,384.5 779.2,387.5 780.4,391.5 781.6,396.5 782.9,401.5 784.1,407.5 785.3,414.5 786.5,421.5" fill="none" stroke="#ffff50" stroke-width="1" shape-rendering="crispEdges"/>
<rect x="894" y="108" width="1" height="335" fill="#a6b4cc"/><rect x="895" y="107" width="1" height="336" fill="#969cb0"/><rect x="896" y="107" width="1" height="336" fill="#7c8298"/><rect x="1597" y="108" width="1" height="336" fill="#b4bcc6"/><rect x="1598" y="109" width="1" height="335" fill="#707c90"/><rect x="896" y="442" width="702" height="1" fill="#9c9c9c"/><rect x="897" y="443" width="702" height="1" fill="#6e7a90"/>
<text x="892.0" y="448.1" text-anchor="end">0</text>
<text x="892.0" y="428.3" text-anchor="end">20</text>
<text x="892.0" y="408.6" text-anchor="end">40</text>
<text x="892.0" y="388.8" text-anchor="end">60</text>
<text x="892.0" y="369.0" text-anchor="end">80</text>
<text x="892.0" y="349.2" text-anchor="end">100</text>
<text x="892.0" y="329.4" text-anchor="end">120</text>
<text x="892.0" y="309.6" text-anchor="end">140</text>
<text x="892.0" y="289.8" text-anchor="end">160</text>
<text x="892.0" y="270.0" text-anchor="end">180</text>
<text x="892.0" y="250.3" text-anchor="end">200</text>
<text x="892.0" y="230.5" text-anchor="end">220</text>
<text x="892.0" y="210.7" text-anchor="end">240</text>
<text x="892.0" y="190.9" text-anchor="end">260</text>
<text x="892.0" y="171.1" text-anchor="end">280</text>
<text x="892.0" y="151.3" text-anchor="end">300</text>
<text x="892.0" y="131.5" text-anchor="end">320</text>
<text x="892.0" y="111.7" text-anchor="end">340</text>
<text x="971.0" y="454.9" text-anchor="middle">1</text>
<text x="1009.1" y="454.9" text-anchor="middle">2</text>
<text x="1047.2" y="454.9" text-anchor="middle">3</text>
<text x="1085.3" y="454.9" text-anchor="middle">4</text>
<text x="1123.4" y="454.9" text-anchor="middle">5</text>
<text x="1161.5" y="454.9" text-anchor="middle">6</text>
<text x="1199.6" y="454.9" text-anchor="middle">7</text>
<text x="1237.7" y="454.9" text-anchor="middle">8</text>
<text x="1275.8" y="454.9" text-anchor="middle">9</text>
<text x="1313.9" y="454.9" text-anchor="middle">10</text>
<text x="1352.0" y="454.9" text-anchor="middle">11</text>
<text x="1390.1" y="454.9" text-anchor="middle">12</text>
<text x="1428.2" y="454.9" text-anchor="middle">13</text>
<text x="1519.6" y="454.9" text-anchor="middle">14</text>
<text x="1246.3" y="474.9" text-anchor="middle" textLength="40.5" lengthAdjust="spacingAndGlyphs">Channel</text>
<text x="857.0" y="278.9" text-anchor="middle" textLength="107.0" lengthAdjust="spacingAndGlyphs" transform="rotate(-90 857.0 275.0)">Sweep Cycle [Sweep]</text>
<text x="841.0" y="49.7" textLength="79.0" lengthAdjust="spacingAndGlyphs">View Type: Max</text>
<rect x="1293.0" y="71" width="8.2" height="12" fill="#00008b"/><rect x="1301.0" y="71" width="8.2" height="12" fill="#00209a"/><rect x="1309.0" y="71" width="8.2" height="12" fill="#0040a8"/><rect x="1317.0" y="71" width="8.2" height="12" fill="#0060b6"/><rect x="1325.0" y="71" width="8.2" height="12" fill="#0080c5"/><rect x="1333.0" y="71" width="8.2" height="12" fill="#009fd4"/><rect x="1341.0" y="71" width="8.2" height="12" fill="#00bfe2"/><rect x="1349.0" y="71" width="8.2" height="12" fill="#00dff0"/><rect x="1357.0" y="71" width="8.2" height="12" fill="#00ffff"/><rect x="1365.0" y="71" width="8.2" height="12" fill="#06f9e8"/><rect x="1373.0" y="71" width="8.2" height="12" fill="#0bf4d1"/><rect x="1381.0" y="71" width="8.2" height="12" fill="#11eebb"/><rect x="1389.0" y="71" width="8.2" height="12" fill="#16e9a4"/><rect x="1397.0" y="71" width="8.2" height="12" fill="#1ce38d"/><rect x="1405.0" y="71" width="8.2" height="12" fill="#21de76"/><rect x="1413.0" y="71" width="8.2" height="12" fill="#27d860"/><rect x="1421.0" y="71" width="8.2" height="12" fill="#2cd349"/><rect x="1429.0" y="71" width="8.2" height="12" fill="#32cd32"/><rect x="1437.0" y="71" width="8.2" height="12" fill="#52d52a"/><rect x="1445.0" y="71" width="8.2" height="12" fill="#71dc23"/><rect x="1453.0" y="71" width="8.2" height="12" fill="#91e41b"/><rect x="1461.0" y="71" width="8.2" height="12" fill="#b0ec13"/><rect x="1469.0" y="71" width="8.2" height="12" fill="#d0f30c"/><rect x="1477.0" y="71" width="8.2" height="12" fill="#effb04"/><rect x="1485.0" y="71" width="8.2" height="12" fill="#ffee00"/><rect x="1493.0" y="71" width="8.2" height="12" fill="#ffcc00"/><rect x="1501.0" y="71" width="8.2" height="12" fill="#ffaa00"/><rect x="1509.0" y="71" width="8.2" height="12" fill="#ff8800"/><rect x="1517.0" y="71" width="8.2" height="12" fill="#ff6600"/><rect x="1525.0" y="71" width="8.2" height="12" fill="#ff4400"/><rect x="1533.0" y="71" width="8.2" height="12" fill="#ff2200"/><rect x="1541.0" y="71" width="8.2" height="12" fill="#ff0000"/>
<text x="1287.5" y="81.4" text-anchor="end" textLength="31.0" lengthAdjust="spacingAndGlyphs" font-size="10">-90dBm</text>
<text x="1554.3" y="81.4" textLength="31.0" lengthAdjust="spacingAndGlyphs" font-size="10">-50dBm</text>
<rect x="957" y="410" width="4" height="2" fill="#2f86e8" opacity="0.11"/><rect x="1020" y="410" width="1" height="2" fill="#2f86e8" opacity="0.19"/><rect x="1026" y="410" width="3" height="2" fill="#2f86e8" opacity="0.29"/><rect x="1030" y="410" width="4" height="2" fill="#2f86e8" opacity="0.19"/><rect x="1041" y="410" width="2" height="2" fill="#2f86e8" opacity="0.29"/><rect x="1045" y="410" width="1" height="2" fill="#2f86e8" opacity="0.14"/><rect x="1048" y="410" width="2" height="2" fill="#2f86e8" opacity="0.29"/><rect x="1052" y="410" width="1" height="2" fill="#2f86e8" opacity="0.14"/><rect x="1055" y="410" width="4" height="2" fill="#2f86e8" opacity="0.24"/><rect x="1059" y="410" width="1" height="2" fill="#2f86e8" opacity="0.14"/><rect x="1060" y="410" width="4" height="2" fill="#2f86e8" opacity="0.19"/><rect x="1070" y="410" width="2" height="2" fill="#2f86e8" opacity="0.19"/><rect x="1074" y="410" width="3" height="2" fill="#2f86e8" opacity="0.29"/><rect x="1085" y="410" width="2" height="2" fill="#2f86e8" opacity="0.24"/><rect x="1088" y="410" width="4" height="2" fill="#2f86e8" opacity="0.29"/><rect x="1093" y="410" width="1" height="2" fill="#2f86e8" opacity="0.19"/><rect x="1094" y="410" width="2" height="2" fill="#2f86e8" opacity="0.24"/><rect x="1097" y="410" width="3" height="2" fill="#2f86e8" opacity="0.14"/><rect x="1100" y="410" width="2" height="2" fill="#2f86e8" opacity="0.58"/><rect x="1103" y="410" width="4" height="2" fill="#2f86e8" opacity="0.38"/><rect x="1108" y="410" width="2" height="2" fill="#2f86e8" opacity="0.48"/><rect x="1111" y="410" width="2" height="2" fill="#2f86e8" opacity="0.29"/><rect x="1117" y="410" width="1" height="2" fill="#2f86e8" opacity="0.24"/><rect x="1138" y="410" width="2" height="2" fill="#2f86e8" opacity="0.25"/><rect x="1140" y="410" width="1" height="2" fill="#2f86e8" opacity="0.21"/><rect x="1144" y="410" width="1" height="2" fill="#2f86e8" opacity="0.17"/><rect x="1147" y="410" width="2" height="2" fill="#2f86e8" opacity="0.13"/><rect x="1154" y="410" width="1" height="2" fill="#2f86e8" opacity="0.21"/><rect x="980" y="429" width="1" height="2" fill="#2f86e8" opacity="0.36"/><rect x="981" y="429" width="3" height="2" fill="#2f86e8" opacity="0.36"/><rect x="986" y="429" width="2" height="2" fill="#2f86e8" opacity="0.36"/><rect x="990" y="429" width="4" height="2" fill="#2f86e8" opacity="0.43"/><rect x="994" y="429" width="2" height="2" fill="#2f86e8" opacity="0.43"/><rect x="996" y="429" width="1" height="2" fill="#2f86e8" opacity="0.36"/><rect x="998" y="429" width="2" height="2" fill="#2f86e8" opacity="0.36"/><rect x="1000" y="429" width="2" height="2" fill="#2f86e8" opacity="0.29"/><rect x="1004" y="429" width="4" height="2" fill="#2f86e8" opacity="0.43"/><rect x="1008" y="429" width="2" height="2" fill="#2f86e8" opacity="0.29"/><rect x="1010" y="429" width="4" height="2" fill="#2f86e8" opacity="0.22"/><rect x="1014" y="429" width="2" height="2" fill="#2f86e8" opacity="0.43"/><rect x="1016" y="429" width="2" height="2" fill="#2f86e8" opacity="0.22"/><rect x="1018" y="429" width="2" height="2" fill="#2f86e8" opacity="0.36"/><rect x="1020" y="429" width="1" height="2" fill="#2f86e8" opacity="0.43"/><rect x="1021" y="429" width="2" height="2" fill="#2f86e8" opacity="0.43"/><rect x="1023" y="429" width="3" height="2" fill="#2f86e8" opacity="0.22"/><rect x="1026" y="429" width="2" height="2" fill="#2f86e8" opacity="0.13"/><rect x="1031" y="429" width="4" height="2" fill="#2f86e8" opacity="0.21"/><rect x="1035" y="429" width="2" height="2" fill="#2f86e8" opacity="0.25"/><rect x="1039" y="429" width="4" height="2" fill="#2f86e8" opacity="0.21"/><rect x="1043" y="429" width="2" height="2" fill="#2f86e8" opacity="0.17"/><rect x="1048" y="429" width="1" height="2" fill="#2f86e8" opacity="0.25"/><rect x="1060" y="429" width="3" height="2" fill="#2f86e8" opacity="0.24"/><rect x="1064" y="429" width="4" height="2" fill="#2f86e8" opacity="0.36"/><rect x="1068" y="429" width="3" height="2" fill="#2f86e8" opacity="0.18"/><rect x="1075" y="429" width="1" height="2" fill="#2f86e8" opacity="0.18"/><rect x="1078" y="429" width="1" height="2" fill="#2f86e8" opacity="0.18"/><rect x="1079" y="429" width="3" height="2" fill="#2f86e8" opacity="0.36"/><rect x="1082" y="429" width="4" height="2" fill="#2f86e8" opacity="0.18"/><rect x="1088" y="429" width="2" height="2" fill="#2f86e8" opacity="0.30"/><rect x="1090" y="429" width="1" height="2" fill="#2f86e8" opacity="0.36"/><rect x="1092" y="429" width="4" height="2" fill="#2f86e8" opacity="0.18"/><rect x="1096" y="429" width="4" height="2" fill="#2f86e8" opacity="0.24"/><rect x="1100" y="429" width="4" height="2" fill="#2f86e8" opacity="0.18"/><rect x="1105" y="429" width="4" height="2" fill="#2f86e8" opacity="0.18"/><rect x="1109" y="429" width="2" height="2" fill="#2f86e8" opacity="0.36"/><rect x="1113" y="429" width="2" height="2" fill="#2f86e8" opacity="0.36"/><rect x="1116" y="429" width="4" height="2" fill="#2f86e8" opacity="0.18"/><rect x="1122" y="429" width="4" height="2" fill="#2f86e8" opacity="0.22"/><rect x="1133" y="429" width="2" height="2" fill="#2f86e8" opacity="0.22"/><rect x="1141" y="429" width="2" height="2" fill="#2f86e8" opacity="0.14"/>
<path d="M87 938.5H788M87 919.5H788M87 900.5H788M87 881.5H788M87 862.5H788M87 844.5H788M87 825.5H788M87 806.5H788M87 787.5H788M87 768.5H788M87 749.5H788M87 730.5H788M87 711.5H788M87 692.5H788M87 674.5H788M87 655.5H788M87 636.5H788M87 617.5H788M87 598.5H788" stroke="#dcdcdc" stroke-width="1" stroke-dasharray="1 1" fill="none" shape-rendering="crispEdges"/>
<rect x="84" y="581" width="1" height="376" fill="#a6b4cc"/><rect x="85" y="580" width="1" height="377" fill="#969cb0"/><rect x="86" y="580" width="1" height="377" fill="#7c8298"/><rect x="788" y="581" width="1" height="377" fill="#b4bcc6"/><rect x="789" y="582" width="1" height="376" fill="#707c90"/><rect x="86" y="956" width="703" height="1" fill="#9c9c9c"/><rect x="87" y="957" width="703" height="1" fill="#6e7a90"/>
<text x="82.6" y="960.3" text-anchor="end">0</text>
<text x="82.6" y="941.4" text-anchor="end">5</text>
<text x="82.6" y="922.5" text-anchor="end">10</text>
<text x="82.6" y="903.7" text-anchor="end">15</text>
<text x="82.6" y="884.8" text-anchor="end">20</text>
<text x="82.6" y="865.9" text-anchor="end">25</text>
<text x="82.6" y="847.0" text-anchor="end">30</text>
<text x="82.6" y="828.1" text-anchor="end">35</text>
<text x="82.6" y="809.2" text-anchor="end">40</text>
<text x="82.6" y="790.3" text-anchor="end">45</text>
<text x="82.6" y="771.4" text-anchor="end">50</text>
<text x="82.6" y="752.5" text-anchor="end">55</text>
<text x="82.6" y="733.7" text-anchor="end">60</text>
<text x="82.6" y="714.8" text-anchor="end">65</text>
<text x="82.6" y="695.9" text-anchor="end">70</text>
<text x="82.6" y="677.0" text-anchor="end">75</text>
<text x="82.6" y="658.1" text-anchor="end">80</text>
<text x="82.6" y="639.2" text-anchor="end">85</text>
<text x="82.6" y="620.3" text-anchor="end">90</text>
<text x="82.6" y="601.4" text-anchor="end">95</text>
<text x="82.6" y="582.5" text-anchor="end">100</text>
<text x="436.3" y="973.7" text-anchor="middle" textLength="52.7" lengthAdjust="spacingAndGlyphs">Time Span</text>
<text x="47.2" y="771.3" text-anchor="middle" textLength="55.4" lengthAdjust="spacingAndGlyphs" transform="rotate(-90 47.2 767.4)">Percentage</text>
<rect x="534.5" y="543.5" width="18" height="8" fill="#00c000" stroke="#0a7a0a" stroke-width="1"/><text x="556.3" y="551.2" textLength="48.6" lengthAdjust="spacingAndGlyphs" font-size="10">Channel: 10</text>
<rect x="618.5" y="543.5" width="18" height="8" fill="#ffff00" stroke="#5a5a00" stroke-width="1"/><text x="640.4" y="551.2" textLength="48.0" lengthAdjust="spacingAndGlyphs" font-size="10">Channel: 11</text>
<rect x="702.5" y="543.5" width="18" height="8" fill="#ff0000" stroke="#8a2a10" stroke-width="1"/><text x="724.0" y="551.2" textLength="49.0" lengthAdjust="spacingAndGlyphs" font-size="10">Channel: 12</text>
<path d="M906 924.5H1598M906 908.5H1598M906 892.5H1598M906 875.5H1598M906 859.5H1598M906 842.5H1598M906 826.5H1598M906 810.5H1598M906 793.5H1598M906 777.5H1598M906 760.5H1598M906 744.5H1598M906 728.5H1598M906 711.5H1598M906 695.5H1598M906 678.5H1598M906 662.5H1598M906 646.5H1598M906 629.5H1598M906 613.5H1598M906 596.5H1598M906 580.5H1598" stroke="#e0e0e0" stroke-width="1" stroke-dasharray="1 1" fill="none" shape-rendering="crispEdges"/>
<rect x="902" y="573" width="1" height="369" fill="#a6b4cc"/><rect x="903" y="572" width="1" height="370" fill="#969cb0"/><rect x="904" y="572" width="1" height="370" fill="#7c8298"/><rect x="1598" y="573" width="1" height="370" fill="#b4bcc6"/><rect x="1599" y="574" width="1" height="369" fill="#707c90"/><rect x="904" y="941" width="695" height="1" fill="#9c9c9c"/><rect x="905" y="942" width="695" height="1" fill="#6e7a90"/>
<text x="902.0" y="944.6" text-anchor="end">-120</text>
<text x="902.0" y="928.2" text-anchor="end">-116</text>
<text x="902.0" y="911.8" text-anchor="end">-112</text>
<text x="902.0" y="895.4" text-anchor="end">-108</text>
<text x="902.0" y="879.0" text-anchor="end">-104</text>
<text x="902.0" y="862.6" text-anchor="end">-100</text>
<text x="902.0" y="846.2" text-anchor="end">-96</text>
<text x="902.0" y="829.8" text-anchor="end">-92</text>
<text x="902.0" y="813.4" text-anchor="end">-88</text>
<text x="902.0" y="797.0" text-anchor="end">-84</text>
<text x="902.0" y="780.6" text-anchor="end">-80</text>
<text x="902.0" y="764.2" text-anchor="end">-76</text>
<text x="902.0" y="747.8" text-anchor="end">-72</text>
<text x="902.0" y="731.4" text-anchor="end">-68</text>
<text x="902.0" y="715.0" text-anchor="end">-64</text>
<text x="902.0" y="698.6" text-anchor="end">-60</text>
<text x="902.0" y="682.2" text-anchor="end">-56</text>
<text x="902.0" y="665.8" text-anchor="end">-52</text>
<text x="902.0" y="649.4" text-anchor="end">-48</text>
<text x="902.0" y="633.0" text-anchor="end">-44</text>
<text x="902.0" y="616.6" text-anchor="end">-40</text>
<text x="902.0" y="600.2" text-anchor="end">-36</text>
<text x="902.0" y="583.8" text-anchor="end">-32</text>
<text x="979.0" y="953.7" text-anchor="middle">1</text>
<text x="1016.7" y="953.7" text-anchor="middle">2</text>
<text x="1054.4" y="953.7" text-anchor="middle">3</text>
<text x="1092.1" y="953.7" text-anchor="middle">4</text>
<text x="1129.8" y="953.7" text-anchor="middle">5</text>
<text x="1167.5" y="953.7" text-anchor="middle">6</text>
<text x="1205.2" y="953.7" text-anchor="middle">7</text>
<text x="1242.9" y="953.7" text-anchor="middle">8</text>
<text x="1280.6" y="953.7" text-anchor="middle">9</text>
<text x="1318.3" y="953.7" text-anchor="middle">10</text>
<text x="1356.0" y="953.7" text-anchor="middle">11</text>
<text x="1393.7" y="953.7" text-anchor="middle">12</text>
<text x="1431.4" y="953.7" text-anchor="middle">13</text>
<text x="1521.9" y="953.7" text-anchor="middle">14</text>
<text x="1250.0" y="973.9" text-anchor="middle" textLength="40.5" lengthAdjust="spacingAndGlyphs">Channel</text>
<text x="857.3" y="761.4" text-anchor="middle" textLength="62.7" lengthAdjust="spacingAndGlyphs" transform="rotate(-90 857.3 757.5)">Power [dBm]</text>
<rect x="1294.0" y="541" width="8.2" height="12" fill="#00008b"/><rect x="1302.0" y="541" width="8.2" height="12" fill="#00209a"/><rect x="1310.0" y="541" width="8.2" height="12" fill="#0040a8"/><rect x="1318.0" y="541" width="8.2" height="12" fill="#0060b6"/><rect x="1326.0" y="541" width="8.2" height="12" fill="#0080c5"/><rect x="1334.0" y="541" width="8.2" height="12" fill="#009fd4"/><rect x="1342.0" y="541" width="8.2" height="12" fill="#00bfe2"/><rect x="1350.0" y="541" width="8.2" height="12" fill="#00dff0"/><rect x="1358.0" y="541" width="8.2" height="12" fill="#00ffff"/><rect x="1366.0" y="541" width="8.2" height="12" fill="#06f9e8"/><rect x="1374.0" y="541" width="8.2" height="12" fill="#0bf4d1"/><rect x="1382.0" y="541" width="8.2" height="12" fill="#11eebb"/><rect x="1390.0" y="541" width="8.2" height="12" fill="#16e9a4"/><rect x="1398.0" y="541" width="8.2" height="12" fill="#1ce38d"/><rect x="1406.0" y="541" width="8.2" height="12" fill="#21de76"/><rect x="1414.0" y="541" width="8.2" height="12" fill="#27d860"/><rect x="1422.0" y="541" width="8.2" height="12" fill="#2cd349"/><rect x="1430.0" y="541" width="8.2" height="12" fill="#32cd32"/><rect x="1438.0" y="541" width="8.2" height="12" fill="#52d52a"/><rect x="1446.0" y="541" width="8.2" height="12" fill="#71dc23"/><rect x="1454.0" y="541" width="8.2" height="12" fill="#91e41b"/><rect x="1462.0" y="541" width="8.2" height="12" fill="#b0ec13"/><rect x="1470.0" y="541" width="8.2" height="12" fill="#d0f30c"/><rect x="1478.0" y="541" width="8.2" height="12" fill="#effb04"/><rect x="1486.0" y="541" width="8.2" height="12" fill="#ffee00"/><rect x="1494.0" y="541" width="8.2" height="12" fill="#ffcc00"/><rect x="1502.0" y="541" width="8.2" height="12" fill="#ffaa00"/><rect x="1510.0" y="541" width="8.2" height="12" fill="#ff8800"/><rect x="1518.0" y="541" width="8.2" height="12" fill="#ff6600"/><rect x="1526.0" y="541" width="8.2" height="12" fill="#ff4400"/><rect x="1534.0" y="541" width="8.2" height="12" fill="#ff2200"/><rect x="1542.0" y="541" width="8.2" height="12" fill="#ff0000"/>
<text x="1288.3" y="551.4" text-anchor="end" textLength="25.5" lengthAdjust="spacingAndGlyphs" font-size="10">0.00%</text>
<text x="1555.0" y="551.4" textLength="30.5" lengthAdjust="spacingAndGlyphs" font-size="10">35.00%</text>
</svg>
</body></html>
